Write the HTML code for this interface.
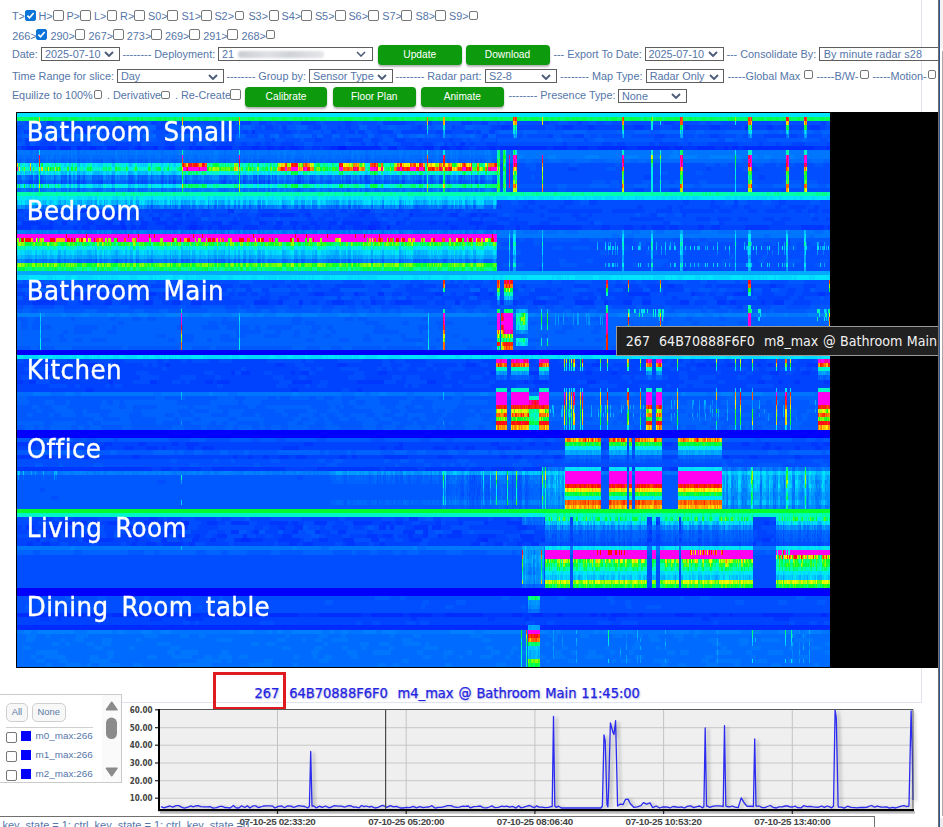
<!DOCTYPE html><html><head><meta charset="utf-8"><title>heatmap</title><style>
html,body{margin:0;padding:0;background:#fff;overflow:hidden;}
body{width:943px;height:827px;overflow:hidden;position:relative;font-family:"Liberation Sans",Arial,sans-serif;font-size:10.85px;color:#5576a9;}
.a{position:absolute;white-space:nowrap;}
.t{position:absolute;white-space:nowrap;line-height:12px;height:12px;}
.cb{position:absolute;box-sizing:border-box;border:1px solid #767676;border-radius:2px;background:#fff;}
.cb.on{background:#0b74d8;border-color:#0b74d8;}
.sel{position:absolute;box-sizing:border-box;border:1px solid #5e5e5e;background:#fff;height:13.8px;line-height:13px;font-size:10.85px;padding-left:3px;white-space:nowrap;overflow:hidden;}
.sel svg{position:absolute;right:4.5px;top:3.4px;}
.btn{position:absolute;box-sizing:border-box;background:#0d9a0d;color:#fff;border-radius:4px;text-align:center;font-size:10.2px;line-height:19px;height:19.5px;box-shadow:0 2px 2px rgba(0,0,0,.28),0 0 1px rgba(0,0,0,.2);}
.hm{position:absolute;left:0;top:0;}
.hmw{position:absolute;left:17px;top:113px;width:813px;height:554px;overflow:hidden;}
.lab{position:absolute;left:26.8px;color:#fff;font-family:"DejaVu Sans","Liberation Sans",sans-serif;font-size:24.6px;line-height:30px;white-space:nowrap;word-spacing:4.6px;letter-spacing:.4px;transform:scale(1,1.07);transform-origin:0 0;-webkit-text-stroke:.35px #fff;}
.tip{position:absolute;left:616px;top:326px;width:340px;height:30px;box-sizing:border-box;border:1px solid #9a9a9a;background:#212121;color:#f2f2f2;font-family:"DejaVu Sans Condensed","DejaVu Sans","Liberation Sans",sans-serif;font-size:14.1px;line-height:28px;padding-left:8.8px;white-space:pre;word-spacing:.5px;}
.info{position:absolute;left:254.5px;top:684px;color:#2222e2;font-family:"DejaVu Sans Condensed","DejaVu Sans","Liberation Sans",sans-serif;font-size:14.5px;line-height:18px;white-space:pre;word-spacing:.75px;-webkit-text-stroke:.25px #2222e2;text-shadow:1px 1px 2px rgba(60,60,160,.35);}
.lg{position:absolute;font-size:9.9px;line-height:12px;white-space:nowrap;}
.pill{position:absolute;box-sizing:border-box;border:1px solid #cfcfcf;border-radius:5px;background:#f7f7f7;font-size:9.4px;line-height:15.8px;height:18.6px;text-align:center;top:703px;color:#5b79a6;}
.ax{position:absolute;font-family:"DejaVu Sans Condensed","DejaVu Sans","Liberation Sans",sans-serif;font-weight:bold;font-size:8px;line-height:10px;color:#444;white-space:nowrap;}
</style></head><body><div class="a" style="left:921px;top:0;width:1px;height:702px;background:#dfe4ee"></div>
<span class="t" style="left:11.9px;top:10.4px;">T&gt;</span>
<span class="cb on" style="left:25.1px;top:10.1px;width:10.9px;height:10.9px"><svg style="position:absolute;left:-1px;top:-1px" width="10.9" height="10.9" viewBox="0 0 13 13"><path d="M2.8 6.7l2.6 2.7 4.9-5.9" fill="none" stroke="#fff" stroke-width="1.9"/></svg></span>
<span class="t" style="left:38.4px;top:10.4px;">H&gt;</span>
<span class="cb" style="left:53.1px;top:10.1px;width:10.9px;height:10.9px"></span>
<span class="t" style="left:66.4px;top:10.4px;">P&gt;</span>
<span class="cb" style="left:80.1px;top:10.1px;width:10.9px;height:10.9px"></span>
<span class="t" style="left:93.9px;top:10.4px;">L&gt;</span>
<span class="cb" style="left:106.5px;top:10.1px;width:10.9px;height:10.9px"></span>
<span class="t" style="left:120.1px;top:10.4px;">R&gt;</span>
<span class="cb" style="left:134.4px;top:10.1px;width:10.9px;height:10.9px"></span>
<span class="t" style="left:148.1px;top:10.4px;">S0&gt;</span>
<span class="cb" style="left:167.4px;top:10.1px;width:10.9px;height:10.9px"></span>
<span class="t" style="left:181.4px;top:10.4px;">S1&gt;</span>
<span class="cb" style="left:200.9px;top:10.1px;width:10.9px;height:10.9px"></span>
<span class="t" style="left:214.4px;top:10.4px;">S2&gt;</span>
<span class="cb" style="left:235.3px;top:11.3px;width:8.4px;height:8.4px"></span>
<span class="t" style="left:248.4px;top:10.4px;">S3&gt;</span>
<span class="cb" style="left:268.6px;top:10.1px;width:10.9px;height:10.9px"></span>
<span class="t" style="left:281.6px;top:10.4px;">S4&gt;</span>
<span class="cb" style="left:301.1px;top:10.1px;width:10.9px;height:10.9px"></span>
<span class="t" style="left:314.9px;top:10.4px;">S5&gt;</span>
<span class="cb" style="left:335.1px;top:10.1px;width:10.9px;height:10.9px"></span>
<span class="t" style="left:348.4px;top:10.4px;">S6&gt;</span>
<span class="cb" style="left:367.9px;top:10.1px;width:10.9px;height:10.9px"></span>
<span class="t" style="left:382.2px;top:10.4px;">S7&gt;</span>
<span class="cb" style="left:401.4px;top:10.1px;width:10.9px;height:10.9px"></span>
<span class="t" style="left:415.5px;top:10.4px;">S8&gt;</span>
<span class="cb" style="left:434.7px;top:10.1px;width:10.9px;height:10.9px"></span>
<span class="t" style="left:449.0px;top:10.4px;">S9&gt;</span>
<span class="cb" style="left:469.4px;top:11.3px;width:8.3px;height:8.3px"></span>
<span class="t" style="left:12.2px;top:30.4px;">266&gt;</span>
<span class="cb on" style="left:36.4px;top:28.9px;width:10.9px;height:10.9px"><svg style="position:absolute;left:-1px;top:-1px" width="10.9" height="10.9" viewBox="0 0 13 13"><path d="M2.8 6.7l2.6 2.7 4.9-5.9" fill="none" stroke="#fff" stroke-width="1.9"/></svg></span>
<span class="t" style="left:50.4px;top:30.4px;">290&gt;</span>
<span class="cb" style="left:74.6px;top:28.9px;width:10.9px;height:10.9px"></span>
<span class="t" style="left:88.6px;top:30.4px;">267&gt;</span>
<span class="cb" style="left:112.8px;top:28.9px;width:10.9px;height:10.9px"></span>
<span class="t" style="left:126.8px;top:30.4px;">273&gt;</span>
<span class="cb" style="left:151.0px;top:28.9px;width:10.9px;height:10.9px"></span>
<span class="t" style="left:165.0px;top:30.4px;">269&gt;</span>
<span class="cb" style="left:189.2px;top:28.9px;width:10.9px;height:10.9px"></span>
<span class="t" style="left:203.2px;top:30.4px;">291&gt;</span>
<span class="cb" style="left:227.4px;top:28.9px;width:10.9px;height:10.9px"></span>
<span class="t" style="left:241.4px;top:30.4px;">268&gt;</span>
<span class="cb" style="left:265.8px;top:30.0px;width:8.9px;height:8.9px"></span>
<span class="t" style="left:11.9px;top:48.4px;">Date:</span>
<span class="sel" style="left:41.0px;top:47.1px;width:78.5px;height:13.8px">2025-07-10<svg width="10" height="6" viewBox="0 0 10 6"><path d="M1 1l4 4 4-4" fill="none" stroke="#4d5d78" stroke-width="1.9"/></svg></span>
<span class="t" style="left:122.4px;top:48.4px;">-------- Deployment:</span>
<span class="sel" style="left:218px;top:47.1px;width:155px;height:13.8px">21<span style="position:absolute;left:19px;top:2.5px;width:86px;height:7px;border-radius:3px;background:linear-gradient(90deg,#c9ccd2,#dfe1e5 35%,#cfd2d8 60%,#e6e7ea);filter:blur(1.2px)"></span><svg width="10" height="6" viewBox="0 0 10 6" style="right:6px"><path d="M1 1l4 4 4-4" fill="none" stroke="#4d5d78" stroke-width="1.6"/></svg></span>
<span class="btn" style="left:378.0px;top:45.0px;width:83.5px">Update</span>
<span class="btn" style="left:465.5px;top:45.0px;width:84.0px">Download</span>
<span class="t" style="left:553.4px;top:48.4px;">--- Export To Date:</span>
<span class="sel" style="left:644.5px;top:47.1px;width:79.2px;height:13.8px">2025-07-10<svg width="10" height="6" viewBox="0 0 10 6"><path d="M1 1l4 4 4-4" fill="none" stroke="#4d5d78" stroke-width="1.9"/></svg></span>
<span class="t" style="left:726.4px;top:48.4px;">--- Consolidate By:</span>
<span class="sel" style="left:818.7px;top:47.1px;width:140.0px;height:13.8px"><span style="padding-left:1px;letter-spacing:.07px">By minute radar s28</span><svg width="10" height="6" viewBox="0 0 10 6"><path d="M1 1l4 4 4-4" fill="none" stroke="#4d5d78" stroke-width="1.9"/></svg></span>
<span class="t" style="left:11.9px;top:70.4px;">Time Range for slice:</span>
<span class="sel" style="left:117.0px;top:69.4px;width:106.6px;height:13.8px">Day<svg width="10" height="6" viewBox="0 0 10 6"><path d="M1 1l4 4 4-4" fill="none" stroke="#4d5d78" stroke-width="1.9"/></svg></span>
<span class="t" style="left:226.4px;top:70.4px;">-------- Group by:</span>
<span class="sel" style="left:309.0px;top:69.4px;width:83.7px;height:13.8px">Sensor Type<svg width="10" height="6" viewBox="0 0 10 6"><path d="M1 1l4 4 4-4" fill="none" stroke="#4d5d78" stroke-width="1.9"/></svg></span>
<span class="t" style="left:395.4px;top:70.4px;">-------- Radar part:</span>
<span class="sel" style="left:485.0px;top:69.4px;width:71.5px;height:13.8px">S2-8<svg width="10" height="6" viewBox="0 0 10 6"><path d="M1 1l4 4 4-4" fill="none" stroke="#4d5d78" stroke-width="1.9"/></svg></span>
<span class="t" style="left:560.1px;top:70.4px;">-------- Map Type:</span>
<span class="sel" style="left:645.7px;top:69.4px;width:78.8px;height:13.8px">Radar Only<svg width="10" height="6" viewBox="0 0 10 6"><path d="M1 1l4 4 4-4" fill="none" stroke="#4d5d78" stroke-width="1.9"/></svg></span>
<span class="t" style="left:727.4px;top:70.4px;">-----Global Max</span>
<span class="cb" style="left:804.0px;top:70.3px;width:8.7px;height:8.7px"></span>
<span class="t" style="left:816.4px;top:70.4px;">-----B/W-</span>
<span class="cb" style="left:860.0px;top:70.3px;width:8.7px;height:8.7px"></span>
<span class="t" style="left:872.4px;top:70.4px;">-----Motion-</span>
<span class="cb" style="left:927.5px;top:70.3px;width:8.7px;height:8.7px"></span>
<span class="t" style="left:11.9px;top:89.1px;">Equilize to 100%</span>
<span class="cb" style="left:93.7px;top:90.3px;width:8.3px;height:8.3px"></span>
<span class="t" style="left:106.9px;top:89.1px;">. Derivative</span>
<span class="cb" style="left:161.4px;top:90.5px;width:8.3px;height:8.3px"></span>
<span class="t" style="left:174.9px;top:89.1px;">. Re-Create</span>
<span class="cb" style="left:230.3px;top:89.2px;width:10.4px;height:10.4px"></span>
<span class="btn" style="left:245.0px;top:87.0px;width:82.0px">Calibrate</span>
<span class="btn" style="left:333.0px;top:87.0px;width:82.5px">Floor Plan</span>
<span class="btn" style="left:421.0px;top:87.0px;width:82.7px">Animate</span>
<span class="t" style="left:508.4px;top:89.1px;">-------- Presence Type:</span>
<span class="sel" style="left:618.0px;top:88.9px;width:68.5px;height:13.8px">None<svg width="10" height="6" viewBox="0 0 10 6"><path d="M1 1l4 4 4-4" fill="none" stroke="#4d5d78" stroke-width="1.9"/></svg></span>
<div class="a" style="left:16px;top:112px;width:922px;height:556px;background:#000"></div>
<div class="hmw"><svg class="hm" width="813" height="554" viewBox="0 0 813 554" shape-rendering="crispEdges" fill="none"><path fill="#00e4ff" d="M0 0h813v4h-813zM0 83h813v4h-813zM0 162h813v5h-813z"/><path fill="#00ff6b" d="M0 4h813v4h-813z"/><path fill="#004eff" d="M0 8h813v4h-813zM0 21h813v4h-813zM0 29h813v4h-813zM0 50h813v4h-813zM0 54h813v4h-813zM0 58h813v4h-813zM0 62h813v5h-813zM0 67h813v4h-813zM0 75h813v4h-813zM0 87h813v5h-813zM0 92h813v4h-813zM0 100h813v4h-813zM0 104h813v4h-813zM0 108h813v4h-813zM0 129h813v4h-813zM0 133h813v4h-813zM0 137h813v5h-813zM0 142h813v4h-813zM0 146h813v4h-813zM0 150h813v4h-813zM0 154h813v4h-813zM0 167h813v4h-813zM0 175h813v4h-813zM0 183h813v4h-813zM0 192h813v4h-813zM0 246h813v4h-813zM0 346h813v4h-813zM0 350h813v4h-813zM0 417h813v4h-813zM0 442h813v4h-813zM0 446h813v4h-813zM0 450h813v4h-813zM0 454h813v4h-813zM0 458h813v4h-813zM0 462h813v5h-813zM0 467h813v4h-813zM0 471h813v4h-813zM0 483h813v4h-813zM0 487h813v5h-813zM0 492h813v4h-813zM0 496h813v4h-813z"/><path fill="#0043ff" d="M0 12h813v5h-813zM0 96h813v4h-813zM0 112h813v5h-813zM0 171h813v4h-813zM0 179h813v4h-813zM0 187h813v5h-813zM0 250h813v4h-813zM0 254h813v4h-813zM0 258h813v4h-813zM0 262h813v5h-813zM0 267h813v4h-813zM0 271h813v4h-813zM0 275h813v4h-813zM0 329h813v4h-813zM0 333h813v4h-813zM0 342h813v4h-813zM0 404h813v4h-813zM0 412h813v5h-813zM0 421h813v4h-813zM0 425h813v4h-813zM0 429h813v4h-813zM0 504h813v4h-813zM0 508h813v4h-813z"/><path fill="#0058ff" d="M0 17h813v4h-813zM0 25h813v4h-813zM0 196h813v4h-813zM0 233h813v4h-813zM0 283h813v4h-813zM0 287h813v5h-813zM0 292h813v4h-813zM0 296h813v4h-813zM0 300h813v4h-813zM0 304h813v4h-813zM0 312h813v5h-813zM0 325h813v4h-813zM0 362h813v5h-813zM0 367h813v4h-813zM0 371h813v4h-813zM0 375h813v4h-813zM0 379h813v4h-813zM0 383h813v4h-813zM0 387h813v5h-813zM0 392h813v4h-813z"/><path fill="#002cff" d="M0 33h813v4h-813zM0 500h813v4h-813zM0 512h813v5h-813z"/><path fill="#0076ff" d="M0 37h813v5h-813zM0 117h813v4h-813zM0 279h813v4h-813zM0 433h813v4h-813z"/><path fill="#006cff" d="M0 42h813v4h-813zM0 46h813v4h-813zM0 521h813v4h-813zM0 525h813v4h-813zM0 529h813v4h-813zM0 533h813v4h-813zM0 537h813v5h-813zM0 542h813v4h-813zM0 546h813v4h-813zM0 550h813v4h-813z"/><path fill="#0062ff" d="M0 71h813v4h-813zM0 204h813v4h-813zM0 208h813v4h-813zM0 212h813v5h-813zM0 217h813v4h-813zM0 221h813v4h-813zM0 225h813v4h-813zM0 229h813v4h-813zM0 308h813v4h-813zM0 337h813v5h-813zM0 437h813v5h-813z"/><path fill="#00ffaa" d="M0 79h813v4h-813z"/><path fill="#ff00f0" d="M0 121h813v4h-813zM0 125h813v4h-813z"/><path fill="#00a8ff" d="M0 158h813v4h-813z"/><path fill="#0080ff" d="M0 200h813v4h-813zM0 358h813v4h-813zM0 517h813v4h-813z"/><path fill="#0000fc" d="M0 237h813v5h-813zM0 317h813v4h-813zM0 321h813v4h-813zM0 475h813v4h-813zM0 479h813v4h-813z"/><path fill="#00d8ff" d="M0 242h813v4h-813z"/><path fill="#0037ff" d="M0 354h813v4h-813zM0 408h813v4h-813z"/><path fill="#00ff2c" d="M0 396h813v4h-813z"/><path fill="#00f4cc" d="M0 400h813v4h-813z"/><path stroke="#001dfe" stroke-width="4" d="M321 35h8"/><path stroke="#002cff" stroke-width="4" d="M48 410h8m108 0h8m462 0h1m4 0h2m117 0h1M224 427h9m231 0h7"/><path stroke="#002cff" stroke-width="5" d="M105 114.5h4m64 0h7m171 0h8m11 0h3"/><path stroke="#0037ff" stroke-width="4" d="M66 19h4m165 0h3M443 31h5M5 35h5m13 0h8m33 0h8m7 0h7m14 0h12m5 0h3m5 0h12m10 0h5m23 0h4m7 0h13m23 0h13m7 0h8m7 0h5m6 0h5m8 0h6m8 0h8m3 0h7m75 0h19m25 0h7m6 0h7m7 0h13m7 0h4m46 0h7m14 0h10m11 0h10m29 0h10m33 0h4m8 0h15m18 0h9m4 0h4m6 0h5m71 0h13M60 69h1m190 0h1M63 98h8m140 0h6m129 0h7M21 102h8m51 0h20m4 0h4m49 0h8m4 0h3m72 0h13m6 0h14m12 0h5m48 0h6m44 0h4m37 0h8m12 0h7m5 0h7M135 106h8M5 110h19m8 0h4m9 0h5m20 0h7m11 0h8m7 0h5m16 0h7m8 0h11m6 0h9m8 0h7m15 0h10m9 0h8m20 0h7m10 0h7m7 0h8m12 0h7m12 0h8m5 0h21m7 0h10m16 0h4m30 0h7m8 0h3m21 0h14M93 173h10m59 0h2m1 0h2m484 0h6m96 0h6M17 181h9m18 0h5m9 0h7m18 0h5m7 0h4m31 0h9m7 0h10m32 0h8m101 0h10m30 0h4m20 0h6m51 0h8m31 0h6m9 0h5m135 0h21m41 0h4m39 0h14m70 0h7M68 185h7M69 252h13m14 0h7m46 0h4m105 0h10m52 0h10m119 0h10m101 0h3m1 0h1m10 0h8m97 0h9m4 0h6m11 0h8m22 0h4m7 0h5m34 0h11M30 260h8m32 0h8m136 0h4m6 0h9m41 0h4m5 0h9m69 0h9m103 0h6m33 0h10m46 0h7m19 0h7m152 0h9m23 0h8M0 269h6m6 0h7m73 0h4m37 0h7m48 0h8m4 0h13m62 0h20m45 0h27m43 0h9m88 0h4m5 0h15m39 0h9m162 0h7m13 0h5m11 0h6m24 0h6M69 277h8m197 0h7m59 0h5M0 331h19m17 0h17m34 0h8m26 0h8m26 0h6m8 0h13m105 0h9m86 0h4m88 0h8m30 0h6m9 0h7m50 0h3m60 0h9m69 0h8m15 0h5m41 0h7m5 0h7M32 335h5m14 0h8m22 0h7m19 0h10m12 0h12m4 0h4m21 0h7m8 0h12m68 0h17m81 0h6m8 0h9m30 0h13m9 0h4m6 0h10m22 0h14m5 0h6m105 0h2m133 0h8m5 0h7m13 0h5m15 0h7M0 344h14m14 0h9m28 0h6m7 0h4m33 0h8m93 0h4m11 0h5m10 0h6m10 0h10m7 0h10m33 0h7m6 0h5m27 0h24m30 0h14m48 0h8m6 0h8m13 0h5m14 0h7m47 0h1m115 0h5m21 0h8m37 0h6M26 406h5m101 0h8m252 0h9M26 419h10m15 0h7m92 0h8m56 0h8m15 0h5m33 0h6m17 0h5m18 0h8m57 0h12m8 0h5m24 0h10m187 0h3M32 423h8m25 0h10m36 0h9m26 0h6m9 0h7m9 0h6m17 0h10m16 0h4m35 0h10m75 0h10m6 0h10m15 0h5m10 0h5m10 0h4m5 0h15m16 0h18m24 0h14M19 427h4m43 0h30m22 0h4m22 0h6m25 0h7m11 0h6m18 0h7m9 0h13m15 0h22m19 0h9m15 0h11m17 0h8m30 0h13m54 0h5m41 0h12m7 0h4m26 0h2m74 0h5m27 0h2m81 0h9m4 0h1M10 431h6m9 0h8m81 0h6m9 0h10m7 0h20m6 0h6m94 0h8m6 0h10m33 0h9m25 0h5m86 0h9m15 0h8m14 0h6m8 0h8m214 0h3M14 502h6m15 0h15m17 0h7m8 0h13m14 0h7m30 0h4m8 0h17m8 0h10m16 0h15m19 0h10m28 0h21m42 0h10m32 0h6m23 0h13m38 0h29m10 0h10m11 0h14m6 0h27m7 0h4m5 0h5m16 0h11m5 0h32m19 0h17m8 0h10m4 0h29m31 0h28m6 0h3M23 506h9m8 0h4m89 0h12m24 0h17m208 0h6m71 0h7m30 0h4m79 0h8m86 0h8m64 0h15"/><path stroke="#0037ff" stroke-width="5" d="M484 14.5h9m53 0h10m15 0h6m40 0h10m41 0h4m21 0h10m25 0h3m19 0h6m37 0h10M0 114.5h14m7 0h15m21 0h3m5 0h8m6 0h26m9 0h5m3 0h8m18 0h12m9 0h4m7 0h6m5 0h4m6 0h14m12 0h14m16 0h7m12 0h3m6 0h7m6 0h5m8 0h3m8 0h6m8 0h15m8 0h5m69 0h8m18 0h3m8 0h17m12 0h4m10 0h52m19 0h9m14 0h9m8 0h5m6 0h13m4 0h9m20 0h6m7 0h9m25 0h24m32 0h23m4 0h2M15 189.5h23m28 0h8m14 0h7m32 0h9m19 0h9m10 0h10m53 0h14m10 0h5m16 0h4m29 0h12m27 0h5m19 0h17m43 0h5m40 0h4m9 0h4m16 0h13m29 0h19m10 0h4m15 0h9m10 0h9m29 0h9m28 0h9m4 0h6m25 0h4m9 0h10M9 414.5h8m17 0h14m15 0h4m40 0h8m41 0h15m91 0h6m9 0h9m76 0h7m4 0h4m20 0h14m4 0h9m76 0h10m153 0h1"/><path stroke="#0043ff" stroke-width="4" d="M19 10h3m8 0h7m9 0h8m45 0h6m29 0h6m4 0h7m50 0h6m4 0h7m6 0h10m8 0h7m35 0h15m29 0h6m32 0h23m22 0h4m29 0h11m9 0h7m53 0h1m1 0h6m28 0h5m82 0h10m147 0h5M7 19h5m3 0h6m14 0h3m6 0h13m6 0h3m19 0h3m4 0h7m11 0h5m34 0h3m5 0h3m6 0h8m20 0h3m12 0h11m6 0h5m35 0h8m40 0h5m13 0h6m3 0h7m13 0h15m8 0h26m9 0h7m2 0h7m13 0h8m4 0h4m8 0h6M88 23h5m372 0h6m60 0h5m21 0h10m71 0h10m45 0h9m45 0h22m3 0h8M8 27h4m14 0h18m53 0h5m45 0h8m55 0h8m37 0h3m40 0h7m27 0h14m8 0h8m15 0h11m13 0h4m27 0h4m43 0h1M8 31h5m10 0h13m29 0h5m29 0h16m5 0h4m24 0h10m17 0h4m16 0h4m3 0h15m7 0h6m8 0h6m4 0h6m10 0h13m67 0h5m8 0h4m23 0h14m8 0h10m11 0h3m5 0h4m14 0h4m12 0h11m66 0h4m35 0h10m5 0h8m24 0h5m5 0h19m10 0h4m16 0h30m21 0h4m13 0h4m12 0h13m22 0h3M0 35h5m34 0h4m11 0h6m26 0h4m22 0h5m24 0h6m11 0h14m43 0h7m65 0h8m8 0h3m58 0h7m9 0h8m29 0h6m29 0h7M551 56h9m129 0h5m41 0h6M12 69h4m4 0h1m2 0h2m19 0h1m7 0h1m8 0h2m3 0h1m15 0h1m1 0h2m9 0h1m18 0h1m10 0h1m19 0h1m10 0h3m47 0h3m17 0h1m12 0h1m2 0h2m3 0h1m4 0h1m27 0h4m11 0h1m36 0h1m16 0h2m1 0h1m5 0h1m26 0h2m15 0h2m3 0h1m15 0h2m7 0h1m10 0h1m14 0h3m3 0h1M617 77h10m26 0h8m103 0h5M480 94h5m21 0h5m11 0h7m13 0h6m72 0h6m24 0h5m7 0h4m27 0h10m12 0h6m6 0h6m25 0h6m7 0h18m8 0h5M8 102h3m3 0h7m16 0h9m11 0h6m37 0h4m9 0h6m13 0h4m6 0h4m7 0h4m15 0h6m6 0h10m5 0h14m8 0h9m9 0h5m13 0h6m14 0h5m4 0h3m17 0h13m13 0h10m6 0h10m6 0h7m5 0h5m15 0h29m5 0h3m16 0h4m7 0h5m7 0h8m43 0h4m28 0h8m8 0h4m58 0h7m25 0h4M0 106h7m7 0h7m40 0h13m7 0h4m9 0h4m5 0h6m12 0h6m22 0h8m3 0h6m3 0h15m32 0h4m3 0h11m4 0h5m47 0h7m4 0h7m8 0h7m3 0h34m26 0h7m47 0h15m8 0h3m14 0h13m4 0h4m30 0h12m16 0h12m42 0h34m32 0h14m7 0h14m7 0h10m15 0h11m7 0h10m21 0h6m8 0h4M24 110h8m4 0h4m20 0h10m7 0h11m25 0h4m14 0h8m11 0h6m9 0h8m7 0h15m16 0h3m8 0h12m15 0h7m25 0h12m7 0h12m34 0h7m10 0h8m12 0h6m4 0h20m7 0h8m3 0h21m14 0h14m13 0h18m12 0h10m40 0h4m69 0h7m49 0h5m48 0h13M522 156h3m137 0h1m3 0h4M102 177h7m18 0h6m32 0h6m23 0h16m19 0h6m10 0h7m61 0h10m66 0h18m56 0h8m25 0h5m17 0h16m6 0h5m35 0h8m18 0h5m1 0h14m7 0h9m4 0h21m59 0h5m3 0h2m9 0h9m17 0h8m8 0h6M6 185h10m5 0h6m13 0h14m9 0h5m20 0h6m15 0h6m17 0h4m6 0h9m9 0h54m29 0h10m9 0h10m48 0h4m29 0h5m31 0h5m16 0h7m8 0h27m8 0h20m3 0h1m18 0h17m21 0h7m9 0h10m5 0h9m4 0h5m9 0h19m8 0h9m21 0h6m36 0h13m30 0h33m8 0h6M720 194h6M7 248h30m13 0h23m20 0h14m33 0h6m6 0h12m6 0h5m17 0h10m13 0h35m35 0h4m8 0h24m24 0h20m8 0h5m10 0h21m40 0h4m12 0h14m11 0h4m18 0h7m13 0h10m9 0h1m1 0h1m1 0h1m2 0h5m1 0h1m1 0h1m12 0h4m1 0h5m23 0h11m1 0h5m6 0h4m6 0h5m6 0h4m1 0h5m7 0h5m10 0h9m10 0h6m6 0h4m1 0h3m4 0h4m1 0h13m31 0h17M135 356h9m10 0h8m22 0h11m73 0h32m63 0h5m32 0h8m41 0h4m14 0h7m23 0h9m139 0h8M457 377h1M15 410h6m14 0h9m37 0h9m44 0h8m42 0h6m10 0h8m32 0h13m18 0h4m6 0h6m31 0h9m28 0h10m9 0h5m7 0h9m8 0h16m9 0h14m29 0h18m38 0h1m25 0h3m74 0h4m7 0h2m19 0h2m72 0h11m5 0h6M0 419h10m6 0h5m25 0h5m37 0h9m19 0h7m4 0h6m8 0h9m24 0h17m9 0h8m25 0h4m11 0h13m5 0h9m28 0h10m37 0h6m131 0h17m13 0h10m26 0h3m106 0h2m76 0h10m8 0h1"/><path stroke="#0043ff" stroke-width="5" d="M348 64.5h1m278 0h7m108 0h6M511 89.5h7m29 0h9m16 0h8m86 0h6m22 0h4m19 0h4m41 0h7M457 364.5h1"/><path stroke="#004eff" stroke-width="4" d="M0 19h4m8 0h3m6 0h1m1 0h5m13 0h3m13 0h6m11 0h6m19 0h11m12 0h9m5 0h13m11 0h5m9 0h20m7 0h8m11 0h2m1 0h3m5 0h4m3 0h28m8 0h6m4 0h12m8 0h3m12 0h13m23 0h6m50 0h8m16 0h13m8 0h4M0 27h5m7 0h14m25 0h7m23 0h9m23 0h4m4 0h5m14 0h7m24 0h15m18 0h3m41 0h7m12 0h16m4 0h11m7 0h10m3 0h14m30 0h4m22 0h13m4 0h27m4 0h10m4 0h4m9 0h5m99 0h4m66 0h8m22 0h4m30 0h7m27 0h15m53 0h7M6 98h22m6 0h29m30 0h10m7 0h7m7 0h4m4 0h3m33 0h5m5 0h7m7 0h19m13 0h9m29 0h20m11 0h19m6 0h5m7 0h8m15 0h5m9 0h12m8 0h6m11 0h16m7 0h12m5 0h3m7 0h7m3 0h34m19 0h14m54 0h10m33 0h11m16 0h8m34 0h5m13 0h16m9 0h8m22 0h8m7 0h6m10 0h4M494 127h2m3 0h3m6 0h8m8 0h1m1 0h2m35 0h9m15 0h5m8 0h5m2 0h9m40 0h7m3 0h7m10 0h6m31 0h9m35 0h5m2 0h2m39 0h1M15 173h8m18 0h7m5 0h7m4 0h4m9 0h6m20 0h9m17 0h5m14 0h14m14 0h9m9 0h8m14 0h7m10 0h22m6 0h9m4 0h6m10 0h8m6 0h14m30 0h16m18 0h7m7 0h5m18 0h6m17 0h5m5 0h6m6 0h16m3 0h4m11 0h6m5 0h48m15 0h17m2 0h7m24 0h8m36 0h22m7 0h4m69 0h18m13 0h13M8 181h9m13 0h9m10 0h9m30 0h7m11 0h11m4 0h9m30 0h4m8 0h10m22 0h8m5 0h4m9 0h4m7 0h7m5 0h19m10 0h9m36 0h10m11 0h13m6 0h8m10 0h7m34 0h8m5 0h8m30 0h3m3 0h4m9 0h16m28 0h21m16 0h7m49 0h13m4 0h24m14 0h4m7 0h8m29 0h9m12 0h12m8 0h8M15 252h7m30 0h4m31 0h9m30 0h5m4 0h6m137 0h9m78 0h9m11 0h8m16 0h7m24 0h5m18 0h8m87 0h2m29 0h1m1 0h5m49 0h8m8 0h8M7 256h29m19 0h4m24 0h4m58 0h5m74 0h5m53 0h12m5 0h7m17 0h19m18 0h5m5 0h5m6 0h9m10 0h9m7 0h4m10 0h18m64 0h8m12 0h1m15 0h1m1 0h2m1 0h1m1 0h1m5 0h2m1 0h1m1 0h3m7 0h7m1 0h1m10 0h7m19 0h2m1 0h5m24 0h6m15 0h5m37 0h2m1 0h4m1 0h6m6 0h6m7 0h9m5 0h5m2 0h3m1 0h5m4 0h6m6 0h6M119 260h13m55 0h10m21 0h6m23 0h8m37 0h6m39 0h10m80 0h7m34 0h5m17 0h2m170 0h8m30 0h4m25 0h7m33 0h7M19 269h14m83 0h17m22 0h9m4 0h5m89 0h13m28 0h8m56 0h12m10 0h21m31 0h5m26 0h6m82 0h10m13 0h8m20 0h4m52 0h20m14 0h7M32 273h18m8 0h5m25 0h5m4 0h8m95 0h6m53 0h12m17 0h5m7 0h10m77 0h4m4 0h7m24 0h9m11 0h27m26 0h19m54 0h28m22 0h10m17 0h5m8 0h8m6 0h24m29 0h28M325 277h7M12 327h8m12 0h8m16 0h9m5 0h10m17 0h4m51 0h21m16 0h24m22 0h7m18 0h8m32 0h9m45 0h14m36 0h9m15 0h8m66 0h4m10 0h14m8 0h10m38 0h6m18 0h1m127 0h6m31 0h14m9 0h8M141 369h8m295 0h1m8 0h5m1 0h1m12 0h1m22 0h1m6 0h1M431 373h1m11 0h1m1 0h1m6 0h2m1 0h1m1 0h1m1 0h1m2 0h2m5 0h1m1 0h1m23 0h1m7 0h1M23 377h5m401 0h1m15 0h1m7 0h3m4 0h3m8 0h1m23 0h1m6 0h2m5 0h1m14 0h1M444 381h3m3 0h1m1 0h2m2 0h2m2 0h3m6 0h1m1 0h1m17 0h1m5 0h1m5 0h1m2 0h1m3 0h2M34 385h7m411 0h1m2 0h2m2 0h2m34 0h1m6 0h1M453 394h1m1 0h2m3 0h2m28 0h1m12 0h1M0 406h17m19 0h7m4 0h9m25 0h27m38 0h4m15 0h13m21 0h5m10 0h14m26 0h30m38 0h6m37 0h13m9 0h5m9 0h7m16 0h16m31 0h5m18 0h8m25 0h1m106 0h1m4 0h4m110 0h6M0 410h15m6 0h14m21 0h8m6 0h4m26 0h9m4 0h14m32 0h5m8 0h12m24 0h6m18 0h8m47 0h10m13 0h8m9 0h9m59 0h8m21 0h4m18 0h21M0 423h21m23 0h4m8 0h9m19 0h6m39 0h7m16 0h9m28 0h6m15 0h16m4 0h9m9 0h8m19 0h19m8 0h7m16 0h8m43 0h5m30 0h10m68 0h14m32 0h2m1 0h2m3 0h1m9 0h1m9 0h1m7 0h1m5 0h1m9 0h1m14 0h1m10 0h1m16 0h1m12 0h1m18 0h2m11 0h1m24 0h1m35 0h4m18 0h1m7 0h1m23 0h1m6 0h1m2 0h1M23 427h6m4 0h7m22 0h4m68 0h10m6 0h11m5 0h9m33 0h9m70 0h8m42 0h17m8 0h6m10 0h8m19 0h7m80 0h4m37 0h1m1 0h1m2 0h2m11 0h1m5 0h1m3 0h1m8 0h2m2 0h1m1 0h2m6 0h1m1 0h1m3 0h1m3 0h3m10 0h1m3 0h1m1 0h1m8 0h2m12 0h1m1 0h1m4 0h2m19 0h2m6 0h1m10 0h2m2 0h1m1 0h3m6 0h4m30 0h1m3 0h1m17 0h4m2 0h2m4 0h1m6 0h1m7 0h3m2 0h2m3 0h1m8 0h1m1 0h2m7 0h1M43 431h8m23 0h6m24 0h5m69 0h10m24 0h4m41 0h4m57 0h7m27 0h5m45 0h8m53 0h5m18 0h4m32 0h13m1 0h1m2 0h1m1 0h1m2 0h9m3 0h2m1 0h2m1 0h4m1 0h2m1 0h7m2 0h1m1 0h1m1 0h1m1 0h2m1 0h1m1 0h1m1 0h3m1 0h1m1 0h2m1 0h1m1 0h2m1 0h1m3 0h4m3 0h7m1 0h4m3 0h5m1 0h1m4 0h1m1 0h10m1 0h2m1 0h2m1 0h8m2 0h1m2 0h5m3 0h1m3 0h4m1 0h2m1 0h1m1 0h1m3 0h3m2 0h2m1 0h1m2 0h1m2 0h7m4 0h1m1 0h2m1 0h5m3 0h6m14 0h2m1 0h3m2 0h5m1 0h3m1 0h17m1 0h2m1 0h1m1 0h1m2 0h1m1 0h2m2 0h4M166 510h7m5 0h4m61 0h14m82 0h6m10 0h8m26 0h10m4 0h9m97 0h9m12 0h7m44 0h13m10 0h17m75 0h5m71 0h6m14 0h8m7 0h6"/><path stroke="#004eff" stroke-width="5" d="M0 14.5h7m16 0h10m14 0h13m26 0h19m42 0h5m15 0h5m28 0h9m5 0h8m16 0h7m11 0h6m28 0h6m14 0h11m3 0h4m6 0h8m8 0h10m34 0h6m5 0h5m28 0h10m24 0h3m53 0h10m105 0h12m11 0h2m56 0h4m80 0h5M51 189.5h10m34 0h9m32 0h9m19 0h10m54 0h9m29 0h16m4 0h8m7 0h8m28 0h7m4 0h6m14 0h5m37 0h8m10 0h10m5 0h5m16 0h10m35 0h7m26 0h16m19 0h10m28 0h10m9 0h14m24 0h6m12 0h10m67 0h9m18 0h19M4 264.5h15m11 0h10m43 0h9m31 0h19m21 0h16m19 0h6m52 0h11m15 0h7m42 0h17m27 0h10m4 0h14m26 0h5m19 0h12m27 0h2m18 0h5m88 0h8m4 0h12m6 0h4m6 0h6m11 0h9m10 0h18m21 0h9m16 0h10M280 364.5h6m167 0h1m1 0h1m45 0h2M5 414.5h4m44 0h5m9 0h5m11 0h4m12 0h8m16 0h8m5 0h15m20 0h10m20 0h36m9 0h6m39 0h12m5 0h7m16 0h6m10 0h4m6 0h5m7 0h4m4 0h11m23 0h4m19 0h18m67 0h9m25 0h3m74 0h5m4 0h1m104 0h15"/><path stroke="#0058ff" stroke-width="4" d="M0 10h8m3 0h8m4 0h7m7 0h9m8 0h4m37 0h4m6 0h8m16 0h5m17 0h3m53 0h4m7 0h3m13 0h8m13 0h3m18 0h8m19 0h4m33 0h5m15 0h6m32 0h12m5 0h11m4 0h14m27 0h9m3 0h5m53 0h10m21 0h7m8 0h8m12 0h7m22 0h6m40 0h7m5 0h10m50 0h12m43 0h4M0 23h5m46 0h8m22 0h7m59 0h3m56 0h6m57 0h8m51 0h16m21 0h7m14 0h6m16 0h2m1 0h1m6 0h5m11 0h6m18 0h7m41 0h4m26 0h8m23 0h6m7 0h5m22 0h7m63 0h4m38 0h7m79 0h5M0 31h8m5 0h5m56 0h13m37 0h6m49 0h13m95 0h9m32 0h6m15 0h3m9 0h5m6 0h8m40 0h7M2 48h2m6 0h1m1 0h2m3 0h1m1 0h2m2 0h1m13 0h1m6 0h1m1 0h1m5 0h2m6 0h3m3 0h1m10 0h1m1 0h1m1 0h1m1 0h3m9 0h3m13 0h1m1 0h2m1 0h1m4 0h1m1 0h3m2 0h3m13 0h2m10 0h1m1 0h1m48 0h2m12 0h1m4 0h3m8 0h1m1 0h1m2 0h2m1 0h3m3 0h1m7 0h1m18 0h1m1 0h4m13 0h1m32 0h4m10 0h1m3 0h3m1 0h1m5 0h1m8 0h3m11 0h1m3 0h1m16 0h3m9 0h1m9 0h1m5 0h3m9 0h3m9 0h1m3 0h3m2 0h2m12 0h1M508 52h11m33 0h9m37 0h5m85 0h10m5 0h8m10 0h10m7 0h9m12 0h4m9 0h5m20 0h9M513 56h6m70 0h10m127 0h5M645 60h6m28 0h7M0 69h1m2 0h1m4 0h3m7 0h1m6 0h1m1 0h2m9 0h1m7 0h1m1 0h1m8 0h1m7 0h1m2 0h1m7 0h1m1 0h1m11 0h1m25 0h1m5 0h2m2 0h1m3 0h1m4 0h1m10 0h1m1 0h2m3 0h2m6 0h1m15 0h3m1 0h1m5 0h1m2 0h1m11 0h2m8 0h3m4 0h1m1 0h1m7 0h1m2 0h3m14 0h2m4 0h1m1 0h2m6 0h1m4 0h2m1 0h1m3 0h1m1 0h1m5 0h1m6 0h1m3 0h1m1 0h1m4 0h3m3 0h2m1 0h1m1 0h1m3 0h1m7 0h1m1 0h1m7 0h1m1 0h2m7 0h1m9 0h1m3 0h1m7 0h4m2 0h4m1 0h1m15 0h2m2 0h1m8 0h1m4 0h1m1 0h1m8 0h1m15 0h2m4 0h1m1 0h2m16 0h1m7 0h1m1 0h1m97 0h14m5 0h8m23 0h9m8 0h1m1 0h8m6 0h5m19 0h8m45 0h2m29 0h3m3 0h13m5 0h10M483 73h3m14 0h25m1 0h14m10 0h23m19 0h13m2 0h10m14 0h3m2 0h7m1 0h2m31 0h8m41 0h5m9 0h16m28 0h3m14 0h8M61 77h2m420 0h3m3 0h3m49 0h8M42 94h1m17 0h5m7 0h2m4 0h1m20 0h1m9 0h1m5 0h1m19 0h1m22 0h1m5 0h1m3 0h1m3 0h1m24 0h1m19 0h1m3 0h1m4 0h1m5 0h2m7 0h1m1 0h1m24 0h1m11 0h1m4 0h2m12 0h1m31 0h1m1 0h1m7 0h1m13 0h1m9 0h2m16 0h1m14 0h2m2 0h1m23 0h2m21 0h2m7 0h1m15 0h2m3 0h1M217 98h7m9 0h8m117 0h9m80 0h7M486 102h7m125 0h5m17 0h9m8 0h8m128 0h4M32 106h7m145 0h7m69 0h3m102 0h5M577 110h8m68 0h11m29 0h9M480 127h12m1 0h1m8 0h6m8 0h8m4 0h35m9 0h15m5 0h8m16 0h18m2 0h20m17 0h10m6 0h29m1 0h1m9 0h2m3 0h30m9 0h14m2 0h23M480 131h4m33 0h6m97 0h2m2 0h5m9 0h1m1 0h8m1 0h4m1 0h3m24 0h10m26 0h1m1 0h2m15 0h10m8 0h5m15 0h5m15 0h6m8 0h5M481 135h11m1 0h1m42 0h10m8 0h19m34 0h4m8 0h2m46 0h1m1 0h3m62 0h2m1 0h2m8 0h3m1 0h1m1 0h1m6 0h1m1 0h3m1 0h1m1 0h1m2 0h5m1 0h3m10 0h4M712 144h5m28 0h5M79 148h1m19 0h2m18 0h1m14 0h2m22 0h1m5 0h2m25 0h1m6 0h1m8 0h1m18 0h1m14 0h1m23 0h1m13 0h1m5 0h1m45 0h2m22 0h1m10 0h1m15 0h2m14 0h1m3 0h1m23 0h3m28 0h2m83 0h7m20 0h7m60 0h15m53 0h10m27 0h7m19 0h2m2 0h13m19 0h8M486 152h6m1 0h3m3 0h8m36 0h17m33 0h2m2 0h1m18 0h5m1 0h1m5 0h3m6 0h9m28 0h3m1 0h3m1 0h6m1 0h1m11 0h7m5 0h5m1 0h10m6 0h2m31 0h1m2 0h5m1 0h1m20 0h5m1 0h2M0 169h6m4 0h9m8 0h5m8 0h21m21 0h18m4 0h16m10 0h9m24 0h1m1 0h5m52 0h14m32 0h6m9 0h10m10 0h23m19 0h13m14 0h21m14 0h19m2 0h5m4 0h4m5 0h6m14 0h6m13 0h2m9 0h33m6 0h9m14 0h17m16 0h8m6 0h6m1 0h2m5 0h6m16 0h2m1 0h2m5 0h19m13 0h7m10 0h18m5 0h8m3 0h19m18 0h16M374 173h8M5 177h17m44 0h6m12 0h9m40 0h19m8 0h4m11 0h10m25 0h5m4 0h10m6 0h10m7 0h21m6 0h4m8 0h4m28 0h28m14 0h12m36 0h9m49 0h5m10 0h1m14 0h6m7 0h4m37 0h15m27 0h9m20 0h7m9 0h1m1 0h2m21 0h6m8 0h13m8 0h7m27 0h9m9 0h8m31 0h5M0 185h6m29 0h5m111 0h9m147 0h13m4 0h10m9 0h10m15 0h7m6 0h8m63 0h8m63 0h8m49 0h4m92 0h5m29 0h6m19 0h5m63 0h4M6 194h10m21 0h10m45 0h20m50 0h7m15 0h24m12 0h4m9 0h5m20 0h14m13 0h20m12 0h14m7 0h8m8 0h10m19 0h14m38 0h10m14 0h14m10 0h9m8 0h11m10 0h7m9 0h9m10 0h9m14 0h10m2 0h4m24 0h6m22 0h7m32 0h4m13 0h7m16 0h5m23 0h15m24 0h20M0 206h10m8 0h5m31 0h4m35 0h5m17 0h9m6 0h9m67 0h4m65 0h10m43 0h8m5 0h9m55 0h6m1 0h1m129 0h4m1 0h4m19 0h1m2 0h10m1 0h1m1 0h3m58 0h7m15 0h6m27 0h7m25 0h7m2 0h1M4 210h7m5 0h7m78 0h6m84 0h9m4 0h16m54 0h10m4 0h10m50 0h14m23 0h7m27 0h7m2 0h8m35 0h9m3 0h1m29 0h8m5 0h4m1 0h2m24 0h3m2 0h1m19 0h1m1 0h1m1 0h2m22 0h1m1 0h4m31 0h4m24 0h7m39 0h10m7 0h6M46 219h5m6 0h18m15 0h9m120 0h3m1 0h21m14 0h6m13 0h6m10 0h7m14 0h5m37 0h26m20 0h4m132 0h11m25 0h8m16 0h10m16 0h8m17 0h13m62 0h7m3 0h5m59 0h5M42 223h5m93 0h9m14 0h1m1 0h12m26 0h10m7 0h2m1 0h5m19 0h15m14 0h6m25 0h7m33 0h6m31 0h4m48 0h6m54 0h12m17 0h6m78 0h2m1 0h7m5 0h8m27 0h7m5 0h15m53 0h10m22 0h14m20 0h6M25 227h8m10 0h7m7 0h8m9 0h15m62 0h7m8 0h10m14 0h5m8 0h18m68 0h8m25 0h10m14 0h9m12 0h6m13 0h20m13 0h4m22 0h7m14 0h14m3 0h1m27 0h13m1 0h1m35 0h6m11 0h8m15 0h4m37 0h1m1 0h5m30 0h5m8 0h6m13 0h4m14 0h2m3 0h4m18 0h5m10 0h13M27 310h8m24 0h11m6 0h8m30 0h25m6 0h19m1 0h9m19 0h6m6 0h6m9 0h22m4 0h24m10 0h6m12 0h10m7 0h30m16 0h14m8 0h13m4 0h19m5 0h2m1 0h5m5 0h8m30 0h4m53 0h13m19 0h1m1 0h2m28 0h4m6 0h4m2 0h5m7 0h5m6 0h4m6 0h9m31 0h5m17 0h10m17 0h1m1 0h4m10 0h9m1 0h2m23 0h16M560 344h1M153 348h7m37 0h4m13 0h4m36 0h9m38 0h7m9 0h9m41 0h6m10 0h9m7 0h8m33 0h12m50 0h8m17 0h10m9 0h4m2 0h3m1 0h3m2 0h6m1 0h1m2 0h3m1 0h7m10 0h1m1 0h5m1 0h6m3 0h1m3 0h1m1 0h4m4 0h4m1 0h1m1 0h1m1 0h1m1 0h1m2 0h3m1 0h4m11 0h5m2 0h1m3 0h4m2 0h2m1 0h4m1 0h8m1 0h1m1 0h2m1 0h4m2 0h1m1 0h1m1 0h4m7 0h10m44 0h8m18 0h10M18 352h8m16 0h4m30 0h10m87 0h9m55 0h6m67 0h10m58 0h4m25 0h7m10 0h5m4 0h5m6 0h4m4 0h8m35 0h20m190 0h6m30 0h24m38 0h8M777 356h1M228 406h5m175 0h8M511 410h1m2 0h1m2 0h1M21 419h5m140 0h8m48 0h7m13 0h6m13 0h5m23 0h9m100 0h8m12 0h8m26 0h5m51 0h9m13 0h1m6 0h1m1 0h1m3 0h1m1 0h1m18 0h1m3 0h1m2 0h2m1 0h1m1 0h2m7 0h3m2 0h2m2 0h2m1 0h1m3 0h1m4 0h2m2 0h1m2 0h2m8 0h1m2 0h1m2 0h1m6 0h1m1 0h1m4 0h3m1 0h1m10 0h1m13 0h2m1 0h2m18 0h6m6 0h1m8 0h1m3 0h1m1 0h2m2 0h1m5 0h1m27 0h1m5 0h1m6 0h1m8 0h2m6 0h2m6 0h1m1 0h1m2 0h2M97 423h5m192 0h8m226 0h1m1 0h1m6 0h1m6 0h2m5 0h2m3 0h7m1 0h2m2 0h1m1 0h1m3 0h1m1 0h1m6 0h4m3 0h1m3 0h4m3 0h1m4 0h2m1 0h2m3 0h1m8 0h1m4 0h1m6 0h1m1 0h2m5 0h4m2 0h4m3 0h4m3 0h2m6 0h2m2 0h1m4 0h4m2 0h1m1 0h4m2 0h5m1 0h1m5 0h1m11 0h2m1 0h2m2 0h1m1 0h1m3 0h1m26 0h3m1 0h2m6 0h1m1 0h3m5 0h3m4 0h2m1 0h1m3 0h1m5 0h4m6 0h2M528 427h4m2 0h1m1 0h2m3 0h1m1 0h4m1 0h2m2 0h1m3 0h1m1 0h2m2 0h4m1 0h2m3 0h2m7 0h1m1 0h1m1 0h1m1 0h3m1 0h1m1 0h1m3 0h1m3 0h2m2 0h2m3 0h1m1 0h1m1 0h1m1 0h1m4 0h1m3 0h5m5 0h1m1 0h1m7 0h3m1 0h5m2 0h2m1 0h2m6 0h3m1 0h1m1 0h1m1 0h2m3 0h1m7 0h1m3 0h1m2 0h3m4 0h1m3 0h2m3 0h2m3 0h8m2 0h1m1 0h2m3 0h2m24 0h1m2 0h4m1 0h2m3 0h1m1 0h2m2 0h2m8 0h3m1 0h2m1 0h1m1 0h2m2 0h1m2 0h1m1 0h1m5 0h1M540 431h1m1 0h1m23 0h1m2 0h1m8 0h1m1 0h1m1 0h1m6 0h1m10 0h1m4 0h1m2 0h2m5 0h2m7 0h1m30 0h1m5 0h1m8 0h2m2 0h1m5 0h1m4 0h2m7 0h1m9 0h2m2 0h1m1 0h2m1 0h2m9 0h2m1 0h1m2 0h1m34 0h1m6 0h1m3 0h1m17 0h1m4 0h1m7 0h2M516 473h2m6 0h1M25 485h4m19 0h7m25 0h9m38 0h5m34 0h8m28 0h4m152 0h15m10 0h6m96 0h7m49 0h8m41 0h7m66 0h4m16 0h10m86 0h9M8 494h7m60 0h9m32 0h4m61 0h4m219 0h4m20 0h9m67 0h5m100 0h6m14 0h15"/><path stroke="#0058ff" stroke-width="5" d="M7 14.5h11m15 0h8m71 0h16m32 0h5m1 0h1m11 0h3m4 0h15m9 0h5m9 0h3m8 0h4m7 0h3m14 0h3m5 0h9m25 0h6m53 0h8m8 0h15m19 0h5m11 0h6m21 0h16M2 64.5h1m11 0h1m4 0h1m4 0h1m12 0h1m10 0h1m4 0h1m6 0h1m5 0h2m7 0h1m5 0h1m13 0h1m16 0h4m5 0h1m3 0h1m19 0h1m10 0h1m50 0h2m12 0h1m4 0h3m7 0h2m9 0h1m3 0h2m2 0h1m2 0h1m36 0h1m34 0h1m12 0h1m6 0h1m7 0h1m48 0h1m6 0h1m9 0h1m5 0h1m27 0h1m5 0h1m49 0h4M494 89.5h7m62 0h9m136 0h9m4 0h9m15 0h9m39 0h10M494 139.5h2m3 0h5m79 0h7m39 0h5m2 0h5m20 0h2m3 0h3M4 214.5h6m5 0h8m1 0h10m23 0h24m14 0h5m60 0h4m1 0h1m19 0h17m8 0h12m1 0h9m6 0h5m7 0h25m20 0h9m6 0h6m42 0h10m33 0h10m10 0h5m85 0h1m33 0h11m21 0h7m16 0h8m7 0h11m4 0h8m53 0h4m5 0h10m37 0h10m17 0h4m27 0h7M483 264.5h2m1 0h1m9 0h1m8 0h1m2 0h1m1 0h1m17 0h1m100 0h2m171 0h1m3 0h3M0 339.5h16m18 0h8m10 0h6m7 0h14m4 0h10m7 0h36m21 0h4m6 0h10m9 0h17m8 0h16m5 0h29m42 0h5m4 0h18m4 0h5m25 0h13m13 0h10m9 0h22m10 0h10m20 0h4m7 0h6m37 0h6m53 0h5m21 0h2m3 0h3m87 0h46m10 0h11m33 0h4M286 414.5h5m60 0h6m283 0h3M16 439.5h7m34 0h8m46 0h16m10 0h5m37 0h10m15 0h7m19 0h24m9 0h23m30 0h19m4 0h14m7 0h16m8 0h6m12 0h27m16 0h25m25 0h4m131 0h5m101 0h13m4 0h6M21 489.5h6m83 0h8m37 0h8m44 0h7m94 0h8m90 0h6m27 0h10m144 0h5m10 0h6m104 0h9m34 0h9m30 0h8"/><path stroke="#0062ff" stroke-width="4" d="M482 19h14m10 0h14m27 0h22m31 0h4m13 0h16m10 0h20m16 0h8m22 0h20m6 0h16m11 0h4m19 0h2m3 0h6m9 0h8M5 23h9m9 0h3m10 0h7m23 0h15m32 0h7m12 0h4m14 0h15m1 0h20m33 0h3m1 0h6m12 0h6m6 0h5m23 0h14m5 0h6m9 0h8m28 0h6m35 0h8m12 0h6m10 0h6m6 0h13m18 0h8M539 27h7m32 0h9m121 0h8m69 0h5M19 44h1m40 0h1m288 0h2m1 0h1M0 48h2m2 0h2m2 0h2m1 0h1m2 0h2m2 0h1m5 0h5m2 0h1m6 0h1m6 0h1m1 0h3m6 0h2m5 0h3m1 0h3m1 0h1m3 0h2m1 0h1m1 0h1m1 0h1m6 0h1m1 0h1m1 0h2m8 0h3m1 0h1m2 0h1m1 0h1m2 0h1m1 0h1m2 0h1m1 0h1m3 0h2m6 0h2m1 0h2m1 0h1m2 0h1m2 0h1m1 0h2m2 0h4m1 0h1m1 0h3m1 0h2m3 0h4m4 0h1m1 0h4m5 0h1m1 0h3m10 0h5m3 0h3m5 0h2m3 0h1m5 0h3m1 0h1m2 0h1m1 0h1m5 0h1m3 0h3m1 0h1m2 0h1m2 0h1m3 0h1m2 0h1m3 0h3m1 0h1m3 0h1m1 0h1m4 0h3m1 0h2m2 0h5m1 0h1m4 0h3m3 0h1m1 0h5m2 0h2m1 0h3m1 0h5m6 0h1m1 0h1m4 0h1m3 0h1m3 0h1m2 0h1m2 0h1m1 0h4m1 0h1m5 0h3m1 0h1m1 0h5m5 0h2m5 0h1m2 0h1m2 0h3m5 0h2m3 0h2m1 0h1m6 0h2m1 0h1m10 0h2m3 0h1m3 0h5m1 0h2m2 0h1m1 0h1m7 0h3m7 0h2m1 0h2m22 0h6m7 0h10m1 0h6m12 0h14m16 0h15m24 0h8m8 0h5m2 0h1m29 0h3m56 0h6m22 0h7m5 0h4m21 0h4m13 0h6M5 69h1m1 0h1m13 0h1m8 0h4m2 0h1m4 0h1m14 0h1m6 0h1m5 0h1m17 0h1m1 0h1m10 0h1m1 0h2m1 0h4m1 0h1m25 0h2m2 0h2m1 0h1m3 0h1m3 0h1m3 0h1m3 0h2m9 0h2m3 0h2m3 0h1m1 0h1m1 0h1m4 0h1m1 0h2m1 0h2m13 0h3m5 0h1m12 0h1m9 0h1m7 0h1m4 0h1m2 0h1m5 0h3m4 0h1m5 0h1m8 0h1m3 0h2m11 0h1m5 0h2m6 0h2m2 0h4m4 0h1m9 0h1m2 0h1m4 0h2m6 0h1m1 0h1m7 0h2m9 0h1m8 0h2m3 0h2m3 0h2m3 0h1m12 0h2m4 0h2m9 0h1m8 0h2m6 0h1m5 0h2m2 0h1m12 0h2M2 77h2m8 0h1m1 0h2m3 0h2m2 0h1m20 0h1m7 0h1m7 0h1m5 0h1m13 0h2m1 0h1m11 0h3m13 0h3m2 0h1m4 0h1m3 0h1m8 0h1m9 0h2m10 0h3m48 0h2m17 0h2m11 0h1m7 0h1m3 0h2m2 0h1m24 0h4m29 0h1m11 0h1m4 0h3m10 0h1m4 0h3m7 0h1m8 0h1m19 0h1m16 0h1m2 0h2m4 0h1m10 0h1m7 0h1m10 0h1m10 0h1m3 0h1m4 0h1m14 0h1M26 94h1m20 0h2m18 0h1m2 0h2m2 0h1m19 0h2m1 0h1m15 0h2m5 0h1m9 0h2m21 0h1m5 0h1m6 0h1m2 0h1m5 0h2m22 0h1m4 0h4m3 0h2m5 0h1m3 0h1m4 0h2m16 0h2m18 0h1m1 0h1m9 0h1m1 0h1m4 0h1m2 0h1m7 0h2m17 0h1m2 0h1m2 0h2m4 0h1m10 0h2m3 0h1m11 0h1m31 0h1m10 0h1m3 0h1m3 0h3m2 0h1m8 0h1m5 0h1m3 0h2m25 0h1m10 0h7M61 119h1m8 0h1m1 0h1m1 0h1m24 0h1m8 0h1m6 0h1m5 0h1m12 0h1m29 0h2m6 0h1m18 0h1m5 0h2m5 0h1m1 0h1m4 0h1m9 0h2m3 0h1m5 0h1m8 0h2m36 0h1m5 0h1m13 0h1m20 0h1m10 0h1m1 0h1m21 0h1m9 0h2m15 0h2m17 0h1m25 0h1m21 0h1m8 0h1m10 0h2m1 0h1M41 148h2m5 0h1m11 0h3m1 0h1m5 0h1m1 0h3m3 0h1m19 0h1m10 0h1m5 0h1m5 0h1m9 0h1m34 0h1m2 0h2m1 0h1m2 0h1m23 0h1m1 0h1m2 0h3m4 0h2m4 0h2m3 0h1m4 0h2m3 0h2m8 0h2m1 0h1m21 0h2m8 0h1m2 0h1m3 0h1m1 0h2m7 0h1m2 0h2m11 0h1m2 0h1m1 0h1m1 0h4m6 0h1m4 0h1m7 0h1m12 0h1m10 0h1m30 0h1m2 0h2m5 0h3m6 0h1m13 0h1m18 0h3m16 0h7m5 0h1M22 177h9m422 0h10M5 198h9m7 0h26m20 0h13m37 0h10m15 0h9m40 0h18m12 0h8m15 0h9m7 0h9m31 0h4m11 0h9m15 0h13m6 0h6m8 0h7m5 0h23m32 0h10m8 0h7m8 0h8m3 0h2m40 0h5m1 0h3m13 0h7m18 0h8m11 0h20m17 0h2m1 0h5m11 0h4m7 0h26m5 0h8m14 0h4m21 0h5m11 0h5m32 0h11m3 0h4M14 235h7m17 0h17m50 0h6m51 0h2m1 0h10m18 0h6m76 0h14m14 0h11m11 0h10m30 0h4m37 0h5m1 0h2m5 0h7m4 0h20m25 0h5m3 0h1m35 0h10m57 0h3m2 0h3m16 0h13m16 0h10m19 0h6m42 0h15m3 0h5m31 0h4M0 285h10m128 0h10m17 0h3m32 0h18m10 0h23m8 0h4m10 0h19m7 0h8m10 0h8m13 0h24m28 0h8m9 0h15m13 0h10m45 0h4m38 0h15m17 0h1m1 0h2m10 0h4m23 0h5m17 0h2m16 0h4m6 0h5m1 0h1m47 0h9m1 0h4m20 0h16m1 0h8m2 0h3m1 0h27M15 294h7m13 0h16m32 0h19m7 0h7m24 0h31m6 0h24m30 0h8m10 0h45m19 0h6m4 0h4m10 0h31m10 0h10m9 0h9m9 0h25m50 0h4m38 0h3m2 0h8m19 0h1m1 0h7m4 0h6m2 0h3m1 0h1m1 0h2m1 0h7m16 0h6m1 0h2m1 0h2m19 0h6m1 0h2m5 0h13m10 0h2m2 0h4m1 0h5m1 0h1m8 0h1m1 0h2m21 0h1m1 0h6m25 0h1m2 0h1m27 0h3M20 298h5m13 0h19m9 0h4m24 0h22m8 0h37m12 0h4m15 0h14m6 0h15m31 0h9m23 0h10m10 0h12m33 0h19m9 0h7m26 0h4m8 0h8m16 0h6m6 0h15m69 0h1m1 0h1m2 0h1m1 0h1m19 0h6m15 0h8m8 0h11m1 0h3m18 0h7m17 0h8m23 0h1m1 0h8m1 0h7m1 0h4m13 0h3m4 0h4m1 0h2m25 0h5m9 0h9M10 302h6m16 0h5m7 0h15m7 0h17m8 0h21m13 0h23m9 0h6m13 0h18m17 0h13m14 0h5m22 0h6m11 0h14m7 0h7m8 0h8m7 0h16m9 0h8m11 0h10m4 0h17m17 0h5m28 0h5m13 0h3m11 0h1m41 0h4m1 0h7m17 0h2m1 0h1m1 0h8m1 0h5m9 0h1m1 0h2m1 0h2m1 0h5m60 0h9m21 0h3m1 0h3m1 0h1m1 0h5m17 0h11m9 0h7m1 0h4m11 0h1m2 0h3m1 0h6m4 0h8M77 306h9m17 0h9m27 0h18m5 0h15m7 0h28m8 0h27m30 0h7m8 0h9m5 0h6m10 0h10m7 0h18m5 0h13m15 0h5m8 0h7m11 0h5m23 0h16m8 0h6m11 0h1m42 0h14m1 0h1m1 0h2m1 0h1m1 0h1m20 0h7m1 0h6m1 0h9m15 0h8m22 0h9m1 0h5m1 0h15m1 0h5m1 0h5m1 0h4m26 0h4m25 0h3m1 0h2m31 0h5M548 344h6m1 0h1m1 0h3m1 0h2m3 0h1m2 0h2m2 0h2m2 0h1m2 0h2m16 0h2m8 0h2m10 0h1m2 0h2m4 0h5m1 0h2m3 0h1m20 0h2m1 0h1m4 0h2m1 0h2m1 0h3m1 0h1m2 0h1m1 0h1m3 0h5m1 0h3m1 0h2m1 0h1m2 0h1M550 348h2m15 0h1m14 0h2m9 0h1m12 0h2m4 0h1m1 0h1m4 0h4m4 0h1m38 0h1m4 0h1m8 0h1m19 0h1M529 356h1m15 0h2m162 0h1m4 0h1m1 0h1m10 0h3m13 0h2m11 0h1m18 0h1m24 0h1M314 369h1m1 0h6m1 0h4m2 0h23m2 0h3m2 0h1m2 0h1m2 0h1m3 0h5m1 0h1m1 0h1m4 0h1m3 0h2m1 0h2m3 0h3m1 0h1m5 0h9m2 0h5m1 0h1m7 0h3m8 0h1m1 0h2m1 0h1m4 0h2m8 0h1m7 0h4m17 0h1m6 0h2m3 0h1m1 0h1m4 0h1m14 0h1M427 373h1m4 0h2m1 0h3m1 0h2m1 0h1m6 0h1m15 0h1m1 0h1m6 0h3m1 0h1m1 0h2m4 0h3m3 0h3m2 0h2m1 0h1m10 0h2m4 0h1m1 0h1M425 377h1m7 0h1m1 0h4m2 0h2m5 0h2m1 0h1m13 0h1m8 0h2m1 0h2m2 0h1m1 0h1m2 0h1m1 0h1m2 0h4m1 0h2m9 0h2m3 0h5m1 0h1m2 0h2M425 381h1m6 0h1m1 0h5m1 0h3m4 0h2m15 0h1m2 0h1m6 0h3m1 0h1m2 0h3m4 0h1m3 0h3m3 0h1m13 0h4m1 0h1m1 0h2m1 0h1M427 385h1m1 0h3m1 0h2m1 0h2m1 0h1m2 0h1m5 0h1m16 0h1m1 0h1m2 0h1m4 0h3m2 0h1m5 0h2m3 0h1m1 0h1m2 0h1m1 0h1m12 0h2m2 0h2m7 0h1M426 394h1m1 0h1m3 0h1m1 0h1m1 0h1m1 0h2m1 0h2m4 0h3m1 0h1m13 0h1m1 0h1m7 0h7m2 0h1m1 0h3m2 0h4m2 0h1m1 0h2m10 0h11m194 0h1m41 0h1m16 0h1M512 406h1m3 0h1m7 0h1M512 410h2m2 0h1m2 0h3m1 0h2M528 419h2m1 0h1m1 0h1m1 0h2m1 0h1m2 0h1m2 0h1m2 0h1m1 0h1m1 0h2m4 0h2m2 0h1m3 0h1m1 0h1m15 0h2m4 0h1m3 0h1m2 0h1m1 0h1m4 0h1m1 0h1m2 0h1m2 0h2m2 0h2m2 0h1m1 0h2m2 0h1m2 0h1m6 0h1m1 0h1m8 0h1m3 0h5m1 0h2m8 0h2m1 0h1m7 0h1m1 0h1m7 0h6m8 0h1m4 0h1m5 0h1m1 0h2m2 0h2m9 0h1m3 0h2m24 0h1m1 0h5m1 0h2m1 0h2m2 0h2m1 0h2m2 0h1m4 0h3m3 0h2m2 0h2m3 0h2m4 0h1m3 0h1M529 423h1m1 0h1m1 0h2m6 0h1m4 0h1m1 0h3m15 0h2m1 0h1m2 0h2m1 0h1m2 0h1m3 0h1m5 0h2m1 0h3m4 0h2m3 0h1m7 0h2m2 0h2m1 0h5m2 0h3m1 0h1m6 0h1m11 0h1m5 0h1m1 0h1m9 0h4m7 0h4m4 0h2m1 0h1m13 0h3m1 0h1m3 0h3m1 0h5m5 0h1m2 0h1m1 0h3m1 0h3m26 0h1m4 0h4m1 0h1m3 0h5m3 0h4m4 0h3m1 0h1m1 0h1m6 0h2m1 0h3M532 427h1m7 0h1m1 0h1m4 0h1m2 0h1m9 0h1m5 0h1m2 0h1m5 0h1m2 0h3m1 0h1m9 0h1m5 0h3m2 0h2m3 0h2m5 0h1m1 0h4m3 0h1m23 0h1m5 0h2m5 0h1m4 0h1m3 0h1m3 0h1m2 0h3m5 0h2m6 0h2m8 0h3m2 0h3m2 0h3m8 0h2m1 0h1m2 0h2m3 0h1m33 0h3m4 0h2m2 0h1m3 0h2m8 0h1m1 0h1m2 0h1m5 0h1m1 0h4M507 473h1m1 0h1m1 0h2m1 0h1m5 0h1M513 498h1"/><path stroke="#0062ff" stroke-width="5" d="M18 14.5h4m19 0h6m28 0h11m42 0h11m13 0h8m12 0h6m3 0h4m41 0h8m45 0h11m52 0h8m21 0h8m32 0h2m5 0h8m2 0h1m19 0h8M1 64.5h1m1 0h1m6 0h1m1 0h1m5 0h1m4 0h1m1 0h1m18 0h1m1 0h2m1 0h1m11 0h1m14 0h1m1 0h1m3 0h1m1 0h2m10 0h2m13 0h1m4 0h1m6 0h1m2 0h4m4 0h1m9 0h1m1 0h1m5 0h1m4 0h2m9 0h1m33 0h1m35 0h1m4 0h4m31 0h1m1 0h1m1 0h1m2 0h1m7 0h1m10 0h1m8 0h1m11 0h1m3 0h1m2 0h2m10 0h1m6 0h2m9 0h1m5 0h1m12 0h1m3 0h3m8 0h1m5 0h3m3 0h1m4 0h1m1 0h1m6 0h2m8 0h1m9 0h2m3 0h1m11 0h2m2 0h1m1 0h3m8 0h1m1 0h2M480 189.5h1m7 0h1m2 0h1m2 0h2M479 264.5h3m3 0h1m3 0h1m4 0h2m1 0h3m1 0h4m1 0h2m14 0h3m1 0h1m2 0h3m101 0h2m4 0h6m156 0h1m2 0h1m4 0h2m1 0h1M0 289.5h12m16 0h9m12 0h4m32 0h5m6 0h7m4 0h53m33 0h28m5 0h18m66 0h15m7 0h7m9 0h15m19 0h12m22 0h27m5 0h23m87 0h5m40 0h7m25 0h4m17 0h1m1 0h2m1 0h2m7 0h4m30 0h6m1 0h7m1 0h4m1 0h11m1 0h6m1 0h6m6 0h4m2 0h2m29 0h6m1 0h2M8 314.5h9m5 0h5m6 0h21m7 0h6m6 0h11m21 0h9m41 0h12m17 0h6m18 0h8m5 0h14m8 0h5m6 0h10m7 0h21m16 0h14m24 0h13m7 0h13m9 0h16m5 0h10m4 0h6m19 0h13m7 0h11m105 0h6m1 0h19m2 0h4m19 0h4m6 0h11m8 0h5m10 0h14m5 0h1m1 0h4m6 0h8m1 0h1m8 0h4m13 0h14m16 0h7M18 364.5h1m7 0h1m286 0h6m4 0h1m1 0h2m1 0h1m3 0h6m1 0h1m1 0h1m1 0h1m1 0h3m1 0h3m2 0h3m4 0h2m2 0h1m1 0h1m2 0h1m2 0h2m6 0h2m6 0h2m2 0h2m1 0h4m2 0h1m2 0h1m1 0h5m1 0h1m7 0h4m6 0h2m9 0h1m3 0h1m7 0h1m5 0h1m1 0h1m6 0h3m8 0h1m15 0h1m1 0h1m10 0h2M313 389.5h6m6 0h2m6 0h4m1 0h2m4 0h1m1 0h1m2 0h3m1 0h2m1 0h1m6 0h3m1 0h2m3 0h3m3 0h2m2 0h3m6 0h2m3 0h6m1 0h3m3 0h1m3 0h2m3 0h1m3 0h3m25 0h1m1 0h1m1 0h1m2 0h1m1 0h1m1 0h3m5 0h1m19 0h1m5 0h1m6 0h3m3 0h3M577 414.5h1m87 0h1m15 0h1m17 0h1m66 0h1"/><path stroke="#006cff" stroke-width="4" d="M26 23h10m23 0h7m60 0h6m4 0h3m26 0h1m26 0h8m58 0h4m15 0h4m99 0h6m14 0h8m45 0h5m311 0h1M6 69h1m9 0h1m17 0h2m3 0h2m2 0h1m6 0h1m3 0h1m3 0h2m10 0h5m11 0h1m1 0h1m2 0h3m4 0h1m2 0h1m2 0h1m4 0h1m8 0h2m11 0h3m4 0h2m2 0h1m19 0h1m9 0h2m9 0h1m4 0h1m4 0h1m2 0h1m1 0h1m1 0h2m13 0h2m3 0h1m3 0h2m5 0h1m3 0h1m5 0h1m12 0h1m11 0h1m1 0h1m3 0h1m1 0h1m1 0h1m10 0h1m2 0h1m8 0h2m1 0h1m3 0h1m10 0h1m6 0h1m16 0h2m11 0h1m1 0h1m8 0h2m6 0h1m8 0h1m7 0h3m2 0h1m9 0h2m22 0h1m4 0h3m3 0h1m15 0h2m3 0h2m8 0h4M0 77h2m7 0h3m1 0h1m3 0h2m5 0h1m1 0h1m10 0h2m7 0h1m1 0h2m3 0h1m13 0h1m9 0h3m2 0h1m1 0h2m8 0h1m10 0h1m8 0h2m6 0h3m1 0h4m17 0h2m5 0h2m7 0h2m37 0h5m3 0h1m7 0h2m1 0h1m1 0h1m4 0h1m1 0h1m2 0h2m1 0h3m3 0h5m11 0h1m14 0h1m4 0h1m6 0h1m7 0h5m5 0h2m6 0h2m1 0h1m3 0h1m10 0h1m3 0h1m4 0h1m5 0h1m6 0h2m4 0h1m1 0h4m5 0h1m1 0h1m1 0h1m5 0h1m2 0h1m3 0h2m12 0h1m2 0h2m10 0h2m6 0h2m1 0h1m4 0h2m10 0h1m1 0h1m3 0h1m10 0h2m3 0h3m9 0h1m2 0h1M9 94h1m1 0h3m5 0h1m9 0h1m2 0h2m7 0h1m1 0h1m13 0h1m11 0h1m5 0h1m11 0h1m8 0h1m1 0h1m4 0h1m4 0h1m12 0h1m11 0h1m3 0h1m1 0h1m1 0h1m5 0h3m17 0h1m2 0h2m5 0h2m3 0h1m1 0h1m16 0h2m32 0h1m4 0h1m6 0h1m30 0h1m18 0h2m10 0h5m2 0h1m1 0h1m6 0h1m1 0h1m8 0h1m2 0h1m45 0h1m2 0h1m14 0h2m3 0h2m4 0h1m2 0h1m16 0h2m2 0h1m3 0h2m4 0h1m3 0h1M13 119h1m11 0h1m15 0h3m4 0h1m8 0h1m2 0h1m1 0h3m2 0h3m1 0h1m1 0h1m3 0h3m2 0h1m4 0h1m7 0h4m1 0h1m1 0h1m6 0h1m3 0h2m4 0h2m9 0h2m3 0h1m12 0h1m4 0h1m2 0h3m7 0h4m5 0h3m21 0h1m1 0h2m2 0h1m1 0h1m4 0h1m4 0h2m8 0h2m4 0h1m1 0h1m4 0h1m2 0h1m1 0h2m8 0h1m9 0h4m8 0h2m1 0h1m3 0h1m1 0h2m8 0h3m10 0h3m1 0h2m1 0h4m1 0h2m3 0h3m3 0h1m4 0h3m1 0h1m1 0h2m9 0h1m30 0h2m1 0h1m7 0h5m1 0h1m1 0h1m1 0h2m1 0h1m1 0h1m2 0h1m2 0h1m1 0h1m6 0h1m1 0h3m4 0h1m7 0h1m4 0h1m1 0h1m5 0h2m9 0h2m2 0h1m1 0h3m3 0h1m26 0h15m7 0h12m8 0h13m54 0h8m16 0h8m19 0h18m17 0h17m79 0h9M595 123h7m8 0h7m130 0h6m39 0h5M0 148h1m8 0h3m2 0h1m3 0h2m5 0h1m2 0h1m4 0h1m6 0h1m2 0h1m3 0h1m10 0h1m4 0h1m3 0h3m1 0h1m4 0h2m5 0h2m2 0h1m1 0h1m5 0h1m1 0h1m4 0h1m1 0h1m3 0h1m4 0h2m5 0h1m12 0h1m14 0h2m3 0h1m2 0h1m10 0h2m2 0h1m4 0h2m4 0h1m10 0h1m3 0h1m4 0h2m17 0h1m13 0h1m10 0h1m4 0h1m14 0h1m3 0h1m7 0h1m17 0h2m15 0h1m1 0h1m6 0h1m1 0h4m8 0h2m1 0h1m4 0h1m40 0h2m1 0h1m8 0h1m3 0h1m2 0h1m4 0h3m6 0h2m5 0h1m4 0h1m3 0h1m1 0h1m5 0h1m1 0h1m6 0h2m3 0h1m17 0h2M398 231h8M0 281h16m17 0h15m9 0h7m72 0h8m67 0h9m104 0h13m11 0h5m36 0h8m41 0h9m46 0h1m19 0h2m1 0h1m2 0h1m39 0h4m54 0h6m38 0h3m25 0h8m101 0h3M554 344h1m1 0h1m6 0h3m1 0h2m2 0h2m2 0h2m1 0h2m2 0h2m8 0h6m2 0h8m4 0h3m3 0h1m2 0h2m2 0h4m5 0h1m2 0h3m1 0h4m18 0h1m1 0h4m2 0h1m2 0h1m3 0h1m1 0h2m1 0h1m1 0h3m5 0h1m3 0h1m2 0h1m1 0h2M530 356h1m10 0h2m164 0h1m2 0h1m4 0h1m1 0h2m6 0h1m10 0h1m14 0h1m5 0h2m1 0h1m4 0h3m8 0h1m6 0h1m2 0h1m3 0h1m8 0h1m1 0h3M20 360h6m1 0h3m4 0h3m573 0h2m33 0h3M322 369h1m34 0h2m5 0h1m11 0h1m11 0h1m31 0h1m6 0h1m4 0h3m4 0h1m1 0h1m5 0h1m19 0h1m6 0h5m3 0h1m11 0h1m3 0h1m1 0h1m11 0h1m1 0h1m1 0h1m3 0h1m3 0h1m219 0h1m22 0h1m8 0h2M425 373h1m12 0h1m8 0h2m2 0h1m12 0h1m12 0h1m4 0h4m5 0h1m15 0h1m5 0h4m1 0h1m1 0h3m220 0h2m22 0h1m9 0h1M427 377h1m19 0h1m16 0h1m17 0h1m4 0h1m12 0h1m4 0h2m10 0h1m1 0h2m222 0h1m33 0h1M427 381h1m21 0h1m23 0h1m3 0h1m6 0h4m3 0h1m8 0h1m4 0h3m8 0h1m1 0h1m2 0h1m221 0h1m12 0h1m19 0h1m24 0h1M432 385h1m2 0h1m4 0h2m5 0h1m1 0h1m1 0h1m12 0h1m13 0h1m2 0h3m1 0h1m2 0h1m3 0h1m1 0h1m2 0h1m2 0h1m4 0h1m1 0h1m5 0h2m2 0h6m187 0h1m5 0h1m8 0h1m49 0h1m14 0h1m8 0h1M425 394h1m1 0h1m36 0h1m17 0h2m1 0h1m19 0h3m14 0h1m4 0h1m1 0h2m15 0h1m162 0h1m4 0h1m28 0h2m11 0h2m9 0h1m8 0h2m12 0h1m8 0h1m1 0h3M505 406h1m4 0h2m5 0h3m1 0h1m1 0h1M505 410h3m1 0h2m7 0h1m3 0h1m3 0h1M534 419h1m5 0h1m1 0h1m3 0h1m1 0h1m1 0h1m5 0h1m2 0h2m5 0h1m2 0h1m3 0h1m1 0h1m2 0h5m5 0h1m3 0h1m6 0h2m3 0h1m4 0h1m7 0h2m1 0h1m3 0h1m2 0h1m20 0h2m5 0h1m3 0h3m6 0h1m2 0h1m2 0h1m3 0h1m1 0h1m4 0h2m6 0h2m7 0h2m1 0h1m4 0h2m1 0h1m3 0h1m3 0h1m2 0h2m1 0h2m1 0h2m3 0h1m33 0h1m9 0h2m3 0h2m3 0h1m4 0h2m9 0h2m2 0h2m1 0h1M532 423h1m7 0h1m1 0h1m4 0h1m31 0h3m18 0h1m3 0h2m2 0h1m8 0h1m6 0h1m24 0h1m5 0h1m5 0h1m8 0h2m2 0h1m18 0h2m10 0h1m2 0h2m3 0h1m7 0h1m3 0h1m39 0h1m33 0h1m7 0h1M304 435h8m88 0h9M516 460h2M517 469h1M505 473h2m3 0h1m2 0h1m1 0h1m2 0h2m1 0h3m1 0h2M512 498h1m4 0h1m3 0h2"/><path stroke="#006cff" stroke-width="5" d="M13 39.5h3m3 0h2m32 0h1m6 0h3m4 0h1m11 0h1m3 0h1m13 0h1m13 0h1m15 0h1m16 0h2m11 0h1m49 0h2m14 0h1m2 0h2m10 0h1m3 0h1m8 0h2m27 0h2m1 0h1m11 0h1m15 0h1m1 0h1m11 0h1m6 0h2m14 0h3m1 0h1m5 0h1m22 0h1m5 0h1m14 0h1m10 0h1m1 0h1m8 0h1m7 0h1m10 0h2m9 0h1m4 0h1m16 0h2m1 0h1m14 0h2M0 64.5h1m8 0h1m1 0h1m14 0h1m1 0h1m9 0h1m6 0h1m31 0h1m1 0h2m2 0h1m7 0h1m2 0h1m27 0h1m1 0h1m5 0h1m22 0h1m9 0h1m5 0h1m9 0h1m23 0h4m2 0h2m12 0h1m6 0h1m28 0h1m9 0h1m1 0h1m14 0h1m7 0h1m2 0h1m5 0h1m1 0h1m5 0h2m1 0h1m3 0h1m2 0h2m8 0h1m6 0h1m8 0h1m9 0h1m9 0h1m2 0h1m1 0h1m2 0h2m1 0h2m19 0h1m1 0h1m23 0h1m5 0h1m9 0h1m3 0h2m5 0h1m22 0h1m1 0h1M482 189.5h1m4 0h1m2 0h1m2 0h1M482 264.5h1m4 0h2m11 0h1m8 0h1m1 0h1m13 0h1m1 0h1m103 0h2m170 0h1m1 0h1m5 0h1M6 364.5h1m32 0h1m279 0h4m1 0h1m5 0h2m6 0h1m1 0h1m1 0h1m1 0h1m3 0h1m8 0h3m4 0h1m4 0h1m1 0h2m3 0h2m8 0h3m6 0h1m10 0h1m5 0h1m2 0h6m12 0h1m1 0h3m2 0h2m1 0h2m4 0h1m15 0h1m1 0h1m6 0h1m1 0h1m16 0h1m3 0h1m13 0h2m10 0h1M319 389.5h6m5 0h3m4 0h1m2 0h4m1 0h1m1 0h2m6 0h1m1 0h3m2 0h1m6 0h3m4 0h2m3 0h1m5 0h1m1 0h2m3 0h2m10 0h3m1 0h3m2 0h3m1 0h3m7 0h3m2 0h1m7 0h4m12 0h1m6 0h1m2 0h1m1 0h3m3 0h1m20 0h1m3 0h1m21 0h2m265 0h1M533 414.5h1m1 0h1m1 0h1m1 0h1m5 0h1m18 0h1m21 0h1m7 0h1m6 0h1m12 0h1m8 0h1m49 0h1m8 0h2m5 0h1m7 0h1m85 0h1m6 0h1m9 0h1m1 0h2M517 439.5h1"/><path stroke="#0076ff" stroke-width="4" d="M410 23h1m85 0h1m234 0h2M7 44h1m8 0h1m12 0h2m2 0h4m2 0h1m2 0h2m6 0h2m2 0h2m2 0h2m13 0h2m13 0h1m9 0h4m4 0h1m2 0h1m8 0h2m11 0h2m5 0h2m1 0h3m7 0h1m10 0h1m3 0h2m4 0h2m1 0h1m5 0h2m2 0h2m5 0h2m1 0h7m15 0h1m2 0h1m4 0h1m5 0h1m3 0h1m4 0h2m18 0h3m3 0h3m5 0h3m10 0h2m1 0h2m8 0h1m1 0h1m7 0h1m4 0h1m1 0h1m6 0h1m9 0h3m3 0h3m3 0h1m7 0h3m8 0h1m7 0h1m8 0h3m3 0h1m1 0h2m13 0h2m4 0h1m7 0h3m6 0h2m3 0h3m1 0h1m1 0h2m12 0h1m3 0h1m10 0h1m1 0h5m8 0h3m3 0h3m1 0h3m10 0h19m1 0h5m8 0h29m14 0h23m2 0h1m13 0h12m11 0h9m27 0h13m31 0h7m10 0h6m7 0h14m9 0h10m5 0h21M59 48h1m106 0h1m30 0h2m68 0h1m23 0h1m114 0h1m13 0h2m17 0h1m31 0h3M29 69h1m12 0h1m8 0h1m3 0h1m43 0h1m50 0h1m15 0h2m6 0h1m10 0h2m10 0h1m1 0h1m60 0h2m5 0h1m23 0h1m42 0h2m83 0h3m11 0h1m5 0h1m13 0h1m16 0h1M4 77h3m1 0h1m16 0h1m1 0h3m4 0h1m10 0h1m1 0h1m8 0h2m5 0h3m2 0h3m4 0h2m12 0h4m10 0h1m4 0h1m1 0h1m6 0h1m2 0h1m9 0h1m4 0h4m1 0h2m4 0h1m2 0h1m2 0h2m6 0h2m6 0h2m1 0h1m3 0h1m1 0h5m1 0h1m3 0h2m1 0h2m1 0h1m15 0h1m1 0h2m1 0h2m4 0h1m8 0h1m2 0h1m23 0h2m1 0h1m3 0h4m2 0h2m5 0h2m1 0h1m4 0h1m1 0h1m1 0h1m3 0h1m5 0h1m6 0h1m1 0h4m5 0h2m1 0h5m2 0h2m9 0h1m1 0h1m7 0h1m5 0h1m1 0h1m8 0h1m1 0h1m2 0h1m1 0h1m3 0h3m1 0h2m8 0h1m4 0h5m1 0h2m7 0h1m1 0h2m4 0h2m9 0h1m7 0h1m1 0h1m2 0h1m3 0h3m1 0h4m2 0h1m11 0h1m7 0h1m1 0h1M8 94h1m5 0h1m3 0h1m1 0h1m2 0h1m1 0h1m14 0h1m8 0h1m6 0h1m1 0h1m6 0h1m2 0h1m7 0h2m4 0h2m17 0h1m2 0h2m1 0h1m28 0h1m3 0h1m1 0h1m12 0h3m2 0h1m22 0h1m1 0h2m6 0h1m2 0h1m6 0h1m6 0h1m23 0h1m1 0h1m1 0h1m9 0h1m1 0h3m1 0h3m12 0h2m19 0h1m1 0h1m11 0h4m7 0h1m6 0h1m5 0h2m13 0h3m17 0h1m10 0h1m2 0h1m6 0h1m5 0h1m5 0h1m14 0h2m2 0h1m2 0h1m4 0h1m8 0h1m3 0h1m7 0h1m6 0h1m1 0h1M480 123h12m1 0h3m3 0h26m1 0h69m7 0h3m2 0h3m7 0h17m2 0h27m3 0h52m1 0h12m3 0h13m6 0h16m2 0h16m2 0h3m5 0h16M8 148h1m3 0h2m9 0h1m2 0h2m1 0h1m2 0h1m2 0h2m13 0h2m1 0h1m3 0h1m8 0h1m8 0h1m6 0h1m5 0h1m5 0h1m1 0h1m4 0h1m1 0h1m1 0h1m21 0h1m1 0h2m1 0h1m5 0h1m1 0h1m3 0h1m1 0h2m7 0h1m1 0h1m1 0h2m17 0h1m5 0h1m2 0h1m8 0h1m11 0h1m25 0h1m1 0h1m3 0h1m6 0h1m4 0h7m10 0h1m11 0h1m6 0h1m1 0h2m1 0h1m15 0h2m1 0h1m4 0h1m11 0h2m7 0h1m3 0h2m6 0h1m7 0h2m3 0h1m12 0h1m7 0h1m5 0h1m12 0h1m1 0h1m6 0h1m1 0h1m1 0h2m3 0h1m1 0h1m15 0h1m3 0h1m22 0h1M28 202h17m4 0h15m8 0h18m7 0h6m9 0h9m10 0h18m22 0h14m8 0h22m21 0h4m7 0h12m18 0h7m17 0h20m12 0h9m7 0h35m26 0h1m1 0h14m43 0h10m19 0h1m19 0h6m5 0h1m1 0h7m1 0h2m1 0h4m1 0h3m4 0h2m1 0h3m2 0h6m10 0h4m4 0h3m2 0h10m9 0h1m2 0h5m30 0h14m8 0h8m8 0h10m6 0h4m28 0h5m10 0h18m4 0h20M619 344h1M526 356h2m5 0h3m1 0h1m1 0h1m3 0h1m162 0h1m12 0h2m3 0h1m1 0h1m4 0h1m6 0h1m10 0h2m4 0h1m3 0h1m3 0h2m3 0h1m12 0h2m1 0h2m3 0h1m1 0h1m2 0h5m5 0h1m3 0h5M3 360h3m1 0h7m1 0h3m1 0h1m10 0h4m6 0h6m8 0h2m13 0h2m5 0h3m1 0h2m5 0h3m9 0h1m2 0h1m1 0h3m9 0h2m1 0h2m4 0h1m5 0h1m1 0h1m5 0h2m4 0h1m9 0h5m1 0h1m2 0h1m2 0h2m11 0h2m5 0h3m1 0h2m4 0h4m1 0h1m13 0h1m2 0h7m11 0h2m2 0h1m7 0h3m3 0h5m1 0h2m2 0h4m8 0h2m7 0h2m2 0h1m1 0h2m2 0h3m1 0h2m2 0h1m4 0h1m276 0h6m23 0h3m30 0h13M435 369h4m9 0h2m31 0h1m1 0h4m1 0h1m2 0h3m11 0h1m5 0h1m1 0h1m1 0h1m1 0h2m3 0h1m276 0h2M505 373h2m203 0h1m4 0h1m40 0h3m17 0h1m22 0h1M484 377h2m228 0h1m11 0h2m16 0h1m11 0h1m10 0h1m7 0h1m24 0h1m1 0h1M527 381h1m2 0h1m14 0h2m163 0h1m33 0h1m12 0h1m17 0h1m1 0h1m7 0h1m5 0h1m6 0h1m1 0h1m1 0h1M425 385h1m12 0h1m45 0h1m21 0h1m22 0h1m11 0h2m3 0h1m168 0h1m11 0h1m28 0h1m1 0h1m17 0h2m6 0h1m13 0h1M535 394h1m1 0h1m3 0h2m167 0h1m4 0h1m3 0h2m3 0h7m18 0h3m12 0h3m14 0h1m18 0h1m7 0h3M506 406h2m1 0h1m3 0h3m4 0h1m1 0h1m2 0h1M515 410h1m9 0h1M532 419h1m137 0h1m33 0h1m3 0h2m62 0h1m3 0h1m22 0h1m8 0h1M516 448h1M516 452h1M513 456h1m2 0h2M511 460h4M511 498h1m2 0h3m1 0h3M0 519h7m7 0h6m37 0h13m25 0h5m8 0h16m10 0h10m10 0h68m15 0h14m4 0h5m6 0h9m30 0h8m4 0h7m7 0h15m13 0h6m15 0h53m25 0h8m39 0h4m1 0h1m21 0h4m1 0h2m5 0h15m1 0h17m5 0h5m30 0h3m1 0h27m1 0h4m19 0h5m7 0h15m25 0h10m10 0h17m20 0h1m1 0h3m1 0h1m17 0h8M9 523h10m10 0h4m26 0h12m56 0h14m22 0h9m10 0h7m80 0h4m29 0h9m13 0h5m44 0h4m19 0h8m49 0h13m65 0h5m1 0h4m22 0h9m24 0h10m10 0h4m1 0h5m5 0h10m16 0h10m9 0h4m96 0h3m5 0h2m1 0h3m2 0h1M9 527h9m26 0h4m10 0h9m18 0h10m24 0h5m76 0h15m45 0h9m16 0h4m9 0h7m10 0h16m54 0h10m70 0h9m36 0h1m24 0h1m1 0h3m69 0h1m23 0h10m18 0h5m25 0h9m22 0h10m12 0h19m15 0h14m1 0h3m16 0h1M35 531h8m5 0h5m17 0h7m8 0h9m46 0h13m81 0h8m7 0h9m49 0h4m32 0h9m10 0h10m14 0h18m4 0h4m116 0h4m86 0h5m73 0h4m1 0h3m18 0h9m77 0h5M6 535h8m63 0h9m26 0h5m36 0h10m102 0h9m23 0h9m19 0h6m14 0h5m22 0h6m28 0h15m48 0h7m19 0h6m44 0h6m37 0h5m22 0h8m1 0h1m14 0h5m56 0h1m3 0h6m24 0h10m28 0h2m1 0h2m17 0h10M14 544h5m8 0h22m24 0h9m9 0h5m34 0h10m15 0h20m12 0h8m6 0h14m7 0h9m46 0h5m14 0h4m7 0h8m19 0h7m65 0h8m12 0h4m12 0h4m17 0h12m13 0h5m8 0h3m1 0h1m17 0h6m8 0h12m19 0h19m31 0h2m1 0h2m1 0h3m61 0h8m38 0h4m43 0h10M19 548h9m14 0h9m22 0h20m87 0h25m5 0h5m32 0h9m46 0h10m73 0h7m137 0h4m18 0h7m37 0h4m5 0h5m1 0h4m23 0h11m1 0h3m33 0h7m6 0h2m1 0h23m16 0h10m21 0h3m2 0h3M29 552h6m13 0h16m6 0h4m8 0h21m13 0h9m36 0h34m37 0h23m21 0h5m80 0h8m7 0h6m46 0h7m44 0h10m21 0h1m133 0h7m10 0h8m20 0h12m16 0h6m31 0h10m33 0h5"/><path stroke="#0076ff" stroke-width="5" d="M4 64.5h1m3 0h1m8 0h1m38 0h2m5 0h1m1 0h1m23 0h1m2 0h1m7 0h1m2 0h3m1 0h1m9 0h1m2 0h1m14 0h2m3 0h1m2 0h1m3 0h3m4 0h2m3 0h2m3 0h1m6 0h1m4 0h3m1 0h1m2 0h1m3 0h5m2 0h1m16 0h2m2 0h4m10 0h1m3 0h1m15 0h1m7 0h1m7 0h1m4 0h1m2 0h1m5 0h1m4 0h1m4 0h1m2 0h1m3 0h1m1 0h1m7 0h1m2 0h2m8 0h2m2 0h1m2 0h1m1 0h1m24 0h1m5 0h3m2 0h1m4 0h1m1 0h1m2 0h1m5 0h1m8 0h1m4 0h1m2 0h1m14 0h1m3 0h1m19 0h1m1 0h1m9 0h2m1 0h1M591 139.5h1m158 0h1m4 0h1m50 0h1M481 189.5h1m7 0h1m2 0h1M425 364.5h1m1 0h1m6 0h1m3 0h1m9 0h1m2 0h1m23 0h1m12 0h1m17 0h1m9 0h1m1 0h3m237 0h1M386 389.5h1m1 0h1m44 0h1m1 0h1m1 0h1m1 0h1m1 0h1m4 0h1m2 0h1m25 0h1m17 0h1m2 0h1m1 0h1m12 0h2m8 0h1m188 0h1m5 0h1m8 0h1m2 0h1m14 0h1m14 0h1m41 0h2M538 414.5h1m18 0h2m4 0h1m6 0h1m3 0h1m1 0h1m10 0h1m2 0h2m3 0h1m1 0h1m4 0h1m3 0h1m15 0h1m14 0h1m5 0h2m5 0h1m6 0h1m6 0h1m10 0h1m11 0h2m1 0h1m4 0h2m4 0h1m5 0h1m12 0h1m5 0h1m6 0h1m27 0h1m2 0h1m22 0h2m2 0h1m5 0h1m6 0h1M19 539.5h22m49 0h7m53 0h8m6 0h17m23 0h8m82 0h8m28 0h10m16 0h18m26 0h6m21 0h9m14 0h5m19 0h9m10 0h4m8 0h4m1 0h1m27 0h7m9 0h5m12 0h8m14 0h5m14 0h5m33 0h8m5 0h9m26 0h2m1 0h14m14 0h6m16 0h15m42 0h5"/><path stroke="#0080ff" stroke-width="4" d="M605 23h1m164 0h1M500 44h6m25 0h8m29 0h14m26 0h13m12 0h1m2 0h7m10 0h10m3 0h14m13 0h25m1 0h5m11 0h6m6 0h7m14 0h1m3 0h5m13 0h2M7 77h1m13 0h1m9 0h1m1 0h1m1 0h2m3 0h1m1 0h1m11 0h2m2 0h2m11 0h4m11 0h2m5 0h1m4 0h1m1 0h3m1 0h1m1 0h2m1 0h1m8 0h1m13 0h1m6 0h1m2 0h2m6 0h2m7 0h1m2 0h1m7 0h1m1 0h1m1 0h1m1 0h1m5 0h1m1 0h1m4 0h1m2 0h1m1 0h2m4 0h2m11 0h1m2 0h2m6 0h2m9 0h1m4 0h2m6 0h3m2 0h2m7 0h1m8 0h2m1 0h2m11 0h1m1 0h3m7 0h2m1 0h1m3 0h1m8 0h1m12 0h1m5 0h3m3 0h3m2 0h2m7 0h1m1 0h1m6 0h1m1 0h1m7 0h2m7 0h3m3 0h1m1 0h4m12 0h1m9 0h1m2 0h1m9 0h1m3 0h3m1 0h1m15 0h1m2 0h2m3 0h1m6 0h1m4 0h2M0 94h1m3 0h1m5 0h1m5 0h1m4 0h2m1 0h1m2 0h2m5 0h1m1 0h1m7 0h3m3 0h2m1 0h3m3 0h1m6 0h1m17 0h1m4 0h4m9 0h1m3 0h1m3 0h3m11 0h1m2 0h2m3 0h1m5 0h1m11 0h3m20 0h1m5 0h1m12 0h1m1 0h1m24 0h1m10 0h2m21 0h1m3 0h3m12 0h2m7 0h1m7 0h1m1 0h1m1 0h1m14 0h1m14 0h2m5 0h1m4 0h1m4 0h1m8 0h2m6 0h2m5 0h1m4 0h2m1 0h2m2 0h1m15 0h1m20 0h1m2 0h1m5 0h1m1 0h1m6 0h1m1 0h1m5 0h2m13 0h1m5 0h1M2 119h6m7 0h3m5 0h2m2 0h1m3 0h1m3 0h1m1 0h2m5 0h1m4 0h1m1 0h2m1 0h1m1 0h1m8 0h2m18 0h2m3 0h2m14 0h1m3 0h2m4 0h3m3 0h5m1 0h1m11 0h1m2 0h3m4 0h2m2 0h1m6 0h3m10 0h1m4 0h3m5 0h4m9 0h1m7 0h3m3 0h2m7 0h2m6 0h1m6 0h1m9 0h3m5 0h4m2 0h3m6 0h1m1 0h4m6 0h1m6 0h1m3 0h1m5 0h1m1 0h2m1 0h2m1 0h1m14 0h1m5 0h2m4 0h1m11 0h1m5 0h1m3 0h1m1 0h4m4 0h1m1 0h1m1 0h2m2 0h1m3 0h1m1 0h1m5 0h1m1 0h1m1 0h2m1 0h2m16 0h2m2 0h1m3 0h2m9 0h1m1 0h1m4 0h1m1 0h2m3 0h3m5 0h3m3 0h1m2 0h4m10 0h1M4 148h1m2 0h1m12 0h3m1 0h1m5 0h1m3 0h1m9 0h3m5 0h1m2 0h2m2 0h1m5 0h1m19 0h2m3 0h3m13 0h2m2 0h1m1 0h1m5 0h1m3 0h4m2 0h1m7 0h2m1 0h1m1 0h3m6 0h1m1 0h1m1 0h1m18 0h1m9 0h1m1 0h2m2 0h1m2 0h1m1 0h2m4 0h1m8 0h1m3 0h2m1 0h1m2 0h2m2 0h1m7 0h1m6 0h1m11 0h1m8 0h1m1 0h1m9 0h3m8 0h2m8 0h1m7 0h1m4 0h4m25 0h1m5 0h1m4 0h2m2 0h1m3 0h1m3 0h1m2 0h1m3 0h1m2 0h1m1 0h1m1 0h4m2 0h1m11 0h1m1 0h2m20 0h1m6 0h1m1 0h1m1 0h1m6 0h2m2 0h1m2 0h1m1 0h1m5 0h1m6 0h3m3 0h3m2 0h1m11 0h1M569 210h1M500 219h2m6 0h1m1 0h1M528 260h1m1 0h1m99 0h1m179 0h1M192 281h4m79 0h6m81 0h7m94 0h8m41 0h1m38 0h1m1 0h1m1 0h1m2 0h1m105 0h4m36 0h12m9 0h10m1 0h10M657 294h1m52 0h1M682 298h1m77 0h1M682 302h1m77 0h1M676 306h1m5 0h1m10 0h1m85 0h1M531 356h2m3 0h1m3 0h1m3 0h1m160 0h1m2 0h1m2 0h3m7 0h1m1 0h1m6 0h1m1 0h1m4 0h1m3 0h2m4 0h1m4 0h3m17 0h2m4 0h1m8 0h1m5 0h1m11 0h1m1 0h1M425 369h1m38 0h1m22 0h1m18 0h2m11 0h1m1 0h1m5 0h1m1 0h1m179 0h1m4 0h2m11 0h1m29 0h2m31 0h1m7 0h1m2 0h1M790 373h1m11 0h1M529 377h1m179 0h2m14 0h1m2 0h2m21 0h1m33 0h1m4 0h1m12 0h1M534 381h2m170 0h1m2 0h1m4 0h1m3 0h2m4 0h3m1 0h2m6 0h1m21 0h2m6 0h2m15 0h2m1 0h1m3 0h1m8 0h1m3 0h1m6 0h1M527 385h1m178 0h1m7 0h1m2 0h3m4 0h1m1 0h1m2 0h1m13 0h2m5 0h2m5 0h1m5 0h2m1 0h2m15 0h1m2 0h1m13 0h4M532 394h3m1 0h1m2 0h2m3 0h2m160 0h1m10 0h2m12 0h2m3 0h1m5 0h1m16 0h2m2 0h1m18 0h5m4 0h1m3 0h1m2 0h1m12 0h2M526 406h1M508 410h1M54 435h4m217 0h5m116 0h4M511 444h1M517 448h1M512 452h1M507 456h1m3 0h1m2 0h1m5 0h2M509 460h1M512 469h1M508 473h1M512 494h2m7 0h2M545 523h1M648 527h1m143 0h1M536 531h1m245 0h1M603 535h1m170 0h1m7 0h1m9 0h1M603 544h1m171 0h1M738 548h1"/><path stroke="#0080ff" stroke-width="5" d="M36 39.5h1m6 0h1m7 0h1m2 0h1m3 0h1m39 0h2m19 0h1m13 0h1m28 0h1m3 0h2m6 0h1m22 0h4m40 0h1m19 0h1m5 0h2m7 0h1m58 0h1m4 0h1m41 0h1m1 0h1m20 0h2m12 0h3m11 0h2m4 0h1m13 0h1m14 0h2m1 0h2m183 0h5M21 64.5h1m5 0h1m2 0h4m6 0h1m23 0h1m3 0h3m19 0h1m2 0h1m12 0h1m1 0h1m1 0h1m7 0h1m14 0h1m3 0h1m1 0h1m1 0h1m9 0h1m9 0h2m7 0h1m4 0h1m16 0h1m20 0h1m5 0h2m4 0h1m8 0h1m13 0h1m1 0h1m2 0h1m2 0h1m5 0h3m1 0h1m5 0h1m1 0h2m1 0h1m9 0h1m11 0h2m1 0h1m4 0h2m8 0h1m9 0h1m8 0h2m1 0h1m2 0h1m3 0h1m7 0h2m7 0h1m13 0h1m10 0h1m4 0h1m1 0h1m2 0h1m1 0h1m8 0h1m1 0h1m5 0h2m10 0h1m3 0h1m3 0h1m12 0h1m5 0h2m10 0h1M598 139.5h1m101 0h1M682 289.5h1M439 364.5h1m7 0h1m29 0h2m3 0h6m3 0h2m1 0h1m5 0h1m4 0h1m8 0h2m1 0h1m3 0h2m6 0h1m11 0h1m168 0h1m4 0h1m9 0h2m2 0h1m45 0h3M425 389.5h1m1 0h1m4 0h1m3 0h1m3 0h1m6 0h2m2 0h1m15 0h1m6 0h1m2 0h1m2 0h1m3 0h1m1 0h1m1 0h1m3 0h1m1 0h1m5 0h1m12 0h1m1 0h2m1 0h3m8 0h2m10 0h1m3 0h1m163 0h1m5 0h1m10 0h1m29 0h1m18 0h3m8 0h1m12 0h1M536 414.5h1m6 0h1m7 0h1m9 0h2m2 0h1m2 0h1m2 0h1m24 0h1m15 0h2m13 0h1m1 0h1m6 0h1m1 0h1m8 0h1m4 0h2m2 0h1m1 0h1m1 0h1m15 0h1m7 0h1m6 0h1m8 0h1m15 0h1m1 0h2m2 0h1m5 0h1m31 0h1m7 0h1m12 0h2m3 0h1m8 0h1m2 0h1m2 0h1m9 0h1M511 439.5h1m2 0h1M516 464.5h1"/><path stroke="#008aff" stroke-width="4" d="M16 77h1m13 0h1m1 0h1m6 0h1m1 0h1m1 0h1m6 0h2m36 0h1m10 0h1m19 0h1m11 0h1m1 0h1m32 0h2m5 0h1m11 0h2m9 0h4m31 0h1m28 0h2m5 0h2m32 0h1m22 0h1m80 0h1m14 0h1m18 0h2m21 0h1m6 0h4M1 94h1m4 0h1m8 0h1m19 0h1m1 0h3m12 0h1m32 0h1m2 0h1m33 0h1m6 0h1m13 0h4m16 0h1m10 0h1m6 0h1m5 0h1m1 0h2m4 0h1m12 0h2m4 0h3m3 0h1m4 0h1m3 0h1m7 0h1m11 0h1m10 0h2m2 0h1m6 0h1m3 0h1m6 0h2m4 0h1m11 0h1m2 0h1m42 0h3m2 0h1m1 0h1m5 0h3m6 0h1m6 0h1m2 0h1m10 0h1m1 0h1m1 0h1m1 0h1m24 0h2m23 0h2m8 0h1m3 0h1m2 0h1m2 0h2M1 119h1m28 0h1m8 0h1m40 0h2m11 0h1m119 0h1m2 0h1m8 0h1m13 0h1m4 0h1m56 0h1m32 0h1m11 0h1m4 0h2m3 0h1m21 0h1m1 0h1m56 0h1m39 0h2M622 131h1m34 0h1m131 0h1M72 144h1m6 0h1m285 0h1M1 148h2m2 0h2m8 0h3m13 0h1m5 0h2m10 0h1m4 0h1m25 0h1m12 0h1m17 0h1m14 0h1m18 0h1m5 0h1m9 0h3m10 0h1m4 0h3m6 0h1m1 0h1m19 0h1m4 0h1m8 0h2m3 0h2m6 0h1m1 0h1m4 0h1m3 0h2m10 0h1m1 0h3m9 0h3m12 0h1m4 0h1m6 0h4m30 0h1m11 0h2m3 0h1m3 0h1m4 0h2m5 0h1m1 0h1m4 0h1m2 0h1m1 0h2m5 0h1m5 0h2m38 0h1m7 0h1m3 0h1m1 0h1m14 0h1m2 0h1m11 0h2M541 202h1m41 0h1M561 206h1m7 0h1m1 0h1m13 0h1M541 210h1m4 0h1M499 219h1m3 0h1m5 0h1M486 260h1m18 0h1m1 0h1m123 0h1m7 0h1M688 294h1M535 298h1m87 0h1m63 0h1M588 302h1m37 0h1m68 0h1m46 0h1m8 0h1M688 306h1m10 0h1m1 0h1M538 356h1m8 0h1m174 0h1m10 0h1m5 0h2m4 0h2m1 0h1m12 0h2m8 0h1m2 0h1m4 0h2m11 0h1m13 0h1M59 360h1m3 0h1m4 0h1m38 0h1m20 0h1m12 0h1m7 0h1m10 0h1m16 0h1m5 0h1m19 0h1m4 0h1m19 0h1m15 0h1m35 0h1m32 0h1m1 0h2m11 0h2m23 0h1m1 0h1m5 0h2m12 0h1m3 0h1m2 0h1m10 0h1m3 0h7m1 0h1m7 0h2m8 0h2m31 0h1M530 369h1m4 0h1m5 0h1m176 0h1m7 0h1m16 0h1m12 0h1m3 0h1m14 0h1m10 0h1m15 0h1m5 0h2M546 373h1m162 0h1m6 0h1m9 0h1m1 0h2m45 0h1M473 377h1m59 0h1m1 0h1m170 0h1m9 0h3m1 0h1m36 0h2m6 0h2m9 0h1m14 0h1m7 0h1m1 0h1m6 0h1M428 381h1m37 0h1m59 0h1m2 0h1m3 0h1m3 0h1m1 0h1m1 0h2m172 0h3m2 0h1m6 0h1m2 0h1m20 0h1m1 0h1m6 0h1m2 0h1m18 0h1m14 0h1m6 0h1m4 0h1m2 0h1M473 385h1m56 0h1m2 0h2m10 0h1m163 0h1m18 0h1m1 0h1m1 0h1m26 0h2m4 0h1m16 0h1m2 0h1m5 0h1m2 0h1m1 0h1m7 0h1m3 0h3m1 0h1M526 394h1m4 0h1m6 0h1m4 0h1m161 0h1m1 0h2m2 0h1m1 0h1m19 0h1m4 0h4m5 0h2m4 0h3m12 0h1m2 0h1m7 0h1m9 0h1m2 0h3m1 0h2m6 0h1M520 444h1M507 452h1m3 0h1m1 0h1m3 0h1m2 0h2M506 456h1m5 0h1m6 0h1M506 460h2m10 0h5M510 469h2m2 0h1m1 0h1m2 0h3M514 494h4m1 0h1M609 523h1M545 531h1m63 0h1m176 0h1M648 535h1M559 544h1m140 0h1"/><path stroke="#008aff" stroke-width="5" d="M5 64.5h3m27 0h1m3 0h1m3 0h1m27 0h3m12 0h1m1 0h1m10 0h1m1 0h2m28 0h2m5 0h1m3 0h1m7 0h1m15 0h1m5 0h1m8 0h2m1 0h1m8 0h1m3 0h1m1 0h1m14 0h1m9 0h1m7 0h1m8 0h1m25 0h1m8 0h1m11 0h1m1 0h2m23 0h2m18 0h1m4 0h2m3 0h1m10 0h1m26 0h2m5 0h1m37 0h1m26 0h1m5 0h1m7 0h1m1 0h3M241 89.5h1m124 0h1m16 0h1M600 139.5h1m111 0h1m17 0h1M645 289.5h1m49 0h1m3 0h1m10 0h1M1 364.5h1m462 0h1m16 0h1m25 0h1m5 0h1m20 0h2m180 0h1m27 0h1m12 0h1m8 0h1m17 0h1m13 0h2M438 389.5h1m25 0h1m13 0h1m2 0h3m1 0h1m1 0h1m3 0h1m15 0h1m6 0h1m2 0h1m4 0h1m10 0h1m8 0h1m3 0h1m167 0h1m5 0h1m6 0h1m1 0h1m14 0h1m18 0h2m2 0h1m23 0h1m6 0h1m4 0h1m6 0h3M528 414.5h4m2 0h1m9 0h1m3 0h1m3 0h1m3 0h1m3 0h1m12 0h1m10 0h2m2 0h1m18 0h1m2 0h1m10 0h1m3 0h1m9 0h1m9 0h2m12 0h1m12 0h1m4 0h1m20 0h1m3 0h2m2 0h1m5 0h1m4 0h1m5 0h1m5 0h1m2 0h1m26 0h1m2 0h2m10 0h2m1 0h1m14 0h1m16 0h2m1 0h1M516 439.5h1m3 0h1M507 464.5h1m4 0h3m2 0h1m1 0h1m1 0h2M512 489.5h2M775 539.5h1"/><path stroke="#0094ff" stroke-width="4" d="M427 23h1m70 0h1m164 0h1m70 0h1m52 0h1M421 77h1M2 94h1m2 0h1m1 0h1m9 0h1m12 0h2m48 0h2m11 0h1m22 0h1m1 0h1m4 0h1m1 0h1m28 0h1m6 0h2m17 0h1m7 0h1m11 0h1m12 0h1m9 0h2m14 0h1m4 0h1m17 0h2m10 0h1m1 0h1m17 0h1m6 0h1m32 0h1m17 0h1m9 0h1m4 0h1m3 0h1m7 0h1m1 0h1m5 0h1m6 0h1m46 0h1m5 0h1m13 0h1m1 0h2m11 0h3M770 119h1M591 131h1m6 0h1m24 0h1m183 0h1M41 144h3m16 0h1m12 0h2m3 0h1m20 0h2m7 0h1m4 0h1m5 0h1m1 0h1m12 0h1m18 0h1m10 0h2m4 0h1m1 0h1m18 0h1m5 0h3m4 0h1m1 0h1m5 0h1m8 0h2m3 0h3m3 0h2m7 0h3m1 0h2m19 0h1m10 0h3m4 0h2m1 0h1m10 0h2m17 0h2m1 0h1m10 0h3m2 0h1m1 0h1m2 0h1m24 0h1m15 0h2m4 0h1m8 0h1m1 0h4m3 0h1m2 0h1m18 0h1m1 0h1m17 0h3m6 0h2m15 0h1m21 0h2m234 0h2M3 148h1m35 0h1m41 0h1m34 0h1m206 0h1m27 0h1m27 0h1m15 0h1m41 0h1m25 0h1m170 0h2m133 0h1M498 156h1m136 0h1m133 0h1M501 198h1m7 0h2M538 202h1m7 0h1m9 0h1M538 206h1m17 0h1m15 0h1M556 210h1m14 0h1M502 219h1m3 0h2M479 260h1m2 0h4m2 0h1m8 0h1m3 0h1m7 0h1m17 0h1m101 0h1m3 0h1m6 0h2m1 0h1m157 0h1m1 0h1m5 0h1m1 0h2M606 294h1m80 0h1m11 0h1m35 0h1M593 298h1m153 0h1M584 302h1m125 0h1M751 306h1M164 310h1M0 360h1m17 0h1m295 0h1m2 0h2m6 0h3m4 0h2m1 0h1m1 0h2m3 0h5m2 0h1m1 0h1m2 0h1m1 0h1m9 0h1m3 0h1m10 0h1m7 0h4m11 0h1m4 0h2m7 0h1m33 0h2m3 0h1m1 0h1m1 0h1m27 0h1m14 0h1M533 369h2m4 0h1m2 0h1m2 0h1m160 0h2m2 0h1m6 0h1m2 0h1m8 0h1m6 0h1m14 0h1m7 0h1m3 0h1m2 0h1m18 0h1m8 0h1m8 0h2m5 0h1M527 373h1m1 0h1m4 0h1m7 0h1m2 0h1m168 0h1m3 0h1m1 0h1m3 0h2m1 0h1m23 0h1m8 0h1m3 0h2m17 0h2m15 0h2m6 0h1m1 0h1m1 0h1M526 377h2m2 0h1m3 0h1m1 0h1m2 0h1m1 0h2m2 0h2m168 0h1m14 0h1m28 0h2m3 0h1m19 0h1m1 0h1m7 0h1m3 0h1m12 0h2M536 381h1m3 0h1m166 0h1m24 0h1m5 0h1m1 0h1m7 0h3m11 0h1m1 0h2m2 0h1m12 0h1m14 0h1m11 0h1m2 0h1M531 385h1m3 0h3m1 0h1m3 0h1m176 0h1m10 0h1m1 0h1m2 0h1m12 0h1m3 0h1m27 0h1m13 0h1m1 0h1m13 0h1M722 394h1m14 0h1m7 0h2m5 0h1m8 0h2m9 0h3m3 0h1m8 0h1m17 0h3M508 406h1M516 435h1M507 444h1m2 0h1m2 0h2m1 0h2M512 448h1m7 0h2M509 452h1M509 456h2m4 0h1m6 0h2m1 0h2M510 460h1m12 0h1m2 0h1M506 469h2m1 0h1m3 0h1m1 0h1m6 0h2m1 0h1M511 494h1m6 0h1m1 0h1M700 519h1m81 0h1M536 523h1m249 0h1M536 527h1m8 0h1m74 0h1M536 544h1m83 0h1m2 0h1M620 548h1m154 0h1"/><path stroke="#0094ff" stroke-width="5" d="M16 64.5h1m12 0h1m4 0h1m1 0h1m4 0h2m7 0h2m2 0h1m3 0h1m15 0h1m12 0h1m10 0h1m10 0h1m9 0h1m53 0h2m10 0h2m8 0h2m1 0h1m1 0h2m29 0h1m3 0h1m4 0h1m13 0h1m5 0h2m6 0h1m32 0h1m32 0h1m30 0h2m6 0h1m8 0h1m8 0h2m12 0h2m12 0h3m12 0h2m3 0h1m22 0h1m11 0h1M74 89.5h1m25 0h1m33 0h2m62 0h2m43 0h1m75 0h3m11 0h1m65 0h1m7 0h1m21 0h1m18 0h2m6 0h2M644 139.5h1m3 0h1m90 0h1m27 0h1m32 0h1M735 289.5h1m6 0h1M640 339.5h1m31 0h1M37 364.5h1m489 0h1m2 0h1m8 0h1m5 0h2m162 0h1m18 0h1m14 0h1m7 0h1m4 0h1m3 0h1m6 0h1m22 0h1m9 0h1m9 0h1M505 389.5h2m20 0h1m7 0h2m2 0h1m167 0h1m10 0h1m17 0h1m14 0h1m5 0h1m8 0h1m1 0h1m14 0h1m1 0h1m9 0h2M541 414.5h1m4 0h1m3 0h1m15 0h1m2 0h1m2 0h1m5 0h3m1 0h2m8 0h1m18 0h1m8 0h1m3 0h1m3 0h1m22 0h1m14 0h1m1 0h2m4 0h1m3 0h1m6 0h1m6 0h1m12 0h1m5 0h1m2 0h2m15 0h1m35 0h1m2 0h1m2 0h1m2 0h1m1 0h1m1 0h1m8 0h1m3 0h1m12 0h1m1 0h1M509 439.5h1m2 0h2m4 0h2m1 0h1m3 0h1M511 464.5h1m8 0h1m5 0h1M514 489.5h5m1 0h3M536 539.5h1m22 0h1"/><path stroke="#009eff" stroke-width="4" d="M426 19h1M22 23h1m199 0h1m203 0h1m344 0h1m17 0h1M3 94h1m82 0h1m30 0h1m8 0h1m175 0h1m53 0h1m23 0h1m56 0h1M492 119h1m141 0h1m28 0h1m67 0h1M639 131h1m13 0h1m73 0h1m39 0h1m33 0h1M11 144h2m5 0h2m6 0h1m2 0h1m17 0h2m9 0h1m2 0h4m2 0h1m1 0h3m3 0h2m6 0h2m2 0h1m7 0h4m10 0h1m4 0h2m4 0h1m9 0h2m1 0h1m1 0h1m11 0h3m5 0h2m1 0h3m5 0h4m5 0h3m5 0h1m17 0h3m1 0h1m1 0h1m3 0h1m5 0h2m15 0h2m11 0h1m5 0h1m11 0h1m1 0h2m11 0h1m5 0h1m8 0h3m11 0h5m1 0h2m2 0h1m1 0h1m4 0h3m8 0h1m5 0h3m8 0h2m28 0h2m12 0h1m4 0h3m1 0h2m2 0h1m5 0h2m7 0h2m1 0h1m4 0h1m3 0h1m3 0h3m11 0h1m10 0h7m1 0h1m3 0h1m12 0h1m32 0h1m80 0h1m56 0h1m105 0h1m18 0h1M117 148h1m407 0h1m80 0h1m56 0h1M598 152h1m168 0h1m8 0h1m30 0h1M497 156h1m167 0h1M499 198h2M561 202h1m7 0h1m1 0h1M560 206h1M538 210h1m21 0h2m10 0h1m12 0h1M504 219h2M481 260h1m5 0h1m1 0h1m5 0h1m4 0h1m1 0h1m3 0h1m1 0h1m15 0h1m4 0h1m1 0h1m100 0h1m1 0h1m9 0h1m157 0h1m1 0h1m1 0h1m1 0h1M164 285h1M536 294h1m37 0h1m29 0h1m8 0h1m31 0h1m29 0h1m6 0h1m10 0h1M557 298h1m16 0h1m6 0h1m216 0h1M596 302h1m57 0h1m2 0h1m22 0h1m18 0h1M654 306h1M426 310h1M334 360h1m1 0h1m2 0h2m6 0h1m2 0h1m6 0h3m4 0h1m4 0h1m1 0h3m3 0h1m16 0h3m10 0h2m2 0h1m5 0h1m1 0h1m1 0h1m8 0h1m13 0h3m7 0h2m6 0h1m32 0h1m6 0h1M164 369h1m381 0h1m169 0h1m7 0h2m2 0h1m1 0h1m18 0h2m13 0h1m31 0h1m15 0h1M530 373h1m8 0h1m166 0h2m9 0h1m41 0h1m6 0h1m22 0h1m1 0h1m5 0h1m5 0h1m7 0h1M531 377h2m11 0h1m174 0h1m16 0h1m12 0h2m4 0h1m12 0h1m13 0h2m5 0h1m7 0h1m6 0h1m4 0h2M543 381h2m160 0h1m17 0h1m7 0h1m7 0h1m1 0h1m4 0h1m7 0h2m5 0h1m12 0h1m14 0h1m4 0h2m10 0h1M466 385h1m59 0h1m5 0h1m5 0h1m1 0h1m3 0h1m162 0h2m2 0h1m11 0h1m14 0h2m5 0h1m9 0h1m12 0h1m2 0h1m7 0h1m9 0h1m2 0h1m13 0h2M547 394h1m164 0h1m8 0h1m1 0h1m56 0h1M539 410h1m21 0h1m15 0h1m86 0h2m17 0h1m16 0h1M505 435h1m4 0h4m3 0h1m2 0h1m1 0h1m1 0h1M509 444h1m2 0h1m6 0h1m2 0h1M506 448h2m3 0h1m1 0h2m3 0h2m3 0h1M506 452h1m3 0h1m3 0h1m4 0h1m2 0h2m2 0h1M518 456h1M515 460h1m9 0h1M508 469h1m9 0h1M623 527h1m76 0h1M559 531h1m140 0h1M609 535h1M512 544h2m95 0h1m182 0h1M623 548h1m76 0h1m81 0h1"/><path stroke="#009eff" stroke-width="5" d="M55 64.5h1m3 0h1m107 0h1m156 0h1m115 0h1m12 0h1m16 0h1M43 89.5h1m18 0h1m1 0h1m5 0h2m6 0h2m7 0h1m11 0h1m9 0h1m3 0h2m4 0h1m1 0h1m31 0h1m4 0h1m5 0h2m1 0h2m3 0h1m4 0h1m13 0h1m13 0h2m11 0h1m3 0h1m5 0h1m3 0h2m8 0h1m2 0h1m19 0h1m14 0h1m3 0h2m1 0h1m7 0h3m19 0h1m13 0h2m4 0h1m17 0h1m9 0h1m16 0h1m23 0h1m18 0h1m1 0h2m29 0h1m8 0h2m6 0h1M99 139.5h1m495 0h1m191 0h1M657 289.5h1m17 0h2m83 0h1M554 339.5h1m4 0h2m8 0h2m1 0h3m2 0h1m1 0h1m14 0h1m4 0h1m1 0h3m4 0h1m11 0h1m2 0h1m6 0h1m3 0h3m4 0h1m19 0h2m1 0h2m3 0h2m4 0h2m5 0h1m6 0h1m4 0h3m4 0h1m1 0h2M533 364.5h1m2 0h1m169 0h2m6 0h1m4 0h2m6 0h1m3 0h1m23 0h1m3 0h1m3 0h2m17 0h1m2 0h1m15 0h3m7 0h1M526 389.5h1m4 0h2m1 0h1m2 0h1m5 0h1m173 0h1m1 0h1m4 0h1m24 0h2m2 0h1m5 0h2m4 0h1m18 0h1m4 0h1m4 0h1m2 0h1m4 0h1m5 0h1M532 414.5h1m14 0h1m1 0h1m9 0h1m29 0h1m3 0h1m10 0h2m3 0h1m5 0h2m1 0h2m6 0h1m21 0h2m4 0h2m11 0h1m11 0h2m5 0h1m7 0h1m26 0h1m5 0h1m2 0h1m3 0h2m33 0h1m1 0h2m6 0h1m14 0h1m1 0h1m2 0h1m5 0h1M506 439.5h2m2 0h1m4 0h1m6 0h2m2 0h1M506 464.5h1m2 0h2m4 0h1m7 0h1m38 0h1m23 0h1m71 0h1m40 0h1m66 0h1M519 489.5h1M512 514.5h2m6 0h3M513 539.5h1m7 0h1m260 0h1"/><path stroke="#00a8ff" stroke-width="4" d="M22 19h1m142 0h1m332 0h1m165 0h1M499 23h1m165 0h1m122 0h1M14 60h1m5 0h1m31 0h1m7 0h1m1 0h1m4 0h1m13 0h1m13 0h1m1 0h1m13 0h4m19 0h1m9 0h1M61 73h2M496 119h1m108 0h1m29 0h1m29 0h1m67 0h1M580 131h1m12 0h1m140 0h1M631 135h1m56 0h1m7 0h1m11 0h1m20 0h1m31 0h1m41 0h1m5 0h1M0 144h1m7 0h3m2 0h2m7 0h2m1 0h1m1 0h2m5 0h2m4 0h1m4 0h1m6 0h3m2 0h1m7 0h2m1 0h1m8 0h1m4 0h1m6 0h1m4 0h1m6 0h7m19 0h1m4 0h1m3 0h3m2 0h1m15 0h1m13 0h1m6 0h1m3 0h1m4 0h1m4 0h5m12 0h2m8 0h1m9 0h1m6 0h3m1 0h1m10 0h1m2 0h1m2 0h1m2 0h1m8 0h2m1 0h1m9 0h1m5 0h1m1 0h1m2 0h1m12 0h1m7 0h1m7 0h1m1 0h2m4 0h1m8 0h2m1 0h1m6 0h2m7 0h1m5 0h1m9 0h1m1 0h2m8 0h1m9 0h1m13 0h1m3 0h2m3 0h2m2 0h3m5 0h1m3 0h2m2 0h1m11 0h2m152 0h1m58 0h2M498 148h1m165 0h1m53 0h1m14 0h1m36 0h1m16 0h2M600 152h1m111 0h1m17 0h1M492 156h1m3 0h1m108 0h1m28 0h1m135 0h1M482 185h1m8 0h1M505 198h1m2 0h1M560 202h1M541 206h1m4 0h1m36 0h1M583 210h1M494 260h1m1 0h1m1 0h2m3 0h2m5 0h2m10 0h2m1 0h1m279 0h1m1 0h1M426 285h1M616 294h1m37 0h1m111 0h1M551 298h1m32 0h1m108 0h1m16 0h1M616 302h1m6 0h1m51 0h1m12 0h1m12 0h1m64 0h1M710 306h1M14 360h1m23 0h1m280 0h6m5 0h2m9 0h1m6 0h1m16 0h1m10 0h1m9 0h3m17 0h1m5 0h1m2 0h2m3 0h1m10 0h2m1 0h1m15 0h1m7 0h1m1 0h1m2 0h1m1 0h1m1 0h6m7 0h1m15 0h1m4 0h1m1 0h1m4 0h1m1 0h1m12 0h2m201 0h1m16 0h1m14 0h1m16 0h2m22 0h1M526 369h1m10 0h1m6 0h1m238 0h2m6 0h1m3 0h1m15 0h1M533 373h1m1 0h1m5 0h1m1 0h1m186 0h1m9 0h1m8 0h2m12 0h1m21 0h1m9 0h1m2 0h1m10 0h1M428 377h1m111 0h1m2 0h1m163 0h1m16 0h1m7 0h1m9 0h1m10 0h2m8 0h1m10 0h1m6 0h1m13 0h2M531 381h2m175 0h1m3 0h1m9 0h1m10 0h1m3 0h1m4 0h1m4 0h1m23 0h1m1 0h1m13 0h1m4 0h2m11 0h1m1 0h1M428 385h1m276 0h1m6 0h2m23 0h1m2 0h3m3 0h1m1 0h1m5 0h1m19 0h1m3 0h1m8 0h1m5 0h1m11 0h1M535 410h1m26 0h1m7 0h2m15 0h1m7 0h1m18 0h1m8 0h1m19 0h1m40 0h1m16 0h1m20 0h1m80 0h1M506 435h2m1 0h1m4 0h2m2 0h2m1 0h1m1 0h1m2 0h1M521 444h1M509 448h2m14 0h1M515 452h1m9 0h1M508 456h1M508 460h1M526 469h1M536 519h1m111 0h1M775 523h1M775 531h1m16 0h1M536 535h1m86 0h1m162 0h1M516 544h1m3 0h3M559 548h1m49 0h1m38 0h1m137 0h1m5 0h1"/><path stroke="#00a8ff" stroke-width="5" d="M13 89.5h1m4 0h1m28 0h2m11 0h2m1 0h1m8 0h2m21 0h1m12 0h1m6 0h1m4 0h1m10 0h1m16 0h1m6 0h1m13 0h2m4 0h2m20 0h1m3 0h4m6 0h2m4 0h1m8 0h2m18 0h2m18 0h1m10 0h3m6 0h1m11 0h2m9 0h1m2 0h1m1 0h1m1 0h1m1 0h1m7 0h1m11 0h1m2 0h1m42 0h1m13 0h1m1 0h3m1 0h1m3 0h2m4 0h1m3 0h1m11 0h1m11 0h1m1 0h1m25 0h5m4 0h1M72 139.5h1m5 0h1m21 0h1m34 0h1m36 0h1m34 0h1m19 0h2m13 0h1m23 0h1m12 0h1m19 0h1m19 0h2m10 0h1m1 0h1m20 0h2m26 0h2m14 0h1m2 0h2m53 0h1m1 0h1m302 0h1M654 289.5h1m33 0h1M548 339.5h2m2 0h2m1 0h4m2 0h7m12 0h3m9 0h1m2 0h1m2 0h1m8 0h1m1 0h1m2 0h2m7 0h1m2 0h4m1 0h1m1 0h3m4 0h1m3 0h3m18 0h1m3 0h1m5 0h2m2 0h1m3 0h1m1 0h3m2 0h1m1 0h4m3 0h3m2 0h1M531 364.5h1m10 0h2m161 0h1m11 0h2m13 0h1m3 0h1m13 0h1m14 0h1m2 0h1m12 0h1m1 0h1m2 0h1m2 0h1m1 0h1m2 0h1M466 389.5h1m6 0h1m64 0h1m1 0h1m3 0h1m161 0h1m25 0h1m9 0h1m36 0h1m2 0h1m26 0h1M567 414.5h1m7 0h1m5 0h1m16 0h3m2 0h1m13 0h1m75 0h1m10 0h1m8 0h1m10 0h2m39 0h1m18 0h2m21 0h1M518 464.5h1m42 0h1m14 0h1m19 0h1m10 0h1m21 0h1m6 0h1m10 0h1m16 0h2m15 0h1m2 0h1m6 0h1m6 0h1m1 0h1m31 0h1m28 0h1m21 0h1m6 0h1m11 0h1M511 489.5h1M514 514.5h6M512 539.5h1m4 0h1m85 0h1m96 0h1m91 0h1"/><path stroke="#00b4ff" stroke-width="4" d="M731 19h1m39 0h1m17 0h1M497 23h1m108 0h1m57 0h1m68 0h1M19 52h1m42 0h1m71 0h1M8 60h1m3 0h1m2 0h1m3 0h1m3 0h1m20 0h2m2 0h2m3 0h1m7 0h1m4 0h1m10 0h3m4 0h1m11 0h1m18 0h1m5 0h2m5 0h3m14 0h2m9 0h2M12 73h1m1 0h1m4 0h1m33 0h1m6 0h1m22 0h1m11 0h1m15 0h1m1 0h1m31 0h1M497 119h2m26 0h1m80 0h1m57 0h1m53 0h1m13 0h1m36 0h1m18 0h1M700 131h1m60 0h1M623 135h1m20 0h1m19 0h1m15 0h3m93 0h1m10 0h1m17 0h2M4 144h2m1 0h1m7 0h2m3 0h2m2 0h1m7 0h2m2 0h1m7 0h1m1 0h1m2 0h3m4 0h1m2 0h1m28 0h1m1 0h4m16 0h3m5 0h1m3 0h5m1 0h2m9 0h2m1 0h5m3 0h3m8 0h1m11 0h2m4 0h2m3 0h3m1 0h1m1 0h1m17 0h1m4 0h3m4 0h1m2 0h1m6 0h2m12 0h1m3 0h1m1 0h1m1 0h1m2 0h2m1 0h2m1 0h4m6 0h1m1 0h1m7 0h1m1 0h1m5 0h1m1 0h2m7 0h1m2 0h3m1 0h2m14 0h1m5 0h1m16 0h3m3 0h2m3 0h1m1 0h5m3 0h2m1 0h4m1 0h1m11 0h1m2 0h2m1 0h1m1 0h1m16 0h1m3 0h1m5 0h1m9 0h2m6 0h2m4 0h2m5 0h2m4 0h4m2 0h2m9 0h3m19 0h1m219 0h1m12 0h1m55 0h1M497 148h1m107 0h1m59 0h1M588 152h1m2 0h2m38 0h1m21 0h1m4 0h1m9 0h1m8 0h1m51 0h1m31 0h1M525 156h1m80 0h1m57 0h1m53 0h1m12 0h2m54 0h2M487 185h2m4 0h3M502 198h3m1 0h1m115 0h1m186 0h1M23 210h1M222 223h1M501 231h1M480 260h1m45 0h1m115 0h1M553 294h1m30 0h1m8 0h1m32 0h1m115 0h1M544 298h1m150 0h1m5 0h1m64 0h1M536 302h1m16 0h1m20 0h1m11 0h1M37 360h1m391 0h1m3 0h1m1 0h1m4 0h4m3 0h1m26 0h2m17 0h2m2 0h2m10 0h1m17 0h1m13 0h2m2 0h1m163 0h2m3 0h1m1 0h1m12 0h1m19 0h2m5 0h1m9 0h1m10 0h1m12 0h1m9 0h1m1 0h2M473 369h1m62 0h1m182 0h1m12 0h1m21 0h1m10 0h1m2 0h1m12 0h1m15 0h1M428 373h1m44 0h1m66 0h1m3 0h1m174 0h1m11 0h1m4 0h1m5 0h1m10 0h1m1 0h1m12 0h1m13 0h1m3 0h1m17 0h1M426 377h1m39 0h1m70 0h1m167 0h1m6 0h2m17 0h1m5 0h1m2 0h2m3 0h1m1 0h1m14 0h1m10 0h1m5 0h1m12 0h1M538 381h1m172 0h1m1 0h1m7 0h1m23 0h1m6 0h1m19 0h1m5 0h3M721 385h2m24 0h1m4 0h1m8 0h2m9 0h2m6 0h1M533 410h1m3 0h1m5 0h1m1 0h1m12 0h1m4 0h1m19 0h2m9 0h1m1 0h1m4 0h1m11 0h1m23 0h1m6 0h1m2 0h1m4 0h1m5 0h1m13 0h2m1 0h2m5 0h1m4 0h1m8 0h2m1 0h1m60 0h1m5 0h1m7 0h1m7 0h2m8 0h1m8 0h2M525 435h1M506 444h1m8 0h1m7 0h1m1 0h2M522 448h1m3 0h1M508 452h1m9 0h1M559 519h1m60 0h1m171 0h1M620 523h1M559 527h1m178 0h1M648 531h1M514 544h2m1 0h2"/><path stroke="#00b4ff" stroke-width="5" d="M0 89.5h1m11 0h1m13 0h1m1 0h1m4 0h1m7 0h2m14 0h1m10 0h1m6 0h1m1 0h1m11 0h1m4 0h1m1 0h3m31 0h1m7 0h1m1 0h1m6 0h1m12 0h1m5 0h1m4 0h1m11 0h1m11 0h1m11 0h1m13 0h1m12 0h1m1 0h1m3 0h1m10 0h1m1 0h1m13 0h2m22 0h1m18 0h1m2 0h1m1 0h1m9 0h1m1 0h1m8 0h1m2 0h1m3 0h2m9 0h1m31 0h1m1 0h1m7 0h2m19 0h1m8 0h1m8 0h1m2 0h1m11 0h1m1 0h1m16 0h1M19 139.5h1m5 0h1m15 0h3m3 0h2m11 0h1m2 0h1m6 0h2m1 0h1m5 0h1m7 0h1m10 0h1m10 0h1m3 0h2m4 0h3m8 0h1m3 0h1m18 0h1m4 0h1m5 0h2m2 0h1m6 0h1m1 0h1m19 0h2m5 0h1m7 0h1m9 0h1m9 0h1m8 0h1m1 0h1m1 0h1m19 0h1m2 0h1m8 0h2m5 0h3m11 0h1m15 0h1m2 0h2m2 0h1m5 0h2m3 0h1m3 0h1m28 0h2m30 0h1m2 0h1m3 0h1m1 0h1m2 0h1m16 0h1m1 0h3m17 0h1m1 0h1m6 0h1m10 0h1m1 0h2m1 0h1m5 0h1m12 0h1m4 0h1m107 0h1m29 0h1m134 0h1M411 214.5h1m89 0h1M687 289.5h1m110 0h1M550 339.5h2m16 0h1m2 0h1m3 0h2m1 0h1m4 0h1m9 0h1m2 0h2m2 0h1m3 0h3m7 0h1m3 0h2m2 0h1m5 0h1m8 0h1m1 0h1m26 0h1m1 0h1m2 0h1m6 0h3m5 0h2m12 0h1M526 364.5h1m5 0h1m178 0h1m12 0h1m5 0h1m18 0h1m4 0h1m18 0h1m19 0h1m1 0h1m8 0h1m3 0h2m2 0h1M547 389.5h1m165 0h1m9 0h1m6 0h2m1 0h1m20 0h2m5 0h1m10 0h1m1 0h1m6 0h1m5 0h1m4 0h2m10 0h2M540 414.5h1m1 0h1m65 0h1m52 0h1m8 0h2m36 0h3M508 439.5h1M525 464.5h1m5 0h1m1 0h1m1 0h1m2 0h2m17 0h1m5 0h1m6 0h1m3 0h1m2 0h1m5 0h3m4 0h1m3 0h1m6 0h2m3 0h1m6 0h2m7 0h2m3 0h1m10 0h1m6 0h2m10 0h1m17 0h1m6 0h1m6 0h1m2 0h1m13 0h1m5 0h1m6 0h2m5 0h1m33 0h1m14 0h1m6 0h1m4 0h1m10 0h1m1 0h2m1 0h2m6 0h1M511 514.5h1M514 539.5h3m1 0h1m3 0h1"/><path stroke="#00c0ff" stroke-width="4" d="M222 19h1m204 0h1m359 0h1M12 52h1m2 0h1m4 0h1m39 0h2m34 0h2m14 0h3m11 0h1m1 0h1m23 0h1M3 60h2m4 0h3m5 0h2m18 0h1m8 0h2m9 0h1m6 0h1m11 0h1m3 0h1m1 0h2m1 0h1m3 0h1m1 0h1m24 0h1m3 0h1m2 0h5m24 0h1m1 0h2m2 0h1m190 0h1M1 73h1m7 0h1m1 0h1m8 0h1m2 0h1m20 0h1m2 0h1m28 0h1m4 0h2m2 0h1m11 0h1m14 0h1m8 0h1m3 0h1m2 0h3m3 0h1m21 0h1m191 0h1M787 119h1M605 123h1m59 0h1M588 131h1m59 0h1m151 0h1M580 135h1m12 0h1m2 0h1m42 0h1m12 0h2m36 0h1m39 0h1m19 0h1m16 0h1M1 144h3m2 0h1m10 0h1m12 0h2m5 0h3m15 0h1m24 0h2m3 0h2m30 0h1m36 0h1m7 0h2m17 0h1m7 0h1m10 0h1m15 0h1m7 0h2m13 0h1m9 0h1m24 0h2m18 0h1m6 0h2m31 0h2m15 0h1m4 0h1m12 0h1m8 0h4m7 0h1m2 0h1m1 0h1m18 0h1m7 0h1m15 0h1m7 0h1m9 0h1m7 0h2m169 0h2m134 0h1M492 148h1m3 0h1m234 0h2M673 152h1m7 0h1m8 0h1m43 0h1m17 0h1M663 156h1m69 0h1M480 185h1m9 0h1M507 198h1m22 0h1M23 202h1m198 0h1M809 206h1M222 210h1M222 219h1M23 223h1m387 0h1M509 227h1M509 231h2M583 277h1m151 0h1M164 281h1m261 0h1M545 294h1m11 0h1m30 0h1m21 0h1M545 298h1m42 0h1m15 0h1M544 302h2m5 0h1m41 0h1M2 360h1m23 0h1m12 0h1m397 0h1m1 0h1m9 0h1m1 0h1m24 0h1m5 0h1m3 0h1m4 0h2m7 0h1m10 0h2m1 0h1m1 0h2m2 0h2m4 0h1m2 0h2m2 0h3m10 0h1m160 0h1m7 0h1m2 0h2m5 0h1m1 0h2m15 0h1m12 0h1m1 0h1m4 0h1m2 0h1m16 0h3m4 0h1m9 0h1m2 0h1m4 0h1m1 0h1M428 369h1m102 0h2m5 0h1m192 0h1m13 0h1m2 0h1m13 0h1m10 0h2m7 0h1m10 0h1m13 0h1M526 373h1m4 0h1m4 0h2m173 0h2m20 0h1m3 0h1m7 0h2m7 0h1m26 0h1m12 0h1m1 0h1m9 0h2M708 377h1m2 0h1m11 0h1m14 0h1m7 0h1m1 0h1m23 0h1m34 0h1M547 381h1M547 385h1M528 410h1m1 0h1m5 0h1m1 0h1m12 0h1m16 0h1m4 0h2m1 0h1m8 0h2m4 0h1m5 0h1m9 0h1m21 0h1m15 0h1m11 0h1m1 0h2m20 0h1m6 0h3m7 0h1m7 0h1m9 0h1m6 0h1m2 0h1m2 0h1m3 0h1m27 0h1m19 0h1m4 0h2m2 0h1m4 0h1m4 0h1m3 0h1M164 435h1m343 0h1M508 444h1m9 0h1M515 448h1M735 531h1m38 0h1M512 535h2m1 0h2m3 0h3M511 544h1m7 0h1"/><path stroke="#00c0ff" stroke-width="5" d="M643 64.5h1M8 89.5h1m1 0h2m2 0h1m4 0h1m5 0h1m1 0h1m6 0h1m10 0h2m6 0h1m4 0h1m8 0h1m1 0h1m6 0h1m5 0h3m16 0h3m1 0h1m1 0h1m20 0h2m2 0h2m2 0h2m3 0h1m7 0h1m6 0h2m1 0h1m18 0h1m5 0h4m5 0h1m16 0h1m19 0h1m4 0h1m19 0h1m5 0h1m7 0h2m1 0h2m8 0h1m6 0h1m2 0h1m11 0h1m6 0h1m10 0h1m1 0h1m3 0h1m13 0h1m14 0h1m1 0h1m3 0h1m9 0h2m2 0h1m7 0h1m6 0h1m10 0h1m1 0h1m4 0h2m3 0h1m3 0h1m2 0h3m6 0h2m1 0h1m1 0h1m2 0h2m2 0h1m7 0h1M8 139.5h1m2 0h1m14 0h1m1 0h1m4 0h1m27 0h2m1 0h1m9 0h1m1 0h1m7 0h1m4 0h1m4 0h1m1 0h2m4 0h1m5 0h1m6 0h1m15 0h1m15 0h1m7 0h1m1 0h1m2 0h1m5 0h2m1 0h2m5 0h1m6 0h1m7 0h1m4 0h1m2 0h1m1 0h2m2 0h2m4 0h1m5 0h2m2 0h1m4 0h1m6 0h1m1 0h1m4 0h1m5 0h2m5 0h1m13 0h1m12 0h1m6 0h1m7 0h2m12 0h1m2 0h2m1 0h2m7 0h3m10 0h3m1 0h2m41 0h2m2 0h1m7 0h1m2 0h1m3 0h1m1 0h1m1 0h2m5 0h1m2 0h1m1 0h1m5 0h1m1 0h1m10 0h2m3 0h2m4 0h1m1 0h1m15 0h1m1 0h1m2 0h1m1 0h2m189 0h1m52 0h1M222 214.5h1m286 0h1M769 314.5h1M537 364.5h1m6 0h1m194 0h2m4 0h1m6 0h2m7 0h2m9 0h1m5 0h2m16 0h2M705 389.5h1m2 0h1m28 0h1m1 0h3m20 0h1m10 0h1m32 0h1M508 464.5h1m19 0h1m7 0h2m3 0h1m1 0h3m10 0h1m1 0h1m5 0h2m5 0h2m14 0h1m1 0h1m1 0h1m3 0h1m1 0h1m7 0h1m4 0h1m1 0h1m13 0h1m8 0h1m1 0h1m5 0h2m7 0h1m3 0h1m2 0h1m12 0h2m2 0h1m6 0h1m3 0h2m1 0h1m4 0h3m3 0h2m13 0h1m5 0h2m4 0h1m1 0h1m2 0h1m25 0h1m3 0h2m2 0h1m21 0h1m5 0h1m1 0h1m14 0h1M519 539.5h2"/><path stroke="#00ccff" stroke-width="4" d="M410 19h1m194 0h1m59 0h1m103 0h1M11 52h1m2 0h1m32 0h2m3 0h2m12 0h1m9 0h1m5 0h1m1 0h2m9 0h1m25 0h1m1 0h2m5 0h1m13 0h2m11 0h2M1 60h1m4 0h1m14 0h1m4 0h2m5 0h1m22 0h1m6 0h1m1 0h1m2 0h2m1 0h1m3 0h1m14 0h1m3 0h1m8 0h1m1 0h1m1 0h2m8 0h1m17 0h2m2 0h2m18 0h1m61 0h1m1 0h1m2 0h1m1 0h1m7 0h1m10 0h1m3 0h1m96 0h1m1 0h1m57 0h1M718 69h1M3 73h1m11 0h1m2 0h1m18 0h1m8 0h1m5 0h1m4 0h1m9 0h1m9 0h3m16 0h1m18 0h3m5 0h1m3 0h1m16 0h1m12 0h2m92 0h1m97 0h2m1 0h1M60 85h1m10 0h1m1 0h2m3 0h2m19 0h2m13 0h2m3 0h2m13 0h2m22 0h1m6 0h1m6 0h1m18 0h1m5 0h1m13 0h1m16 0h1m13 0h1m22 0h1m14 0h1m51 0h2m20 0h2m9 0h2m15 0h2m14 0h1m8 0h1m20 0h2m20 0h1m6 0h1m13 0h1M525 123h1m109 0h1m151 0h1M492 127h1m5 0h1m26 0h1m138 0h1m66 0h1M78 135h1m85 0h2m75 0h1m77 0h1m13 0h1m48 0h2m211 0h1m2 0h1m59 0h1m9 0h1m58 0h1m16 0h1m62 0h1M116 144h1m159 0h1M596 152h1m67 0h1m31 0h1m11 0h1m56 0h1m37 0h1M489 185h1M612 198h1m5 0h1m6 0h1m182 0h1M411 202h1m234 0h1M23 206h1m618 0h1m98 0h1M411 210h1m98 0h1M411 219h1M502 231h1m5 0h1M623 256h1M563 277h1m26 0h1M535 294h1M533 298h1m2 0h1m73 0h1M581 302h1M1 360h1m4 0h1m429 0h1m11 0h1m24 0h1m3 0h2m4 0h2m2 0h2m24 0h1m1 0h1m2 0h2m2 0h1m14 0h1m5 0h2m163 0h1m8 0h1m2 0h1m3 0h1m5 0h1m9 0h1m10 0h1m1 0h1m6 0h1m2 0h1m1 0h1m17 0h1m11 0h1m1 0h2m9 0h1m1 0h1M466 369h1m238 0h1m5 0h2m24 0h4m1 0h1m4 0h1m5 0h1m1 0h1m16 0h1m16 0h1m2 0h1M466 373h1m65 0h1m175 0h1m14 0h1m8 0h1m8 0h1m6 0h1m25 0h1m4 0h1m7 0h1M538 377h1m8 0h1m173 0h1m11 0h1m5 0h1m21 0h1m9 0h1m6 0h1m1 0h1m6 0h1m5 0h1m11 0h2M426 381h1M576 406h1m25 0h1m78 0h1M534 410h1m6 0h1m8 0h1m1 0h1m3 0h2m6 0h2m36 0h1m3 0h1m3 0h3m9 0h1m2 0h1m1 0h1m7 0h1m2 0h1m7 0h1m9 0h1m34 0h1m3 0h1m16 0h1m50 0h1m3 0h1m20 0h1m20 0h1M535 435h1m7 0h1m17 0h1m14 0h1m37 0h1m8 0h1m21 0h2m11 0h1m23 0h1m39 0h2M508 448h1M535 460h1m21 0h1m4 0h1m7 0h1m5 0h2m8 0h1m15 0h1m41 0h1m13 0h1m16 0h1m6 0h1m17 0h1m60 0h1m4 0h1m36 0h1M768 531h1M514 535h1m2 0h2"/><path stroke="#00ccff" stroke-width="5" d="M4 89.5h1m4 0h1m7 0h1m2 0h4m5 0h1m2 0h1m3 0h1m3 0h1m3 0h1m4 0h4m3 0h1m2 0h1m5 0h2m23 0h1m13 0h1m1 0h1m3 0h2m6 0h1m5 0h1m14 0h1m3 0h3m15 0h1m1 0h1m9 0h2m6 0h2m9 0h1m3 0h1m11 0h1m4 0h1m6 0h1m8 0h1m1 0h1m5 0h1m10 0h1m3 0h1m1 0h1m2 0h3m11 0h1m9 0h1m1 0h1m6 0h1m2 0h1m6 0h1m2 0h1m1 0h1m2 0h1m20 0h2m3 0h2m4 0h1m4 0h2m11 0h1m5 0h1m5 0h1m41 0h1m7 0h1m32 0h2m4 0h1m4 0h1M0 139.5h1m3 0h1m4 0h2m1 0h3m3 0h1m10 0h1m4 0h1m11 0h1m6 0h1m3 0h3m5 0h1m1 0h3m5 0h1m1 0h1m4 0h2m11 0h1m5 0h1m1 0h2m22 0h2m8 0h4m7 0h2m6 0h1m2 0h1m11 0h1m6 0h1m3 0h1m1 0h1m1 0h1m5 0h3m8 0h1m26 0h1m3 0h1m1 0h1m14 0h1m2 0h1m3 0h1m10 0h3m9 0h1m6 0h1m2 0h2m4 0h1m6 0h3m3 0h2m10 0h1m7 0h1m12 0h3m17 0h1m7 0h1m1 0h1m3 0h1m8 0h1m23 0h3m2 0h1m2 0h1m2 0h2m9 0h1m1 0h3m3 0h1m1 0h1m9 0h2m180 0h1m98 0h1M23 214.5h1M547 314.5h1m1 0h1m185 0h1m37 0h1M540 364.5h1m167 0h1m3 0h1m8 0h1m1 0h1m9 0h1m7 0h2m3 0h1m1 0h1m22 0h1m33 0h1M164 389.5h1m263 0h1m282 0h2m8 0h2m15 0h1m6 0h4m29 0h1m28 0h1M529 464.5h2m3 0h1m13 0h2m1 0h2m7 0h1m7 0h1m4 0h1m1 0h1m2 0h2m1 0h2m21 0h1m6 0h1m8 0h2m6 0h1m19 0h1m1 0h2m1 0h1m15 0h1m7 0h2m15 0h1m12 0h1m6 0h2m1 0h2m10 0h1m1 0h1m2 0h1m30 0h1m2 0h2m1 0h4m4 0h3m3 0h2m1 0h1m2 0h2m12 0h2m2 0h1M511 539.5h1"/><path stroke="#00d8ff" stroke-width="4" d="M497 19h1m235 0h1M1 52h1m1 0h2m3 0h1m1 0h1m6 0h1m5 0h1m13 0h1m6 0h1m4 0h1m17 0h1m12 0h2m1 0h1m27 0h1m3 0h1m4 0h1m4 0h1m1 0h1m1 0h1m26 0h1M14 56h1m5 0h1m31 0h1m7 0h3M5 60h1m24 0h1m1 0h1m3 0h1m2 0h1m3 0h1m29 0h1m12 0h3m3 0h1m5 0h1m1 0h1m1 0h1m1 0h1m1 0h1m25 0h1m4 0h2m3 0h1m4 0h5m1 0h1m6 0h2m2 0h1m72 0h3m2 0h3m7 0h1m2 0h1m3 0h1m38 0h1m12 0h1m2 0h1m37 0h1m13 0h5m7 0h1m59 0h1m279 0h1M4 73h1m3 0h1m1 0h1m15 0h1m18 0h1m2 0h1m7 0h1m9 0h1m1 0h1m6 0h1m4 0h1m3 0h1m6 0h1m22 0h1m7 0h1m1 0h1m1 0h1m9 0h1m9 0h1m2 0h1m2 0h1m2 0h1m67 0h1m4 0h1m10 0h1m3 0h1m3 0h1m4 0h1m5 0h1m52 0h1M11 85h1m1 0h2m3 0h2m21 0h3m4 0h1m4 0h1m3 0h1m3 0h4m2 0h2m1 0h1m1 0h1m14 0h1m1 0h1m5 0h4m3 0h1m5 0h2m3 0h1m7 0h1m9 0h1m16 0h2m3 0h1m2 0h2m6 0h1m1 0h5m4 0h3m14 0h1m5 0h2m1 0h7m4 0h1m4 0h2m2 0h2m3 0h2m4 0h2m1 0h1m5 0h1m1 0h1m1 0h2m4 0h1m3 0h1m10 0h3m8 0h3m4 0h4m7 0h5m9 0h2m2 0h9m3 0h4m2 0h1m5 0h2m2 0h2m41 0h1m12 0h1m1 0h8m1 0h2m4 0h2m2 0h1m6 0h3m2 0h1m11 0h2m4 0h2m2 0h1m3 0h1m1 0h1m8 0h4m1 0h2m1 0h1m3 0h11m8 0h4m5 0h3m1 0h1m1 0h1m1 0h1m6 0h5m1 0h1m1 0h2m1 0h4m6 0h7m1 0h4m5 0h1m6 0h3m2 0h1m3 0h9m3 0h9m3 0h6m5 0h1m6 0h3m1 0h1m1 0h3m9 0h1m2 0h2m1 0h1m2 0h3m4 0h1m1 0h3m1 0h2m3 0h3m3 0h3m3 0h7m1 0h1m11 0h1m12 0h6m3 0h4m2 0h11m1 0h2m1 0h12m3 0h3m1 0h1m4 0h3m5 0h1m6 0h2m4 0h3m9 0h3m12 0h3M498 123h1m135 0h1M634 127h1m83 0h1m14 0h1m54 0h1M60 135h1m39 0h1m7 0h1m5 0h2m3 0h1m1 0h1m12 0h1m34 0h1m2 0h1m25 0h2m7 0h1m3 0h2m13 0h2m37 0h1m20 0h2m33 0h1m9 0h2m33 0h1m30 0h1m29 0h1m22 0h1m5 0h2m12 0h1m8 0h1m16 0h1m1 0h1m26 0h1m66 0h1m7 0h1m4 0h1m15 0h2m54 0h1m22 0h1m17 0h1m14 0h1m36 0h1m18 0h1m21 0h1M595 152h1m25 0h1m1 0h1m33 0h1m30 0h1m55 0h1m5 0h1M481 185h1m10 0h1M626 198h1m14 0h1m165 0h1M743 202h1M742 206h1M23 219h1M503 231h1M549 256h1m2 0h1m4 0h1m141 0h1m18 0h1m4 0h1M549 277h1m6 0h2m141 0h1m18 0h1m40 0h1M555 335h1m5 0h1m36 0h1m73 0h1m16 0h1m4 0h1M548 356h1m4 0h1m6 0h2m7 0h1m2 0h1m1 0h1m2 0h1m1 0h2m17 0h1m1 0h1m7 0h2m19 0h2m2 0h1m2 0h1m28 0h1m3 0h1m3 0h1m1 0h2m12 0h1m1 0h1m2 0h3m5 0h1m1 0h1M425 360h1m1 0h1m10 0h1m25 0h1m16 0h1m3 0h1m19 0h3m23 0h2m3 0h1m1 0h2m166 0h1m6 0h1m7 0h1m1 0h1m12 0h2m14 0h1m1 0h2m5 0h1m6 0h1m10 0h1m1 0h2m6 0h1m4 0h1m1 0h1m8 0h1m6 0h1M540 369h1m2 0h1m164 0h1m37 0h1m5 0h1m8 0h1m43 0h2M538 373h1m166 0h1m7 0h1m8 0h1m16 0h1m7 0h1m4 0h1m18 0h3m4 0h1m1 0h1m12 0h1M722 377h1m29 0h1M560 385h2m73 0h1m36 0h1M525 394h1M561 406h1m15 0h1m23 0h1m21 0h1m20 0h1m37 0h1m1 0h1m6 0h1m7 0h1m1 0h1m100 0h1M529 410h1m1 0h1m16 0h1m30 0h1m10 0h1m2 0h1m4 0h1m5 0h1m15 0h2m14 0h1m13 0h2m1 0h2m11 0h1m13 0h1m11 0h1m14 0h1m6 0h1m4 0h2m11 0h1m1 0h2m23 0h1m4 0h1m3 0h2m1 0h1m3 0h1m13 0h1m1 0h1m2 0h1m2 0h2m6 0h1m2 0h1m3 0h1M531 435h1m4 0h4m10 0h2m5 0h2m3 0h4m4 0h2m2 0h1m2 0h1m7 0h3m2 0h1m3 0h1m2 0h1m4 0h1m3 0h2m2 0h1m1 0h2m8 0h1m6 0h1m5 0h1m2 0h1m4 0h2m2 0h1m17 0h1m9 0h1m5 0h1m2 0h1m2 0h2m1 0h1m1 0h1m4 0h2m1 0h2m4 0h2m24 0h1m27 0h2m1 0h2m1 0h2m6 0h1m6 0h3m6 0h2m6 0h1m2 0h4m6 0h1M536 460h3m5 0h2m12 0h1m4 0h3m17 0h1m3 0h1m2 0h2m2 0h4m3 0h1m8 0h1m3 0h1m6 0h3m13 0h2m4 0h1m1 0h3m3 0h1m4 0h1m3 0h1m3 0h1m7 0h1m3 0h1m4 0h1m1 0h2m3 0h1m2 0h1m5 0h3m1 0h1m4 0h1m15 0h2m2 0h1m40 0h1m7 0h1m7 0h1m2 0h1m1 0h1m2 0h2m8 0h2m1 0h1m6 0h1M591 531h1M511 535h1m7 0h1M591 548h1m176 0h1"/><path stroke="#00d8ff" stroke-width="5" d="M635 14.5h1M410 39.5h1M1 89.5h2m13 0h1m7 0h1m6 0h1m3 0h1m3 0h1m15 0h1m29 0h1m2 0h1m2 0h3m28 0h1m4 0h1m14 0h1m7 0h1m11 0h1m17 0h1m7 0h1m5 0h1m5 0h1m8 0h1m6 0h1m2 0h1m3 0h3m12 0h2m10 0h1m5 0h1m3 0h1m3 0h1m23 0h1m17 0h2m15 0h1m24 0h3m9 0h3m4 0h1m1 0h1m1 0h2m2 0h2m3 0h2m5 0h1m1 0h3m1 0h2m21 0h1m4 0h1m11 0h1m7 0h1m3 0h1m1 0h1m7 0h1m4 0h1m1 0h2m2 0h1m9 0h2M3 139.5h1m2 0h2m8 0h1m4 0h4m2 0h1m2 0h1m1 0h1m2 0h2m1 0h1m1 0h1m3 0h2m3 0h4m1 0h2m10 0h1m21 0h1m1 0h1m1 0h2m11 0h2m3 0h3m5 0h1m3 0h4m3 0h1m2 0h2m2 0h1m4 0h6m3 0h3m1 0h1m6 0h2m10 0h1m6 0h2m3 0h1m1 0h1m2 0h1m4 0h1m4 0h1m7 0h3m3 0h2m4 0h1m3 0h2m3 0h1m1 0h1m5 0h1m6 0h1m7 0h1m2 0h3m1 0h1m1 0h1m10 0h2m8 0h2m5 0h2m2 0h2m5 0h1m6 0h2m26 0h1m4 0h1m5 0h3m1 0h1m2 0h1m3 0h3m1 0h1m2 0h1m2 0h4m1 0h1m1 0h1m1 0h1m10 0h1m3 0h1m1 0h1m29 0h2m6 0h1m1 0h1m7 0h1m3 0h1m13 0h2m1 0h2m2 0h1m9 0h1m1 0h1m46 0h1m80 0h1m57 0h1m67 0h1m36 0h1M0 164.5h12m18 0h6m2 0h1m9 0h6m6 0h16m1 0h1m1 0h1m4 0h2m1 0h1m1 0h2m1 0h1m1 0h4m1 0h2m12 0h7m12 0h4m2 0h1m4 0h1m2 0h1m1 0h1m7 0h4m1 0h1m6 0h4m2 0h1m1 0h1m2 0h25m6 0h6m9 0h1m1 0h1m6 0h6m7 0h2m1 0h10m2 0h14m1 0h3m1 0h2m1 0h2m1 0h1m4 0h1m2 0h2m9 0h7m2 0h1m1 0h1m12 0h6m1 0h2m1 0h6m1 0h13m24 0h2m10 0h6m2 0h1m2 0h1m2 0h4m12 0h6m12 0h6m4 0h1m21 0h2m5 0h3m18 0h6m25 0h2m2 0h7m2 0h1m1 0h2m6 0h18m6 0h12m6 0h1m3 0h1m21 0h1m5 0h1m3 0h12m6 0h1m5 0h6m12 0h6m2 0h2m1 0h1m6 0h18m12 0h2m1 0h2m1 0h6m1 0h1m1 0h3m1 0h2m1 0h2m7 0h2m3 0h13m1 0h4m12 0h6m12 0h1m1 0h1M499 214.5h1m8 0h1m1 0h1M518 314.5h1m33 0h1m4 0h1m65 0h1m75 0h1m23 0h1M428 364.5h1m44 0h1m64 0h1m8 0h1m165 0h1m8 0h1m14 0h2m8 0h1m26 0h1m5 0h1m6 0h1m4 0h1m13 0h2M752 389.5h1M540 464.5h1m6 0h1m2 0h1m8 0h1m7 0h1m20 0h1m3 0h2m4 0h1m4 0h1m4 0h2m7 0h2m30 0h1m4 0h2m4 0h2m4 0h1m1 0h1m2 0h1m13 0h2m17 0h1m8 0h1m10 0h2m1 0h1m7 0h1m26 0h1m7 0h1m6 0h1m6 0h1m11 0h1m13 0h1"/><path stroke="#00e4ff" stroke-width="4" d="M643 10h1M9 52h1m8 0h1m7 0h1m18 0h2m9 0h1m11 0h2m5 0h1m1 0h3m10 0h1m14 0h1m2 0h1m7 0h1m5 0h1m23 0h1m1 0h2m10 0h1m78 0h1M44 56h1m22 0h1m27 0h1m16 0h1m1 0h1m10 0h1m8 0h1m9 0h2M29 60h1m4 0h2m4 0h1m1 0h1m11 0h2m2 0h2m10 0h1m1 0h1m1 0h1m18 0h1m7 0h1m8 0h1m7 0h2m11 0h1m9 0h1m1 0h1m18 0h2m26 0h1m11 0h1m10 0h1m1 0h2m10 0h1m1 0h1m15 0h2m10 0h2m22 0h2m14 0h1m6 0h1m3 0h1m3 0h2m5 0h1m22 0h2m17 0h3m7 0h1m5 0h1m9 0h1m47 0h3m29 0h1m2 0h1M635 69h1M5 73h1m11 0h1m31 0h1m14 0h2m3 0h1m19 0h1m4 0h1m9 0h3m1 0h1m28 0h1m2 0h1m1 0h1m4 0h1m5 0h2m66 0h1m5 0h1m8 0h3m3 0h1m3 0h1m12 0h1m38 0h1m6 0h1m8 0h1m36 0h1m15 0h2m1 0h1m37 0h1m234 0h1m74 0h1M718 77h1M497 123h1m108 0h1m56 0h2m53 0h1m14 0h1m36 0h1M496 127h2m108 0h1m125 0h1m36 0h1m17 0h1M18 135h1m22 0h1m6 0h1m12 0h2m1 0h1m5 0h2m2 0h1m4 0h1m17 0h1m1 0h1m9 0h1m3 0h1m16 0h1m4 0h1m34 0h1m6 0h1m13 0h1m5 0h1m7 0h2m14 0h2m5 0h1m3 0h2m8 0h2m2 0h1m19 0h2m9 0h4m3 0h2m11 0h2m12 0h1m2 0h1m2 0h1m2 0h1m15 0h1m4 0h1m12 0h1m10 0h1m32 0h1m2 0h2m3 0h2m1 0h1m18 0h1m19 0h1m20 0h1m3 0h2m113 0h1m59 0h1m8 0h1m15 0h1m58 0h1m55 0h1m11 0h2M525 152h1m174 0h1m32 0h1m54 0h1M524 198h1m113 0h1m7 0h1m96 0h1M612 202h1m25 0h1m163 0h1M222 206h1M23 227h1M499 231h1M0 244h6m15 0h2m1 0h12m2 0h1m2 0h1m6 0h1m2 0h1m1 0h2m1 0h1m2 0h8m5 0h2m1 0h2m1 0h2m3 0h7m1 0h5m6 0h6m12 0h6m3 0h1m2 0h6m5 0h1m1 0h2m2 0h3m2 0h1m1 0h2m1 0h4m11 0h12m2 0h1m23 0h1m1 0h1m7 0h6m1 0h1m22 0h6m12 0h6m12 0h3m1 0h1m13 0h2m1 0h1m1 0h7m2 0h2m13 0h1m6 0h6m12 0h10m1 0h1m12 0h18m1 0h5m1 0h1m10 0h18m6 0h6m1 0h2m2 0h9m2 0h3m1 0h1m1 0h2m12 0h18m2 0h2m2 0h1m1 0h2m2 0h6m4 0h15m2 0h5m2 0h1m1 0h12m1 0h1m10 0h16m23 0h2m1 0h9m1 0h2m5 0h6m2 0h1m1 0h1m1 0h1m18 0h7m6 0h1m2 0h1m10 0h2m1 0h12m6 0h9m1 0h2m18 0h1m2 0h2m1 0h12m6 0h1m2 0h2m1 0h1m1 0h10m14 0h2m2 0h9M565 256h1m17 0h1m6 0h1m182 0h1M547 277h1m4 0h1m1 0h1m105 0h1m62 0h1m44 0h1M553 335h2m1 0h5m8 0h2m1 0h2m3 0h1m2 0h1m14 0h1m3 0h1m2 0h2m4 0h1m14 0h2m1 0h1m2 0h1m2 0h1m10 0h1m17 0h1m2 0h1m5 0h1m2 0h1m8 0h1m5 0h1m3 0h1m9 0h2M549 356h1m1 0h2m1 0h6m4 0h2m4 0h2m1 0h1m7 0h2m11 0h2m1 0h1m1 0h1m1 0h3m1 0h1m7 0h1m4 0h3m2 0h2m1 0h3m2 0h2m1 0h2m1 0h8m16 0h4m1 0h1m3 0h3m1 0h1m2 0h3m1 0h3m1 0h1m2 0h1m1 0h1m1 0h2m3 0h1m1 0h1m1 0h1m1 0h1M540 360h1m6 0h1m164 0h1m9 0h1m8 0h3m5 0h1m2 0h1m2 0h1m1 0h2m13 0h1m8 0h1m1 0h2m3 0h1m1 0h1m6 0h1m19 0h1M713 369h1m7 0h1m1 0h1m9 0h1m7 0h1m37 0h1m7 0h1M721 373h1m16 0h1m22 0h2m29 0h1M479 377h1M479 381h1M548 385h1m3 0h2m1 0h1m2 0h2m6 0h1m2 0h1m2 0h1m4 0h1m2 0h2m17 0h2m7 0h2m10 0h1m2 0h2m3 0h2m4 0h1m1 0h1m6 0h1m17 0h3m1 0h1m3 0h1m3 0h1m2 0h1m7 0h2m3 0h3m2 0h3m2 0h1m2 0h3M735 394h1M533 406h1m9 0h1m30 0h1m38 0h1m23 0h2m59 0h1m1 0h1m25 0h1m33 0h1m29 0h1m10 0h1M544 410h1m2 0h1m1 0h1m16 0h2m1 0h1m2 0h1m8 0h2m16 0h1m3 0h1m1 0h1m2 0h2m5 0h2m9 0h1m1 0h1m19 0h1m6 0h1m13 0h1m7 0h1m16 0h1m7 0h2m5 0h2m4 0h1m1 0h2m2 0h1m5 0h2m2 0h1m41 0h1m6 0h1m3 0h1m11 0h1m2 0h1m10 0h2M528 435h3m2 0h2m6 0h1m2 0h2m3 0h1m6 0h1m2 0h2m7 0h1m3 0h2m1 0h1m3 0h1m2 0h3m3 0h2m1 0h2m2 0h2m4 0h1m2 0h1m6 0h1m4 0h1m1 0h1m2 0h1m2 0h1m1 0h3m7 0h2m12 0h1m1 0h2m2 0h2m1 0h1m4 0h1m2 0h1m4 0h2m2 0h2m1 0h2m2 0h1m5 0h1m1 0h1m1 0h1m1 0h2m2 0h1m12 0h1m1 0h1m1 0h2m1 0h2m5 0h1m1 0h3m2 0h3m23 0h1m8 0h3m2 0h1m1 0h1m3 0h1m6 0h4m2 0h2m3 0h1m2 0h1m8 0h2m1 0h1M681 456h1M528 460h4m1 0h1m5 0h2m2 0h1m3 0h1m1 0h3m8 0h2m4 0h1m1 0h1m2 0h4m9 0h2m7 0h1m12 0h2m1 0h1m1 0h3m2 0h1m7 0h6m5 0h2m13 0h1m1 0h3m2 0h1m1 0h1m5 0h1m1 0h2m4 0h1m3 0h4m6 0h1m1 0h2m1 0h1m2 0h2m6 0h1m3 0h1m8 0h2m1 0h2m7 0h3m1 0h2m1 0h1m23 0h2m1 0h4m4 0h2m1 0h2m6 0h2m4 0h1m2 0h1m3 0h7m11 0h1M735 527h1m32 0h1"/><path stroke="#00e4ff" stroke-width="5" d="M22 39.5h1m695 0h1M635 64.5h1M5 89.5h3m7 0h1m14 0h1m6 0h2m15 0h1m25 0h2m4 0h1m25 0h1m3 0h2m5 0h1m1 0h2m19 0h1m4 0h2m1 0h1m24 0h1m9 0h2m23 0h2m28 0h1m4 0h1m12 0h2m11 0h1m18 0h1m6 0h1m45 0h1m3 0h3m2 0h1m11 0h1m10 0h1m15 0h1m17 0h1m23 0h1m8 0h1m14 0h1m3 0h1m12 0h1M2 139.5h1m2 0h1m9 0h1m1 0h1m2 0h1m10 0h1m5 0h1m18 0h1m23 0h2m4 0h1m4 0h1m15 0h1m8 0h1m9 0h1m36 0h1m10 0h1m4 0h1m8 0h2m23 0h1m2 0h1m2 0h1m3 0h1m14 0h1m9 0h3m9 0h1m1 0h3m11 0h1m26 0h1m19 0h1m5 0h1m4 0h1m14 0h1m1 0h2m7 0h1m1 0h1m12 0h1m5 0h1m7 0h2m1 0h1m20 0h1m2 0h1m3 0h1m25 0h2m6 0h2m5 0h1m2 0h2m30 0h1m1 0h1m164 0h1m67 0h1m56 0h1M500 214.5h1M513 314.5h1m1 0h1m3 0h1m1 0h1m68 0h1m168 0h1M771 389.5h1m8 0h1M532 464.5h1m9 0h1m3 0h1m19 0h1m2 0h1m10 0h1m18 0h2m14 0h2m2 0h1m4 0h2m41 0h1m2 0h1m3 0h1m4 0h2m12 0h1m9 0h1m1 0h1m2 0h1m12 0h1m71 0h2m4 0h1m7 0h2"/><path stroke="#00e9ee" stroke-width="4" d="M718 10h1M734 19h1m53 0h1M27 52h1m35 0h3m28 0h1m12 0h1m9 0h1m25 0h1m3 0h1m5 0h1m1 0h1m3 0h1m1 0h1m80 0h1m4 0h1m4 0h1m58 0h1m38 0h1m1 0h1m290 0h1M15 56h1m3 0h1m3 0h1m21 0h1m3 0h1m3 0h1m29 0h1m13 0h1m15 0h1m14 0h1m27 0h2M13 60h1m10 0h1m25 0h2m47 0h1m9 0h1m23 0h1m69 0h3m1 0h2m1 0h1m3 0h1m17 0h3m13 0h3m32 0h3m7 0h4m2 0h1m3 0h1m1 0h1m3 0h1m6 0h1m1 0h1m1 0h1m11 0h1m1 0h2m8 0h4m3 0h1m20 0h1m2 0h2m2 0h1m8 0h1m2 0h1m8 0h1m8 0h1m8 0h1m1 0h1m18 0h2m18 0h1m6 0h1m167 0h2m7 0h1M6 73h1m14 0h1m5 0h1m4 0h1m1 0h1m28 0h1m9 0h1m12 0h1m3 0h1m1 0h2m7 0h2m4 0h1m2 0h1m9 0h1m14 0h1m3 0h1m1 0h1m6 0h1m2 0h1m8 0h2m2 0h1m25 0h1m35 0h1m2 0h1m14 0h2m2 0h1m6 0h1m1 0h1m45 0h2m5 0h1m2 0h1m7 0h1m47 0h1m1 0h2m262 0h1M634 77h1m8 0h1M3 85h1m1 0h3m7 0h3m3 0h4m5 0h1m4 0h4m10 0h4m1 0h3m2 0h1m21 0h1m3 0h1m2 0h1m1 0h4m7 0h1m1 0h1m1 0h3m2 0h3m5 0h1m3 0h5m16 0h1m1 0h1m4 0h3m1 0h1m7 0h2m9 0h2m4 0h2m9 0h1m9 0h1m8 0h1m3 0h3m3 0h1m3 0h3m12 0h2m4 0h1m3 0h3m7 0h4m1 0h1m8 0h2m1 0h1m7 0h1m4 0h3m2 0h2m5 0h2m1 0h1m1 0h1m17 0h1m10 0h2m10 0h2m1 0h5m2 0h1m1 0h4m5 0h3m1 0h1m3 0h1m3 0h2m6 0h1m3 0h5m16 0h2m6 0h4m9 0h1m7 0h1m3 0h3m6 0h1m4 0h1m2 0h4m10 0h3M492 123h1m3 0h1m234 0h2m36 0h1m18 0h1M605 127h1m29 0h1m27 0h1M11 135h1m2 0h1m4 0h1m6 0h1m15 0h2m3 0h1m15 0h1m8 0h2m2 0h2m6 0h1m2 0h1m7 0h1m2 0h1m3 0h1m17 0h1m10 0h1m15 0h1m10 0h2m8 0h1m7 0h1m25 0h3m12 0h1m17 0h1m4 0h1m4 0h1m1 0h1m20 0h1m27 0h1m2 0h1m9 0h1m2 0h2m2 0h1m5 0h1m5 0h1m13 0h3m10 0h1m29 0h1m2 0h1m7 0h1m2 0h2m7 0h1m10 0h1m5 0h2m2 0h2m13 0h1m4 0h1m2 0h1m5 0h1m8 0h2m2 0h2m2 0h1m115 0h1m23 0h1m49 0h1m46 0h1m18 0h1m4 0h1m2 0h1m12 0h1m12 0h1M605 152h2m111 0h1m51 0h1m16 0h1M624 198h1M625 202h1M411 206h1m395 0h1M500 210h2M501 227h1m6 0h1m1 0h1M222 231h1m277 0h1m3 0h2M23 235h1m198 0h1m188 0h1m70 0h1M660 256h1m107 0h1m41 0h1M565 277h1m203 0h1m3 0h1M548 335h2m1 0h2m9 0h3m1 0h1m7 0h3m1 0h2m1 0h1m11 0h2m1 0h2m2 0h2m3 0h2m2 0h1m2 0h3m10 0h1m1 0h2m2 0h1m1 0h5m1 0h2m3 0h1m17 0h1m2 0h1m1 0h3m4 0h4m2 0h1m3 0h2m5 0h1m3 0h3m1 0h3m2 0h1M550 356h1m11 0h2m2 0h3m6 0h2m1 0h1m4 0h1m8 0h2m2 0h1m7 0h1m1 0h2m4 0h1m1 0h1m6 0h2m2 0h1m41 0h2m11 0h1m3 0h1m1 0h2m10 0h1m1 0h1M428 360h1m276 0h1m5 0h1m26 0h1m2 0h1m4 0h1m25 0h1m19 0h2m12 0h1M722 369h1m48 0h1m6 0h1m1 0h1M547 373h1m257 0h1M770 377h1m17 0h1M549 385h1m1 0h1m5 0h1m4 0h3m5 0h1m2 0h2m4 0h1m14 0h2m1 0h2m3 0h3m20 0h3m2 0h4m5 0h4m1 0h1m19 0h1m2 0h2m1 0h1m3 0h2m1 0h1m1 0h1m2 0h2m3 0h2m3 0h2m3 0h2m2 0h1M734 394h1M511 402h4m1 0h2m1 0h1m1 0h1m2 0h1M538 406h1m18 0h1m5 0h1m19 0h2m6 0h1m30 0h1m20 0h1m14 0h1m29 0h1m77 0h1m33 0h1m2 0h1M540 410h1m1 0h1m3 0h1m12 0h2m14 0h1m2 0h1m1 0h1m7 0h2m2 0h1m25 0h2m41 0h1m5 0h2m1 0h2m2 0h1m3 0h1m6 0h1m25 0h1m1 0h1m10 0h2m4 0h1m31 0h1m7 0h1m6 0h1m1 0h1m13 0h1m12 0h1M546 435h1m1 0h1m3 0h1m13 0h2m10 0h1m1 0h2m11 0h1m4 0h3m2 0h1m1 0h1m2 0h2m7 0h1m1 0h2m4 0h1m22 0h2m1 0h1m2 0h2m4 0h2m4 0h1m1 0h4m2 0h1m3 0h1m6 0h1m8 0h1m7 0h2m1 0h1m2 0h1m1 0h2m3 0h1m2 0h1m5 0h2m5 0h1m30 0h1m2 0h1m5 0h2m4 0h2m1 0h1m4 0h1m8 0h3m8 0h2M563 456h1m13 0h1m80 0h1m107 0h1M532 460h1m1 0h1m6 0h1m4 0h1m1 0h1m3 0h1m3 0h1m2 0h1m7 0h1m7 0h1m2 0h5m5 0h2m2 0h1m5 0h3m2 0h3m2 0h1m6 0h1m1 0h4m27 0h1m6 0h1m5 0h1m4 0h1m2 0h1m1 0h1m14 0h1m6 0h1m8 0h1m6 0h1m1 0h2m2 0h1m2 0h1m2 0h1m3 0h1m1 0h1m3 0h1m2 0h1m33 0h2m2 0h1m4 0h2m1 0h1m3 0h2m3 0h1m3 0h1m11 0h6M774 527h1M509 535h1M735 548h1m38 0h1"/><path stroke="#00e9ee" stroke-width="5" d="M634 14.5h1M426 39.5h1m72 0h1m105 0h1m28 0h1M634 64.5h1M3 89.5h1m270 0h1m1 0h1m25 0h1m75 0h1M1 139.5h1m37 0h1m45 0h1m31 0h1m121 0h1m34 0h2m25 0h2m53 0h1m21 0h3m13 0h2m41 0h1m39 0h1M488 164.5h1M516 314.5h1m3 0h1m35 0h1m8 0h1m17 0h1m26 0h1m49 0h1m107 0h1M770 389.5h1M709 464.5h3m64 0h1m1 0h1"/><path stroke="#00efdd" stroke-width="4" d="M496 19h1m2 0h1m106 0h1m56 0h1m68 0h1m37 0h1M34 52h1m22 0h1m29 0h3m2 0h1m7 0h1m1 0h3m1 0h1m3 0h1m22 0h1m1 0h3m2 0h1m1 0h1m11 0h1m7 0h1m58 0h1m1 0h1m2 0h2m8 0h1m1 0h1m16 0h1m3 0h1m88 0h2m58 0h1M3 56h2m7 0h1m24 0h1m8 0h1m19 0h1m10 0h2m2 0h1m3 0h1m10 0h1m14 0h1m3 0h1m5 0h1m1 0h1m2 0h1m2 0h1m22 0h1m481 0h2m7 0h1M16 60h1m152 0h2m20 0h1m3 0h1m1 0h1m8 0h1m2 0h1m1 0h1m12 0h1m5 0h1m4 0h1m17 0h1m2 0h1m4 0h3m6 0h2m1 0h1m27 0h1m5 0h1m2 0h1m4 0h1m5 0h1m5 0h2m4 0h1m40 0h1m14 0h1m2 0h1m6 0h1m1 0h1m17 0h1m1 0h1m20 0h1m1 0h1m10 0h4m3 0h1m1 0h1M634 69h1M29 73h1m6 0h1m6 0h1m10 0h2m2 0h1m11 0h3m1 0h1m24 0h2m2 0h1m5 0h1m8 0h2m11 0h1m6 0h1m4 0h1m6 0h1m8 0h1m2 0h2m27 0h1m2 0h1m35 0h1m18 0h2m5 0h1m40 0h1m10 0h1m3 0h1m5 0h1m56 0h1m33 0h1M635 77h1M1 85h2m28 0h1m7 0h1m40 0h1m5 0h1m29 0h2m70 0h2m26 0h1m45 0h1m1 0h1m9 0h1m1 0h1m25 0h1m59 0h1m15 0h1m2 0h1m55 0h1M665 127h1m104 0h1M0 135h1m12 0h1m9 0h1m1 0h1m2 0h1m4 0h1m6 0h1m3 0h1m8 0h1m3 0h2m6 0h1m1 0h2m14 0h1m12 0h1m4 0h1m1 0h2m27 0h2m2 0h2m1 0h1m8 0h2m3 0h1m1 0h3m8 0h2m7 0h1m2 0h1m4 0h2m2 0h1m4 0h2m2 0h1m4 0h1m16 0h1m10 0h2m3 0h1m16 0h1m5 0h1m24 0h2m7 0h1m3 0h1m14 0h1m4 0h1m2 0h1m5 0h1m1 0h2m9 0h4m43 0h1m1 0h1m16 0h3m4 0h2m2 0h2m1 0h2m23 0h2m7 0h1m40 0h1m113 0h1m56 0h1m105 0h1M731 152h2M732 181h1M627 198h1m173 0h1M501 202h1m7 0h2m134 0h1M509 206h2M502 210h1m6 0h1M222 227h1m188 0h1m88 0h1m29 0h1M23 231h1m387 0h1m112 0h1M483 256h1m2 0h1m22 0h1m18 0h1m1 0h2m24 0h1m6 0h1m46 0h1m20 0h1m103 0h1m33 0h1m38 0h1M610 277h1M517 285h1m1 0h2M517 302h1m3 0h1M550 335h1m14 0h1m1 0h2m2 0h1m11 0h1m20 0h1m13 0h5m7 0h1m10 0h2m20 0h1m2 0h1m4 0h1m6 0h2m3 0h1m6 0h1m2 0h1m4 0h1M466 360h1M547 369h1M528 377h1m240 0h1M788 381h1M550 385h1m3 0h1m1 0h1m8 0h1m1 0h2m2 0h1m3 0h2m1 0h1m3 0h2m8 0h1m3 0h1m4 0h1m3 0h3m4 0h2m4 0h2m1 0h2m14 0h1m28 0h1m4 0h1m6 0h1m1 0h2m4 0h1m13 0h1M505 402h3m1 0h2m4 0h1m2 0h1m1 0h1m1 0h2m1 0h2m49 0h1m105 0h1M537 406h1m57 0h1m1 0h1m16 0h1m60 0h2m35 0h1m20 0h1m39 0h1M532 410h1m67 0h1m23 0h1m54 0h1m6 0h1m6 0h1m11 0h1m59 0h1m6 0h1m5 0h1m6 0h1M532 435h1m7 0h1m1 0h1m4 0h1m21 0h1m45 0h1m70 0h1m17 0h1m4 0h1m3 0h1m7 0h1m5 0h1m48 0h1m7 0h1m14 0h1m7 0h2M803 444h1M761 448h1M536 456h3m26 0h1m20 0h1m36 0h1m20 0h1m37 0h1m17 0h1M542 460h1m26 0h1m79 0h1m20 0h1m3 0h1m10 0h1m8 0h1m9 0h2m2 0h1m1 0h1m2 0h2m9 0h1m51 0h1m2 0h1M591 527h1"/><path stroke="#00efdd" stroke-width="5" d="M427 39.5h1m52 0h1m17 0h1m144 0h1m87 0h2m1 0h1m53 0h1M426 64.5h1m55 0h1M489 164.5h1m2 0h1M502 214.5h1m21 0h1M512 314.5h1m1 0h1m2 0h1m45 0h1m47 0h1m106 0h1M466 364.5h1M735 389.5h1M760 439.5h1m8 0h1m1 0h2"/><path stroke="#00f4cc" stroke-width="4" d="M634 10h1M5 52h3m8 0h1m4 0h1m6 0h1m3 0h2m7 0h1m9 0h1m2 0h1m15 0h3m13 0h1m4 0h1m46 0h1m11 0h1m12 0h1m52 0h1m11 0h1m8 0h1m5 0h2m6 0h1m6 0h1m55 0h1m36 0h1m15 0h2m3 0h1M1 56h1m6 0h1m1 0h1m7 0h1m29 0h1m27 0h1m2 0h2m1 0h1m1 0h1m31 0h1m13 0h1m15 0h1m8 0h1m2 0h1m190 0h1M0 60h1m6 0h1m17 0h1m2 0h1m12 0h1m141 0h1m8 0h3m1 0h1m3 0h1m11 0h1m12 0h1m5 0h1m8 0h2m12 0h1m9 0h3m5 0h1m17 0h1m11 0h1m3 0h1m10 0h1m8 0h1m2 0h2m9 0h2m38 0h1m4 0h1m4 0h1m15 0h2m5 0h1m1 0h1m9 0h1m4 0h1m12 0h1m7 0h3m9 0h1m1 0h1M30 73h1m2 0h1m1 0h1m3 0h2m9 0h2m7 0h1m27 0h2m9 0h1m33 0h1m59 0h1m31 0h1m6 0h4m64 0h1m2 0h1m3 0h1m2 0h1m5 0h1m1 0h1m1 0h2m21 0h1m19 0h2m2 0h1m7 0h1m1 0h1m58 0h2m1 0h1m195 0h1M605 131h1m29 0h1m29 0h1M8 135h3m1 0h1m7 0h1m1 0h1m4 0h1m4 0h1m1 0h2m9 0h1m3 0h1m1 0h1m3 0h1m3 0h1m6 0h1m2 0h1m5 0h1m6 0h1m6 0h2m1 0h1m1 0h1m10 0h1m4 0h1m16 0h1m1 0h1m10 0h2m18 0h1m18 0h1m2 0h1m3 0h1m7 0h1m13 0h2m3 0h2m4 0h1m11 0h1m4 0h1m13 0h1m1 0h5m1 0h4m7 0h4m8 0h1m7 0h1m2 0h1m12 0h1m1 0h1m17 0h1m4 0h1m14 0h1m3 0h2m6 0h1m1 0h1m3 0h2m4 0h2m3 0h1m1 0h2m12 0h1m2 0h1m28 0h1m1 0h1m9 0h3m1 0h1m1 0h1m12 0h1m6 0h1m1 0h1m34 0h1m136 0h2M492 152h1m4 0h1m271 0h1M480 181h1m9 0h1m3 0h1m95 0h1m140 0h1m1 0h1M426 198h1m203 0h1m11 0h1m159 0h1M500 202h1m135 0h1m4 0h1M501 206h1M499 227h1m2 0h2m20 0h1M507 231h1M480 235h1M549 252h1m2 0h1M480 256h1m4 0h1m13 0h1m1 0h1m1 0h1m4 0h1m14 0h1m1 0h2m2 0h1m17 0h1m6 0h1m74 0h2m12 0h1m157 0h1m4 0h2m3 0h2M481 277h1m3 0h1m1 0h1m8 0h4m1 0h1m1 0h1m1 0h3m1 0h2m19 0h2m79 0h1m11 0h1m5 0h1m1 0h1m1 0h2m6 0h1m160 0h1m2 0h2m1 0h3M512 285h1m2 0h2m4 0h1M552 302h1M521 306h1M582 335h1m9 0h1m14 0h1m30 0h1m42 0h1m4 0h2M734 356h1M426 373h1M499 377h1m25 0h1M525 381h1M426 385h1m166 0h1m20 0h1m23 0h1M788 394h1M530 406h1m4 0h2m2 0h1m5 0h1m3 0h2m20 0h1m14 0h1m7 0h1m1 0h1m14 0h1m17 0h1m6 0h1m8 0h3m3 0h1m4 0h1m7 0h2m17 0h1m12 0h2m20 0h1m4 0h1m4 0h1m3 0h1m26 0h1m3 0h1m17 0h3m20 0h1m6 0h1M617 410h1m31 0h1m54 0h1m3 0h1m67 0h1m30 0h1M766 444h1M577 448h1m204 0h1M658 452h1m40 0h1M531 456h1m1 0h1m11 0h1m15 0h1m14 0h1m7 0h1m2 0h1m3 0h1m9 0h1m4 0h2m21 0h1m6 0h1m1 0h1m7 0h1m6 0h1m10 0h2m6 0h1m2 0h1m7 0h1m6 0h2m4 0h1m2 0h1m1 0h1m14 0h1m3 0h1m1 0h1m9 0h1m27 0h1m3 0h1m24 0h1m1 0h1m3 0h1m6 0h2m8 0h1M768 523h1M504 527h1M504 544h1M504 548h1M504 552h1"/><path stroke="#00f4cc" stroke-width="5" d="M165 14.5h1M222 39.5h1m546 0h1M480 64.5h1M503 214.5h5M554 314.5h1M426 389.5h1m342 0h1M505 464.5h1"/><path stroke="#00fabb" stroke-width="4" d="M635 10h1M29 52h1m5 0h2m2 0h2m2 0h1m6 0h1m8 0h1m33 0h1m7 0h1m7 0h1m29 0h1m1 0h1m48 0h2m41 0h2m10 0h1m52 0h1m4 0h2m8 0h1m4 0h2m50 0h2m2 0h1m92 0h1m166 0h1M9 56h1m1 0h1m5 0h1m8 0h1m20 0h1m8 0h1m7 0h1m4 0h1m5 0h1m28 0h2m2 0h1m13 0h1m1 0h1m2 0h1m7 0h2m11 0h1m4 0h1m5 0h1m68 0h1m10 0h1m11 0h1m98 0h1M2 60h1m28 0h1m6 0h1m142 0h1m16 0h2m1 0h1m58 0h1m6 0h1m23 0h1m8 0h1m30 0h1m41 0h1m8 0h1m3 0h1m8 0h1m1 0h1m16 0h1m1 0h2m5 0h1m4 0h2m4 0h1m6 0h1m7 0h2m23 0h1m1 0h1m4 0h1M488 69h1m154 0h1M42 73h1m90 0h1m59 0h1m1 0h1m6 0h5m1 0h2m3 0h4m8 0h1m9 0h1m17 0h2m5 0h1m2 0h1m7 0h1m9 0h5m9 0h1m5 0h1m5 0h1m8 0h1m16 0h1m1 0h1m7 0h5m13 0h1m15 0h3m12 0h1m6 0h1m37 0h1m1 0h1m16 0h1m1 0h1m3 0h1m3 0h2m2 0h1M15 81h3m18 0h2m11 0h2m10 0h1m4 0h1m29 0h3m9 0h1m2 0h1m1 0h1m6 0h1m1 0h1m48 0h1m4 0h1m1 0h2m3 0h1m13 0h1m1 0h2m6 0h3m6 0h3m2 0h1m5 0h4m15 0h1m1 0h1m6 0h3m3 0h3m11 0h3m4 0h3m8 0h1m21 0h3m6 0h3m8 0h1m7 0h1m1 0h2m32 0h4m4 0h3m18 0h2m10 0h1m24 0h1m2 0h2m3 0h2m4 0h3m18 0h3m2 0h2m1 0h1m18 0h1m1 0h1m13 0h1m10 0h1m1 0h1m15 0h1m1 0h1m12 0h2m7 0h1m1 0h1m12 0h3m7 0h1m16 0h3m25 0h1m8 0h2m1 0h1m12 0h1m4 0h1m34 0h2m5 0h1m4 0h1m2 0h1m2 0h1m1 0h1m6 0h1m1 0h4m2 0h3m4 0h3m6 0h2M383 131h1m108 0h1m4 0h1m27 0h1m80 0h1m56 0h1m106 0h1m17 0h1M4 135h3m8 0h2m4 0h1m2 0h1m4 0h1m9 0h1m6 0h1m3 0h1m1 0h1m1 0h1m31 0h1m4 0h1m14 0h2m3 0h1m11 0h1m1 0h1m2 0h1m9 0h1m4 0h1m1 0h1m5 0h2m8 0h1m9 0h1m1 0h2m5 0h1m4 0h1m4 0h1m4 0h1m14 0h1m4 0h1m4 0h1m2 0h3m11 0h1m1 0h1m8 0h2m23 0h1m14 0h1m1 0h1m2 0h1m10 0h1m1 0h1m1 0h1m20 0h1m5 0h1m12 0h1m9 0h1m1 0h1m7 0h1m2 0h3m1 0h1m36 0h1m7 0h1m2 0h1m7 0h3m5 0h1m7 0h1m11 0h1m1 0h1m1 0h1m2 0h1m9 0h1M496 152h1m1 0h1m135 0h2m27 0h1m1 0h1M426 177h1m216 0h1M482 181h1m4 0h2m2 0h1m1 0h1m1 0h1m93 0h1M589 194h1m141 0h2M617 198h1m18 0h1M499 202h1m2 0h1m305 0h1M645 206h1m165 0h1M505 227h1M506 231h1M479 256h1m4 0h1m2 0h2m5 0h3m1 0h1m1 0h1m4 0h3m2 0h2m12 0h1m86 0h1m20 0h3m4 0h4m1 0h1m114 0h1m42 0h2m1 0h1m3 0h1M479 277h2m1 0h3m1 0h1m1 0h2m4 0h2m4 0h1m1 0h1m1 0h1m3 0h1m2 0h1m10 0h8m100 0h1m1 0h1m6 0h2m1 0h3m156 0h1m1 0h2m2 0h1m3 0h2M513 285h2m3 0h1M514 302h3m3 0h1M519 306h2M563 310h1M734 373h1m35 0h1M734 377h1M490 381h1m8 0h1M499 385h1M769 394h1M528 402h1m1 0h1m4 0h4m4 0h1m5 0h1m8 0h1m5 0h1m6 0h1m2 0h1m8 0h3m1 0h1m2 0h2m1 0h2m1 0h2m4 0h1m3 0h1m3 0h2m1 0h2m6 0h1m4 0h2m7 0h1m1 0h2m6 0h3m3 0h2m6 0h1m5 0h1m3 0h1m3 0h1m2 0h1m10 0h2m2 0h1m3 0h4m2 0h1m5 0h1m10 0h2m2 0h1m3 0h1m1 0h2m3 0h2m24 0h1m1 0h1m1 0h2m3 0h2m3 0h2m6 0h3m2 0h6m3 0h1m2 0h1m1 0h4m8 0h1M562 406h1m1 0h2m4 0h1m14 0h1m1 0h1m19 0h1m2 0h1m14 0h1m2 0h1m23 0h1m7 0h1m11 0h2m13 0h1m1 0h1m29 0h1m2 0h1m38 0h1m7 0h1m16 0h3m3 0h1M759 448h1m6 0h1M545 452h1m15 0h1m1 0h1m7 0h1m14 0h1m58 0h1m18 0h2m6 0h1m9 0h1m17 0h1m21 0h1m37 0h1m42 0h2M529 456h1m5 0h1m3 0h1m3 0h1m5 0h1m7 0h1m4 0h1m7 0h2m2 0h1m8 0h1m1 0h1m8 0h2m6 0h1m7 0h1m1 0h3m7 0h1m4 0h1m9 0h1m5 0h1m1 0h1m1 0h1m4 0h1m4 0h1m2 0h1m12 0h1m2 0h1m7 0h1m2 0h2m9 0h1m7 0h2m15 0h1m2 0h1m1 0h1m4 0h1m27 0h1m1 0h1m3 0h1m5 0h1m7 0h1m1 0h1m8 0h1m4 0h2m2 0h1m2 0h1M524 460h1M513 485h1M504 535h1M509 544h1M509 552h1"/><path stroke="#00fabb" stroke-width="5" d="M410 14.5h1m15 0h2m69 0h1m1 0h1m233 0h1M488 39.5h1m146 0h1m135 0h1m17 0h1M410 64.5h1m195 0h1m111 0h1m12 0h1M164 364.5h1"/><path stroke="#00ffaa" stroke-width="4" d="M480 44h1M30 52h2m10 0h1m15 0h1m14 0h2m23 0h2m18 0h2m11 0h2m18 0h1m12 0h1m28 0h2m8 0h1m3 0h1m1 0h2m1 0h1m2 0h1m8 0h2m3 0h2m15 0h1m1 0h1m48 0h1m7 0h1m2 0h2m2 0h1m4 0h1m2 0h2m47 0h1m5 0h1m82 0h1m7 0h1m20 0h1M6 56h1m14 0h1m5 0h1m29 0h1m5 0h1m1 0h1m2 0h1m21 0h1m3 0h1m11 0h2m9 0h1m2 0h1m16 0h1m11 0h1m4 0h1m68 0h1m2 0h2m14 0h1m9 0h1m2 0h1m92 0h1m18 0h1m40 0h1m309 0h1M166 60h1m8 0h1m2 0h1m3 0h1m1 0h1m4 0h1m27 0h4m71 0h1m43 0h1m1 0h2m41 0h1m28 0h3m9 0h1m3 0h1m4 0h1m39 0h3m1 0h1m10 0h2M165 69h1m244 0h1m252 0h1M169 73h2m25 0h1m1 0h1m2 0h1m5 0h1m2 0h3m27 0h2m19 0h2m1 0h1m1 0h2m2 0h1m1 0h2m19 0h2m1 0h1m3 0h1m25 0h1m1 0h2m2 0h1m1 0h1m38 0h1m7 0h1m3 0h7m8 0h2m4 0h2m5 0h1m2 0h6m3 0h1m3 0h1m10 0h3m1 0h1m5 0h1m1 0h1m2 0h1m1 0h1m1 0h1m3 0h3M486 77h1m1 0h1M74 131h1m3 0h1m20 0h1m34 0h2m29 0h1m6 0h1m229 0h1m53 0h3m11 0h2m24 0h1m167 0h1m53 0h1m12 0h1m37 0h1M2 135h1m14 0h1m12 0h1m5 0h3m17 0h1m23 0h1m7 0h1m23 0h1m5 0h1m3 0h1m1 0h1m1 0h1m15 0h1m1 0h1m1 0h1m3 0h1m3 0h1m7 0h2m17 0h1m6 0h1m49 0h1m5 0h1m17 0h3m29 0h1m5 0h1m2 0h1m19 0h1m10 0h1m11 0h1m4 0h3m7 0h2m4 0h1m10 0h1m1 0h2m5 0h1m1 0h1m1 0h2m1 0h1m18 0h1m2 0h1m4 0h1m19 0h1m12 0h2m8 0h1m12 0h1M60 156h1m3 0h1m5 0h2m1 0h1m4 0h2m19 0h2m13 0h1m20 0h1m28 0h1m32 0h1m1 0h1m4 0h1m22 0h2m4 0h1m7 0h1m3 0h1m20 0h1m1 0h1m8 0h1m2 0h1m18 0h1m19 0h3m9 0h3m31 0h1m17 0h1m16 0h1m1 0h1m25 0h1m20 0h1m8 0h1M590 194h1m142 0h1M645 198h1m88 0h1m6 0h2m57 0h1m10 0h1M503 202h1M499 206h1m2 0h1m297 0h1M482 227h1m2 0h1m2 0h1m1 0h2m2 0h1m9 0h1M583 252h1M481 256h2m6 0h1m7 0h1m4 0h1m1 0h1m17 0h1m4 0h1m276 0h1M515 298h1m1 0h2m33 0h1M513 302h1m4 0h2M512 306h1m1 0h1m2 0h2M525 356h1m209 0h1m33 0h1M479 373h1M490 377h1m244 0h1M528 381h1m240 0h1M479 385h1m10 0h1m37 0h1M528 394h1M529 402h1m1 0h4m7 0h1m1 0h1m5 0h2m4 0h1m2 0h1m6 0h3m3 0h2m4 0h5m5 0h2m8 0h1m1 0h1m3 0h2m2 0h1m3 0h1m3 0h5m1 0h1m2 0h1m2 0h1m7 0h1m11 0h3m2 0h5m2 0h1m5 0h1m1 0h1m1 0h2m5 0h4m9 0h1m1 0h1m9 0h1m3 0h1m4 0h4m1 0h1m3 0h1m3 0h1m2 0h1m2 0h3m2 0h1m26 0h1m4 0h1m2 0h2m3 0h1m1 0h1m1 0h2m3 0h2m6 0h3m1 0h2m8 0h2m1 0h3M531 406h1m9 0h1m2 0h1m7 0h1m5 0h1m8 0h1m22 0h1m1 0h1m13 0h1m14 0h1m4 0h1m8 0h1m21 0h1m11 0h1m25 0h1m11 0h1m12 0h1m10 0h1m2 0h1m29 0h1m6 0h1m3 0h1m21 0h2m6 0h1M760 444h1M586 448h1m77 0h1m17 0h1m1 0h1m82 0h1m5 0h3m7 0h1m18 0h1m1 0h1M533 452h1m1 0h1m2 0h2m24 0h1m22 0h1m35 0h1m13 0h1m5 0h2m1 0h1m34 0h1m1 0h1m3 0h2m7 0h1m4 0h1m18 0h1m38 0h1m1 0h1m35 0h1m2 0h1M530 456h1m10 0h1m9 0h2m5 0h1m5 0h1m7 0h2m16 0h1m2 0h1m2 0h2m13 0h1m9 0h1m4 0h1m1 0h1m6 0h1m14 0h2m4 0h1m11 0h1m8 0h1m2 0h1m8 0h1m2 0h1m2 0h1m1 0h1m5 0h1m8 0h1m4 0h2m11 0h1m3 0h1m24 0h1m11 0h1m2 0h2m6 0h1m3 0h2m2 0h1m5 0h1m3 0h1m5 0h1m3 0h2M505 460h1M521 485h1M774 519h1M774 523h1"/><path stroke="#00ffaa" stroke-width="5" d="M222 14.5h1m273 0h1m168 0h1M165 39.5h1m330 0h1m109 0h1m126 0h1m53 0h1M22 64.5h1m476 0h1M528 389.5h1M765 439.5h1M504 539.5h1m4 0h1"/><path stroke="#00ff8a" stroke-width="4" d="M481 44h2M481 48h1m6 0h1m154 0h1M55 52h1m139 0h1m6 0h1m1 0h3m6 0h2m34 0h2m3 0h1m1 0h2m41 0h1m6 0h1m3 0h1m5 0h1m59 0h1m78 0h2m6 0h1m24 0h1m146 0h1M29 56h1m2 0h1m54 0h2m2 0h1m1 0h1m6 0h1m2 0h1m34 0h1m8 0h1m12 0h2m59 0h1m16 0h1m4 0h2m2 0h1m11 0h1m51 0h1m2 0h1m53 0h1M167 60h1m5 0h1m3 0h1m8 0h1m1 0h1m79 0h1m18 0h3m47 0h1m18 0h1m7 0h2m17 0h1m9 0h2m1 0h1m1 0h1m25 0h1m7 0h2m43 0h3M480 69h1m1 0h1m3 0h1m11 0h1m165 0h1m105 0h1m16 0h1M0 73h1m24 0h1m2 0h1m9 0h1m142 0h4m12 0h1m1 0h2m17 0h2m45 0h1m24 0h3m34 0h1m2 0h2m4 0h3m1 0h2m38 0h1m1 0h1m10 0h1m17 0h2m1 0h2m6 0h2m4 0h1m1 0h1m3 0h1m8 0h1m5 0h1m1 0h1m1 0h1m17 0h2m14 0h1M12 81h1m7 0h1m1 0h2m15 0h1m7 0h1m21 0h1m1 0h1m8 0h1m18 0h2m4 0h3m6 0h1m1 0h1m6 0h1m1 0h1m6 0h1m1 0h1m3 0h1m1 0h1m4 0h1m10 0h2m11 0h2m52 0h1m25 0h3m29 0h1m19 0h2m1 0h2m5 0h1m6 0h1m8 0h2m2 0h2m15 0h2m13 0h1m10 0h1m16 0h2m2 0h1m6 0h1m1 0h1m2 0h1m57 0h1m1 0h1m4 0h2m1 0h3m1 0h1m13 0h3m1 0h1m6 0h1m1 0h1m9 0h1m2 0h3m15 0h3m15 0h2m7 0h1m1 0h1m8 0h1m31 0h1m27 0h1m12 0h2m16 0h2m4 0h1m1 0h1m11 0h1m1 0h2m2 0h2m5 0h3m12 0h1m1 0h1m33 0h2m6 0h1m1 0h2m18 0h1m1 0h1m16 0h2m1 0h2m1 0h5M42 131h1m17 0h1m2 0h2m7 0h2m5 0h1m20 0h1m12 0h1m6 0h2m31 0h1m4 0h1m5 0h1m3 0h1m8 0h1m20 0h1m6 0h3m3 0h1m5 0h1m3 0h2m3 0h2m5 0h1m7 0h2m3 0h1m18 0h2m1 0h1m9 0h3m3 0h2m1 0h1m11 0h1m18 0h4m9 0h2m21 0h1m10 0h2m15 0h1m14 0h1m3 0h1m7 0h1m18 0h1m1 0h1m17 0h2m17 0h1m6 0h1m4 0h1m18 0h1m135 0h1m97 0h2m53 0h1M1 135h1m1 0h1m3 0h1m23 0h1m49 0h1m3 0h1m7 0h1m95 0h1m10 0h1m15 0h1m57 0h3m24 0h2m44 0h1m8 0h1m38 0h1m49 0h2m18 0h1m12 0h1M0 156h1m10 0h1m1 0h2m3 0h1m6 0h2m14 0h3m3 0h2m8 0h1m3 0h3m3 0h2m3 0h1m1 0h1m7 0h1m4 0h1m8 0h3m9 0h2m3 0h1m1 0h1m3 0h3m8 0h2m2 0h1m12 0h1m10 0h1m6 0h6m1 0h1m2 0h3m13 0h1m6 0h1m3 0h2m1 0h3m3 0h2m4 0h2m2 0h2m3 0h1m5 0h1m7 0h1m1 0h2m2 0h2m17 0h1m1 0h1m10 0h2m4 0h4m7 0h4m12 0h1m1 0h2m1 0h2m4 0h1m3 0h1m1 0h1m7 0h2m3 0h1m12 0h2m10 0h1m15 0h1m2 0h2m9 0h4m1 0h1m1 0h1m2 0h4m1 0h1m2 0h2m1 0h3m5 0h3m1 0h2m7 0h1m3 0h2m4 0h1m1 0h3m3 0h2m9 0h1m1 0h6m4 0h1M611 177h1M481 181h1m7 0h1M164 198h1m262 0h1m54 0h1m4 0h1m5 0h1m1 0h1m115 0h1m200 0h1M504 202h1m3 0h1m113 0h1m19 0h1m166 0h1M500 206h1m7 0h1M499 210h1m4 0h2m2 0h1M480 227h1m3 0h1m2 0h1m5 0h1m1 0h1m11 0h1M699 252h1M512 298h3m4 0h2m139 0h1M512 302h1m70 0h1M515 306h2M552 310h1m1 0h1M426 360h1M426 369h1M490 373h1m8 0h1m25 0h1M770 381h1M770 394h1M540 402h2m4 0h3m3 0h1m7 0h1m8 0h1m5 0h1m16 0h1m6 0h1m3 0h1m5 0h1m5 0h1m8 0h1m36 0h1m5 0h1m6 0h1m10 0h2m6 0h2m8 0h3m2 0h3m4 0h1m1 0h1m3 0h1m3 0h1m39 0h1m6 0h1m5 0h1m20 0h1m5 0h1m2 0h1M528 406h2m18 0h1m19 0h1m3 0h1m2 0h1m2 0h1m25 0h1m4 0h1m2 0h1m37 0h1m2 0h1m5 0h1m7 0h1m6 0h1m2 0h1m12 0h1m15 0h1m6 0h1m2 0h2m50 0h1m3 0h1m1 0h1m14 0h1m1 0h1m14 0h1M543 448h1m1 0h1m15 0h1m2 0h1m22 0h1m6 0h2m33 0h1m70 0h2m58 0h1m2 0h1m5 0h1m11 0h1m5 0h1m2 0h2m3 0h1m1 0h2m4 0h1M531 452h1m4 0h1m6 0h1m21 0h1m4 0h1m2 0h1m2 0h2m13 0h1m3 0h1m5 0h1m11 0h1m8 0h1m13 0h1m1 0h1m8 0h1m4 0h1m20 0h1m1 0h3m19 0h2m17 0h1m6 0h1m39 0h1m2 0h1m6 0h2m8 0h1m8 0h1m2 0h1m2 0h1m2 0h2M534 456h1m9 0h1m3 0h1m1 0h1m5 0h1m9 0h1m1 0h1m12 0h1m6 0h2m10 0h1m3 0h2m9 0h1m1 0h3m29 0h1m9 0h1m7 0h1m1 0h1m4 0h1m27 0h1m11 0h2m3 0h1m9 0h1m5 0h1m26 0h1m7 0h1m6 0h2m5 0h1m3 0h1m4 0h1M535 473h1m2 0h1m23 0h1m23 0h1m56 0h1m38 0h1m18 0h1m59 0h1m28 0h1m11 0h1M512 485h1m2 0h2m5 0h1M591 519h1M735 523h1M513 531h1m7 0h1"/><path stroke="#00ff8a" stroke-width="5" d="M732 14.5h1M481 39.5h1m181 0h1m106 0h1M486 64.5h2m10 0h1m165 0h1m68 0h2m34 0h1M530 214.5h1M525 389.5h1M524 464.5h1"/><path stroke="#00ff6b" stroke-width="4" d="M38 52h1m153 0h1m15 0h1m2 0h1m20 0h1m2 0h1m4 0h1m66 0h1m7 0h1m93 0h1m47 0h1m6 0h2m4 0h1m247 0h1M5 56h1m28 0h2m36 0h1m1 0h1m11 0h1m2 0h1m2 0h1m8 0h2m7 0h1m22 0h1m5 0h2m9 0h1m11 0h1m67 0h1m3 0h1m1 0h2m7 0h1m59 0h1m7 0h1m7 0h1m29 0h2m16 0h2m1 0h1M168 60h1m2 0h1m2 0h1m1 0h1m3 0h1m4 0h1m1 0h1m81 0h1m16 0h1m36 0h1m29 0h2m4 0h2m41 0h1m1 0h2m39 0h2m1 0h1m11 0h2m6 0h1m28 0h1M222 69h1m509 0h1M24 73h1m16 0h1m125 0h1m5 0h1m1 0h4m1 0h1m7 0h2m27 0h1m2 0h1m65 0h3m50 0h1m20 0h1m3 0h1m29 0h5m5 0h1m19 0h1m6 0h3m11 0h2m21 0h1m4 0h7M481 77h2M41 131h1m6 0h1m12 0h2m6 0h3m23 0h2m1 0h1m9 0h1m5 0h2m3 0h1m11 0h1m17 0h1m6 0h1m9 0h1m3 0h1m5 0h1m14 0h1m5 0h1m1 0h1m2 0h1m1 0h1m7 0h1m15 0h1m3 0h1m7 0h1m2 0h1m23 0h1m28 0h3m15 0h1m1 0h2m8 0h3m4 0h1m9 0h1m11 0h1m30 0h1m11 0h3m3 0h1m1 0h1m1 0h1m16 0h3m1 0h1m14 0h1m5 0h1m1 0h1m16 0h1m2 0h2m1 0h1M116 135h2m261 0h1m57 0h1M365 152h1M8 156h3m1 0h1m6 0h6m2 0h3m2 0h3m1 0h1m3 0h1m3 0h1m1 0h1m4 0h1m1 0h1m4 0h2m6 0h1m2 0h1m5 0h3m5 0h2m3 0h2m1 0h1m2 0h2m5 0h4m1 0h1m11 0h1m3 0h1m5 0h1m4 0h1m2 0h7m5 0h4m1 0h1m1 0h3m1 0h2m10 0h1m6 0h1m1 0h1m1 0h3m1 0h1m5 0h5m4 0h1m7 0h2m9 0h1m13 0h4m10 0h11m2 0h1m7 0h1m1 0h3m8 0h2m4 0h6m9 0h5m1 0h2m1 0h1m2 0h1m2 0h1m5 0h2m1 0h1m2 0h1m7 0h3m1 0h4m11 0h1m1 0h1m3 0h2m5 0h1m2 0h2m1 0h1m7 0h1m3 0h4m12 0h2m4 0h1m9 0h1m2 0h2m7 0h1m2 0h1m3 0h2m3 0h1m8 0h1m5 0h1m1 0h2m5 0h1m6 0h1M164 177h1m262 0h1M492 181h1M480 198h1m7 0h1m1 0h2m2 0h1m95 0h1m52 0h1m87 0h1m1 0h1M503 210h1M643 223h1M506 227h1M530 231h1M554 252h1m8 0h1m154 0h1M552 294h1M516 298h1m4 0h1M549 302h1m110 0h1M513 306h1m14 0h1m20 0h1m2 0h1m1 0h1m68 0h1M517 310h1m181 0h1M555 331h1m4 0h1m8 0h1m7 0h1m31 0h1m21 0h1m2 0h1m27 0h1m6 0h1M770 356h1m17 0h1M734 360h1M528 369h1M549 381h1m5 0h1m80 0h1m24 0h1m32 0h2m3 0h1m35 0h1M734 385h1m34 0h1m18 0h1M776 402h1M551 406h1m14 0h1m6 0h1m5 0h1m18 0h2m5 0h1m14 0h1m3 0h1m2 0h1m21 0h1m18 0h1m23 0h1m12 0h1m29 0h1m26 0h1m4 0h1m2 0h1m13 0h1m9 0h1m14 0h2m1 0h1M790 444h1m11 0h1m1 0h1M533 448h1m5 0h1m67 0h1m14 0h1m14 0h2m7 0h1m34 0h1m1 0h1m4 0h1m1 0h1m7 0h1m24 0h1m2 0h1m43 0h2m14 0h1m1 0h2m2 0h1m3 0h1m3 0h2M537 452h1m12 0h1m11 0h1m11 0h1m8 0h1m6 0h1m3 0h1m1 0h1m5 0h1m3 0h1m5 0h1m1 0h1m11 0h1m1 0h2m21 0h1m4 0h2m1 0h1m24 0h1m4 0h3m14 0h2m9 0h2m7 0h1m5 0h2m30 0h1m2 0h1m7 0h1m14 0h1m20 0h1M528 456h1m17 0h2m11 0h2m17 0h1m3 0h1m9 0h1m6 0h1m3 0h1m4 0h1m16 0h1m29 0h1m5 0h1m4 0h1m3 0h1m7 0h2m5 0h1m8 0h1m15 0h1m2 0h1m7 0h1m3 0h1m42 0h2m9 0h2m4 0h1m8 0h1m10 0h1m1 0h3M536 473h1m2 0h1m3 0h1m14 0h1m4 0h1m7 0h1m5 0h1m9 0h1m3 0h1m3 0h1m1 0h1m9 0h1m2 0h1m2 0h2m8 0h1m5 0h1m14 0h2m1 0h1m9 0h2m5 0h1m7 0h1m2 0h2m4 0h1m2 0h1m11 0h1m1 0h2m22 0h2m2 0h1m39 0h1m6 0h1m13 0h1m10 0h1m1 0h2m2 0h1M514 485h1m2 0h1m1 0h2M735 519h1m32 0h1M591 523h1M504 531h1m4 0h1m2 0h1m1 0h4m2 0h1m1 0h1M509 548h1M513 552h1m2 0h2m4 0h1"/><path stroke="#00ff6b" stroke-width="5" d="M605 14.5h1M482 39.5h1m3 0h1m177 0h1M732 64.5h1m37 0h1M479 389.5h1m308 0h1"/><path stroke="#00ff4b" stroke-width="4" d="M12 6h4m1 0h4m6 0h2m2 0h4m9 0h7m3 0h6m6 0h2m5 0h1m4 0h2m2 0h11m3 0h4m1 0h1m3 0h6m6 0h1m2 0h2m2 0h2m6 0h2m4 0h1m1 0h5m1 0h4m1 0h1m4 0h3m7 0h1m7 0h2m4 0h3m3 0h1m1 0h4m3 0h1m2 0h3m7 0h1m2 0h2m2 0h2m1 0h4m9 0h2m1 0h3m5 0h4m7 0h1m1 0h3m1 0h2m3 0h6m6 0h4m2 0h3m3 0h3m3 0h3m2 0h1m3 0h6m4 0h1m2 0h1m4 0h3m1 0h1m1 0h9m7 0h1m3 0h2m1 0h1m6 0h6m4 0h1m1 0h5m1 0h6m3 0h3m12 0h3m2 0h1m3 0h2m1 0h6m3 0h3m1 0h1m4 0h3m3 0h3m8 0h1m3 0h3m5 0h1m7 0h2m6 0h1m2 0h3m4 0h2m14 0h4m3 0h3m3 0h9m2 0h1m3 0h3m3 0h3m3 0h3m5 0h4m3 0h2m1 0h3m1 0h1m1 0h6m4 0h1m7 0h2m4 0h3m3 0h6m3 0h2m2 0h2m3 0h7m1 0h1m1 0h1m4 0h3m9 0h4m1 0h1m3 0h7m1 0h7m3 0h1m5 0h3m3 0h1m5 0h4m1 0h1m3 0h3m2 0h1m4 0h1m7 0h7m1 0h1m3 0h1m6 0h1m4 0h3m3 0h6m3 0h6m2 0h4m4 0h1m7 0h1m1 0h1m3 0h3m9 0h3m1 0h1m5 0h1m1 0h3m2 0h2m1 0h1M488 44h1m229 0h1M718 48h1M2 52h1m21 0h1m171 0h2m2 0h2m29 0h1m21 0h1m6 0h1m39 0h3m63 0h1m6 0h1m63 0h1m21 0h1m21 0h1M39 56h1m3 0h1m26 0h2m26 0h1m20 0h1m11 0h1m9 0h3m19 0h1m49 0h1m32 0h1m1 0h1m9 0h1m38 0h2m10 0h1m2 0h1m6 0h1m51 0h1m3 0h2m32 0h1m57 0h1m2 0h1m10 0h1m6 0h1M22 60h1m149 0h1m6 0h1m95 0h3m1 0h1m42 0h1m1 0h1m30 0h1m28 0h1m18 0h1m50 0h1m14 0h1m195 0h1m65 0h1M2 73h1m10 0h1m2 0h1m14 0h1m134 0h1m1 0h1m2 0h2m1 0h1m4 0h1m5 0h3m80 0h2m4 0h1m1 0h2m11 0h1m32 0h2m1 0h1m27 0h3m1 0h1m1 0h1m5 0h1m17 0h2m17 0h2m1 0h1m41 0h2m5 0h1m5 0h2m7 0h1m10 0h1M22 77h1m403 0h1m60 0h1M0 131h1m7 0h2m2 0h1m1 0h1m3 0h2m5 0h1m3 0h1m3 0h1m9 0h1m3 0h1m10 0h1m8 0h1m7 0h3m4 0h2m3 0h1m1 0h1m7 0h1m4 0h1m6 0h1m19 0h2m7 0h1m8 0h2m6 0h1m1 0h1m9 0h1m1 0h1m5 0h1m2 0h1m3 0h3m16 0h1m1 0h1m14 0h1m16 0h2m8 0h1m1 0h1m3 0h1m25 0h1m8 0h1m8 0h1m13 0h4m2 0h1m6 0h1m1 0h2m10 0h3m2 0h2m2 0h1m31 0h1m6 0h1m3 0h1m14 0h1m3 0h1m6 0h2m26 0h2m9 0h1m14 0h1M60 152h1m3 0h1m9 0h1m4 0h1m20 0h1m14 0h1m4 0h2m12 0h1m29 0h2m11 0h1m19 0h1m1 0h1m5 0h1m6 0h1m13 0h1m15 0h1m23 0h1m53 0h2m9 0h2m22 0h1m10 0h1m16 0h1m23 0h1m18 0h1m2 0h2m18 0h1m7 0h2m20 0h1M1 156h5m1 0h1m7 0h3m12 0h2m3 0h1m1 0h1m1 0h1m5 0h1m3 0h2m1 0h1m1 0h3m8 0h1m14 0h1m5 0h1m3 0h1m1 0h2m11 0h1m1 0h1m2 0h3m3 0h1m6 0h5m1 0h1m2 0h1m10 0h4m5 0h1m1 0h1m6 0h3m9 0h2m4 0h1m1 0h1m3 0h1m1 0h3m10 0h1m7 0h1m4 0h4m2 0h1m3 0h1m1 0h1m3 0h3m6 0h2m19 0h2m1 0h3m5 0h1m3 0h1m1 0h1m4 0h1m18 0h3m5 0h1m14 0h1m5 0h1m4 0h2m11 0h4m1 0h2m4 0h1m2 0h2m4 0h3m1 0h2m4 0h3m7 0h1m4 0h4m16 0h2m2 0h1m4 0h2m8 0h1m1 0h2m1 0h1m4 0h1m4 0h2m6 0h2m4 0h1m2 0h4m9 0h2M494 177h1m317 0h1M481 198h1m10 0h1m96 0h1m142 0h1M505 202h1m18 0h1M524 210h1M611 223h1M611 227h1M552 248h1m10 0h1M590 252h1m32 0h1m36 0h1m74 0h1M563 294h1M494 306h1m1 0h1m11 0h1m1 0h1m19 0h2m31 0h1m19 0h1m46 0h3M512 310h1m1 0h2m2 0h4m27 0h1m73 0h1M549 331h1m2 0h1m6 0h1m13 0h2m4 0h1m18 0h2m1 0h3m20 0h2m3 0h1m3 0h1m1 0h2m3 0h1m31 0h1m1 0h2m6 0h3m3 0h3m3 0h3m5 0h3M528 356h1M769 360h1M490 369h1m8 0h1M735 373h1M553 381h2m2 0h1m2 0h2m2 0h1m7 0h1m4 0h1m2 0h1m13 0h2m2 0h4m1 0h1m4 0h2m13 0h1m5 0h1m2 0h3m5 0h2m1 0h2m17 0h1m1 0h2m6 0h5m5 0h1m1 0h2m2 0h1m3 0h1m3 0h1m5 0h1m1 0h1M735 385h1m34 0h1M540 406h1m15 0h1m3 0h1m54 0h2m31 0h1m5 0h2m14 0h1m9 0h1m12 0h2m7 0h1m7 0h2m9 0h1m2 0h2m3 0h1m47 0h1m17 0h2M763 444h1m37 0h1M524 448h1m12 0h2m37 0h1m20 0h1m3 0h2m3 0h1m3 0h1m32 0h2m2 0h1m5 0h1m3 0h2m28 0h1m8 0h1m23 0h1m43 0h1m3 0h1m37 0h1m3 0h1m1 0h1M524 452h1m4 0h1m4 0h1m14 0h1m1 0h1m4 0h3m9 0h1m3 0h1m15 0h1m3 0h2m3 0h2m8 0h1m2 0h2m9 0h1m3 0h1m27 0h1m12 0h1m13 0h1m14 0h1m16 0h1m2 0h1m14 0h1m3 0h2m29 0h1m16 0h1m3 0h3m23 0h1M505 456h1m18 0h1m7 0h1m7 0h1m26 0h1m1 0h1m5 0h1m3 0h2m17 0h1m10 0h1m6 0h1m3 0h1m3 0h1m23 0h1m5 0h1m31 0h1m6 0h1m10 0h2m3 0h1m1 0h1m12 0h1m2 0h1m3 0h1m33 0h1m6 0h1m3 0h1m22 0h1M528 473h2m1 0h1m1 0h1m3 0h1m7 0h1m3 0h3m5 0h1m1 0h1m1 0h1m2 0h2m2 0h1m1 0h1m3 0h1m1 0h1m6 0h1m1 0h1m4 0h1m3 0h1m6 0h2m2 0h2m21 0h1m8 0h2m7 0h1m4 0h2m12 0h2m1 0h2m3 0h1m3 0h1m5 0h1m3 0h1m1 0h3m3 0h1m1 0h1m2 0h1m2 0h1m2 0h1m5 0h1m3 0h1m2 0h2m11 0h1m26 0h2m2 0h2m4 0h1m4 0h2m6 0h2m2 0h1m1 0h2m1 0h1m5 0h1m5 0h1m8 0h1M511 485h1m6 0h1M518 531h2M513 548h1M512 552h1m2 0h1m4 0h2"/><path stroke="#00ff4b" stroke-width="5" d="M22 14.5h1m475 0h1m164 0h1m67 0h1m37 0h1m1 0h1m15 0h1m1 0h1M665 39.5h1M165 64.5h1m261 0h1m53 0h1m6 0h1m7 0h1m168 0h1m121 0h2M734 389.5h1"/><path stroke="#00ff2c" stroke-width="4" d="M486 44h2M480 48h1m5 0h1M25 52h1m172 0h2m41 0h1m120 0h2m71 0h1m2 0h1m23 0h1M30 56h1m2 0h1m6 0h1m1 0h1m11 0h2m2 0h1m14 0h1m58 0h1m18 0h1m12 0h1m25 0h2m11 0h1m10 0h1m14 0h1m2 0h2m16 0h1m52 0h2m3 0h1m1 0h1m7 0h1m55 0h1m91 0h1m19 0h2M222 60h1m51 0h1m3 0h1m1 0h1m44 0h1m31 0h2m88 0h1m50 0h1m235 0h1m36 0h1m17 0h1M426 69h2M7 73h1m267 0h1m2 0h3m43 0h1m31 0h1m1 0h1m127 0h1M165 77h1m261 0h1M10 131h2m1 0h1m12 0h1m17 0h3m2 0h1m3 0h1m5 0h1m8 0h1m15 0h1m6 0h1m2 0h1m6 0h1m1 0h1m3 0h1m19 0h2m3 0h2m6 0h2m18 0h1m10 0h1m20 0h1m1 0h1m1 0h1m11 0h1m11 0h1m13 0h1m18 0h4m1 0h1m10 0h4m8 0h3m4 0h1m1 0h1m2 0h1m10 0h1m8 0h1m25 0h1m4 0h1m13 0h1m4 0h1m10 0h1m10 0h1m3 0h1m6 0h1m8 0h1m4 0h2m5 0h3m4 0h1m6 0h1m2 0h2m3 0h2m10 0h1m14 0h1M11 152h1m7 0h1m6 0h1m15 0h2m3 0h1m13 0h3m6 0h4m4 0h1m8 0h1m6 0h1m1 0h4m8 0h1m4 0h1m5 0h1m11 0h1m3 0h1m17 0h1m2 0h3m7 0h1m2 0h2m1 0h1m2 0h2m14 0h1m6 0h1m5 0h1m1 0h2m3 0h1m5 0h2m2 0h2m4 0h2m4 0h1m7 0h1m1 0h1m21 0h1m1 0h2m8 0h1m1 0h2m3 0h3m8 0h1m2 0h2m9 0h2m5 0h2m1 0h1m8 0h1m4 0h1m2 0h3m2 0h1m12 0h1m27 0h1m14 0h1m1 0h5m2 0h1m1 0h2m1 0h1m3 0h1m1 0h1m7 0h1m2 0h1m19 0h1m1 0h1m5 0h1m10 0h1m1 0h7M6 156h1m31 0h1m42 0h1m3 0h1m31 0h1m72 0h1m33 0h1m19 0h1m30 0h1m18 0h1m51 0h1m4 0h1m4 0h1m3 0h1m14 0h1m4 0h2m55 0h1m7 0h1m32 0h1M482 177h1m4 0h2m4 0h1m1 0h1m94 0h1m140 0h1m1 0h1M489 198h1M506 202h1M503 206h1m20 0h1m5 0h1M530 210h1M484 223h1m8 0h1M481 227h1m4 0h1m2 0h1M481 235h1M773 252h1M528 298h1m20 0h1m13 0h1m75 0h1m170 0h1M563 302h1M497 306h1m2 0h4m1 0h1m1 0h1m16 0h1m1 0h2m1 0h1m80 0h1m18 0h1m10 0h1m82 0h1m78 0h1m6 0h1M513 310h1m2 0h1m66 0h1m76 0h1m57 0h1m54 0h1M548 331h1m4 0h2m2 0h2m2 0h3m4 0h1m1 0h1m1 0h1m5 0h1m1 0h1m13 0h2m4 0h1m4 0h1m2 0h1m4 0h1m5 0h2m2 0h1m4 0h1m1 0h1m6 0h1m1 0h1m1 0h1m1 0h2m16 0h1m1 0h6m1 0h2m1 0h1m2 0h4m1 0h1m3 0h1m5 0h3m3 0h3m1 0h1M490 360h1m34 0h1M479 369h1m255 0h1M548 381h1m1 0h2m4 0h1m1 0h2m3 0h1m5 0h2m2 0h2m4 0h1m1 0h1m1 0h1m12 0h2m4 0h1m1 0h2m6 0h2m4 0h1m1 0h1m3 0h2m2 0h1m2 0h1m3 0h1m1 0h1m31 0h3m7 0h1m1 0h1m1 0h1m3 0h1m1 0h3m9 0h1m1 0h1m30 0h1M532 406h1m26 0h1m20 0h3m5 0h2m3 0h1m6 0h1m2 0h1m4 0h1m8 0h2m47 0h1m4 0h1m6 0h1m7 0h1m16 0h1m5 0h1m20 0h1m47 0h1m20 0h1M761 444h1M530 448h2m25 0h2m3 0h2m1 0h1m2 0h1m1 0h2m12 0h1m27 0h1m8 0h1m1 0h1m4 0h1m7 0h1m8 0h1m4 0h1m14 0h1m6 0h2m1 0h1m23 0h1m29 0h1m2 0h1m32 0h1m12 0h1m1 0h1m3 0h1m24 0h1m1 0h1M532 452h1m11 0h1m3 0h1m3 0h1m7 0h1m23 0h2m13 0h1m4 0h2m21 0h1m7 0h1m14 0h1m9 0h1m17 0h1m13 0h1m1 0h1m18 0h2m4 0h1m7 0h1m1 0h1m38 0h1m2 0h1m6 0h1m2 0h1m7 0h1m1 0h1m13 0h1m3 0h1M542 456h1m128 0h1m36 0h1M530 473h1m3 0h1m9 0h1m11 0h1m9 0h1m5 0h2m4 0h5m1 0h1m4 0h1m2 0h1m3 0h1m1 0h3m2 0h2m6 0h2m4 0h2m2 0h2m3 0h2m7 0h2m13 0h1m2 0h4m2 0h3m23 0h1m2 0h1m3 0h1m9 0h1m4 0h1m2 0h1m3 0h1m2 0h2m9 0h4m1 0h3m31 0h1m2 0h2m5 0h1m1 0h3m3 0h1m6 0h2m1 0h2m8 0h2m3 0h2M504 519h1M504 523h1M511 531h1M514 552h1m3 0h2"/><path stroke="#00ff2c" stroke-width="5" d="M664 14.5h1m105 0h1M487 39.5h1m9 0h1M222 64.5h1m440 0h1M490 389.5h1"/><path stroke="#2fff1d" stroke-width="4" d="M634 6h1m8 0h1M634 48h2M285 52h1m57 0h2m16 0h1m74 0h1m45 0h1m3 0h1M16 56h1m19 0h1m13 0h2m47 0h1m9 0h1m8 0h1m75 0h1m7 0h1m5 0h1m6 0h2m8 0h1m23 0h1m3 0h1m2 0h2m41 0h1m7 0h1m7 0h2m3 0h1m137 0h1M427 60h1m52 0h1m7 0h1m117 0h1m56 0h1m106 0h1m17 0h1M22 69h1m458 0h1m5 0h1m37 0h1m205 0h1M482 73h1M3 127h1m16 0h1m1 0h1m74 0h3m18 0h1m13 0h1m26 0h1m51 0h2m45 0h3m27 0h2m60 0h1m25 0h1m68 0h2m24 0h3M15 131h1m4 0h3m4 0h2m3 0h1m1 0h2m4 0h1m9 0h1m3 0h2m1 0h1m7 0h2m25 0h1m11 0h3m3 0h2m11 0h3m10 0h2m1 0h1m2 0h1m2 0h1m13 0h1m14 0h1m6 0h1m3 0h3m1 0h1m3 0h1m1 0h1m23 0h1m9 0h1m1 0h1m6 0h1m5 0h1m3 0h1m3 0h1m6 0h3m11 0h1m15 0h1m1 0h1m2 0h1m8 0h1m1 0h4m31 0h1m6 0h4m6 0h1m1 0h2m3 0h1m3 0h1m3 0h2m2 0h1m14 0h1m1 0h1m18 0h1m7 0h1m1 0h1m13 0h1m1 0h1m2 0h1m3 0h1m9 0h1m4 0h1M0 152h1m7 0h1m1 0h1m1 0h3m3 0h1m6 0h1m3 0h1m2 0h2m2 0h1m4 0h1m3 0h1m2 0h1m4 0h1m3 0h1m9 0h1m1 0h1m5 0h3m6 0h1m4 0h1m5 0h1m7 0h2m4 0h1m4 0h1m12 0h2m1 0h1m5 0h2m1 0h1m1 0h1m6 0h2m5 0h1m4 0h1m6 0h2m9 0h1m4 0h2m10 0h1m5 0h3m28 0h1m1 0h2m4 0h1m4 0h3m4 0h2m15 0h1m2 0h2m4 0h1m8 0h1m8 0h2m13 0h2m1 0h2m2 0h1m6 0h3m11 0h1m2 0h1m33 0h1m7 0h3m1 0h1m7 0h1m1 0h1m5 0h2m8 0h1m4 0h1m2 0h1m4 0h1m3 0h2m1 0h1m1 0h1m5 0h3m6 0h2m15 0h1M490 177h2m97 0h1m142 0h1M530 202h1M482 223h1m8 0h1M492 227h1m150 0h1M611 252h1m157 0h1M554 298h1m35 0h1m20 0h1m18 0h1m68 0h1m18 0h1m16 0h1M610 302h2m106 0h1m16 0h1m37 0h1M479 306h1m1 0h1m1 0h1m4 0h1m9 0h1m5 0h1m128 0h1m5 0h1m1 0h1m18 0h1m57 0h1m54 0h1m33 0h2m2 0h1M590 310h1m19 0h1m112 0h1M550 331h2m4 0h1m7 0h4m3 0h1m3 0h2m4 0h1m1 0h1m8 0h2m2 0h2m14 0h1m5 0h1m2 0h1m4 0h2m4 0h1m5 0h1m3 0h1m37 0h1m5 0h2m12 0h1M770 360h1m17 0h1M528 373h1m259 0h1M552 381h1m9 0h1m2 0h4m2 0h1m3 0h2m1 0h1m13 0h2m12 0h2m6 0h1m4 0h1m1 0h1m4 0h2m2 0h1m7 0h2m2 0h1m20 0h1m2 0h3m8 0h2m1 0h1m5 0h1m6 0h1m3 0h2m1 0h1M534 406h1m84 0h1m65 0h1m28 0h1m12 0h1m37 0h1m13 0h2m4 0h1m22 0h1M775 444h1m6 0h1m15 0h1m12 0h1M505 448h1m22 0h1m6 0h2m14 0h1m20 0h1m16 0h2m20 0h1m1 0h2m20 0h1m33 0h1m19 0h1m1 0h1m5 0h1m18 0h3m3 0h1m10 0h1m59 0h2m12 0h1M528 452h1m1 0h1m9 0h2m17 0h1m7 0h1m10 0h1m1 0h1m22 0h1m13 0h3m4 0h1m23 0h1m6 0h1m5 0h1m7 0h1m4 0h1m4 0h1m5 0h1m16 0h4m22 0h1m33 0h1m6 0h1m2 0h1m3 0h1m2 0h2m12 0h2m4 0h1m6 0h1m3 0h1M571 469h1m5 0h1m66 0h1m13 0h1m22 0h2m18 0h1m58 0h1m5 0h1M532 473h1m7 0h2m4 0h3m3 0h1m7 0h1m6 0h1m7 0h1m12 0h1m4 0h1m15 0h1m9 0h2m3 0h2m22 0h2m17 0h1m6 0h1m3 0h3m12 0h2m16 0h1m1 0h1m1 0h1m5 0h1m3 0h1m36 0h1m5 0h1m3 0h1m11 0h1m9 0h1m4 0h1m7 0h3M512 548h1m8 0h1M511 552h1"/><path stroke="#2fff1d" stroke-width="5" d="M606 14.5h1m127 0h1m53 0h1M497 64.5h1m291 0h1M552 289.5h1M426 364.5h1m307 0h1m35 0h1M499 389.5h1"/><path stroke="#5dff0f" stroke-width="4" d="M482 48h1m4 0h1M282 52h1m52 0h1m11 0h1m91 0h1m40 0h1M7 56h1m20 0h1m30 0h1m144 0h4m1 0h3m12 0h1m10 0h1m65 0h1m4 0h1m10 0h1m137 0h3m1 0h1m2 0h1M165 60h1m316 0h1m122 0h1m126 0h2m35 0h1m17 0h1M499 69h1m106 0h1m164 0h1m17 0h1M481 73h1m6 0h1M410 77h1m69 0h1m306 0h1M4 131h1m2 0h1m8 0h1m6 0h2m11 0h2m1 0h1m11 0h2m3 0h1m31 0h1m1 0h1m2 0h1m18 0h1m5 0h1m3 0h1m3 0h1m16 0h2m5 0h3m8 0h3m9 0h1m5 0h2m9 0h1m18 0h2m4 0h1m8 0h1m5 0h1m6 0h1m11 0h2m6 0h1m5 0h2m27 0h1m8 0h2m20 0h1m5 0h2m4 0h1m16 0h2m7 0h1m5 0h1m3 0h1m6 0h1m1 0h2m5 0h1m2 0h1m1 0h1m23 0h1m4 0h1m1 0h1m8 0h1m13 0h2m6 0h1m4 0h1m2 0h2m1 0h1m12 0h1M4 152h1m2 0h1m1 0h1m11 0h3m3 0h2m5 0h2m4 0h1m3 0h1m1 0h1m2 0h3m3 0h1m2 0h2m5 0h2m1 0h1m13 0h2m4 0h1m4 0h1m7 0h2m3 0h1m4 0h2m9 0h1m1 0h1m4 0h1m2 0h2m4 0h1m1 0h1m4 0h3m11 0h1m1 0h1m1 0h1m7 0h1m1 0h2m4 0h4m4 0h1m4 0h3m1 0h1m11 0h3m2 0h1m5 0h2m2 0h1m1 0h1m5 0h1m4 0h3m9 0h1m2 0h1m2 0h2m1 0h3m10 0h2m9 0h2m5 0h1m1 0h5m10 0h2m1 0h1m4 0h1m8 0h1m1 0h1m4 0h2m3 0h1m5 0h1m2 0h3m3 0h2m7 0h2m1 0h1m1 0h2m4 0h6m2 0h1m12 0h2m3 0h1m14 0h1m1 0h2m4 0h1m1 0h1m3 0h1m8 0h1m1 0h1m2 0h4m11 0h1m5 0h1m4 0h1m1 0h1m9 0h3M480 177h1M507 210h1M480 223h1m4 0h1m1 0h1m2 0h1m3 0h1M427 227h1M583 248h1M723 252h1M549 294h1m33 0h1M479 298h1m4 0h1m12 0h1m31 0h1m1 0h1m51 0h1m47 0h1m12 0h1m128 0h1m35 0h1M554 302h1m168 0h1M480 306h1m4 0h1m3 0h1m5 0h1m10 0h1m2 0h1m1 0h1m99 0h1m22 0h1m7 0h3m90 0h1m68 0h1m5 0h1M582 331h1m21 0h1m1 0h2m6 0h1m7 0h1M525 369h1M769 373h1M582 381h1m39 0h1M525 385h1M546 406h2m21 0h1m91 0h1m17 0h1m35 0h1m60 0h1m16 0h1m13 0h1M534 448h1m25 0h1m5 0h2m6 0h1m8 0h1m1 0h1m5 0h1m4 0h1m55 0h1m23 0h1m18 0h1m7 0h1m27 0h1m30 0h1m14 0h1m1 0h1m19 0h1M505 452h1m60 0h1m2 0h1m9 0h1m2 0h1m6 0h1m10 0h1m8 0h1m6 0h1m3 0h1m46 0h2m1 0h1m50 0h1m9 0h1m38 0h1m6 0h1m7 0h1m10 0h1m10 0h1M535 469h1m1 0h1m1 0h1m3 0h1m13 0h2m3 0h4m10 0h1m10 0h1m6 0h1m7 0h1m4 0h1m5 0h2m6 0h1m7 0h1m8 0h1m4 0h1m1 0h1m18 0h2m18 0h1m6 0h1m6 0h1m23 0h1m67 0h1m9 0h5M542 473h1m26 0h1m38 0h1m6 0h2m53 0h2m14 0h1m17 0h2m2 0h2m14 0h1m2 0h1m37 0h1m10 0h1m1 0h1M509 527h1M514 548h1m1 0h2m4 0h1"/><path stroke="#5dff0f" stroke-width="5" d="M605 64.5h1m165 0h1M611 214.5h1M499 364.5h1m269 0h1"/><path stroke="#8cff00" stroke-width="4" d="M635 6h1m82 0h1M643 44h1M217 52h4m49 0h1m1 0h1m8 0h1m2 0h1m47 0h1m9 0h1m2 0h1m31 0h1m40 0h3M41 56h1m150 0h2m1 0h1m2 0h3m11 0h1m18 0h1m9 0h1m12 0h1m45 0h1m1 0h1m70 0h1m53 0h1m37 0h1M499 60h1m25 0h1m138 0h1M496 69h1m168 0h1m67 0h1m35 0h1m18 0h1M222 77h1m440 0h1m1 0h1m67 0h1M0 127h2m5 0h1m17 0h2m32 0h3m10 0h2m14 0h2m1 0h3m39 0h1m9 0h3m11 0h2m19 0h1m2 0h3m5 0h1m85 0h2m15 0h3m8 0h2m14 0h3m48 0h1m33 0h1m1 0h2m24 0h2m16 0h1m4 0h1M1 131h1m3 0h2m10 0h1m20 0h1m41 0h2m4 0h1m59 0h1m7 0h1m33 0h1m11 0h1m12 0h2m1 0h1m6 0h1m1 0h1m13 0h1m22 0h1m11 0h2m24 0h1m33 0h1m11 0h1m4 0h1m4 0h1m5 0h1m6 0h2m4 0h1m3 0h1m14 0h1m18 0h1m19 0h1m3 0h1m23 0h1m2 0h1m11 0h2M2 152h1m2 0h2m8 0h3m2 0h1m3 0h1m6 0h1m6 0h2m12 0h1m1 0h1m1 0h1m28 0h2m3 0h3m12 0h1m1 0h1m2 0h1m5 0h3m4 0h1m1 0h2m15 0h3m5 0h3m1 0h1m7 0h1m22 0h2m1 0h3m9 0h1m13 0h3m7 0h1m4 0h2m8 0h1m9 0h2m5 0h1m3 0h5m18 0h1m5 0h1m10 0h2m1 0h2m2 0h1m15 0h1m11 0h1m10 0h3m2 0h1m4 0h2m2 0h1m1 0h1m4 0h2m6 0h1m3 0h1m1 0h1m5 0h1m1 0h1m2 0h3m21 0h1m4 0h1m1 0h1m21 0h3m6 0h2m4 0h4m1 0h1M481 177h1M507 202h1M505 206h3M506 210h1M812 219h1M488 223h1M164 227h1M484 235h1M660 248h1M547 252h1m8 0h1m53 0h1m157 0h1M623 294h1M485 298h1m25 0h1m18 0h1m111 0h1m159 0h1M482 306h1m1 0h1m1 0h1m12 0h1m22 0h1m2 0h1m233 0h1m41 0h1m1 0h1m1 0h2m5 0h1M499 360h1M734 369h1m34 0h1m18 0h1M542 406h1m161 0h1m3 0h1M781 444h1m4 0h1M541 448h1m7 0h1m28 0h1m14 0h1m57 0h1m8 0h1m6 0h2m37 0h2m4 0h1m6 0h1m8 0h1m1 0h1m3 0h1m37 0h1m32 0h1m2 0h1M542 452h1m3 0h2m27 0h1m5 0h1m26 0h1m6 0h1m33 0h1m4 0h1m16 0h1m14 0h1m24 0h1m12 0h2m82 0h1M538 469h1m10 0h1m6 0h1m4 0h1m8 0h1m3 0h1m8 0h2m1 0h1m8 0h1m1 0h1m3 0h1m4 0h1m4 0h2m9 0h2m1 0h1m1 0h1m9 0h1m8 0h2m5 0h1m18 0h2m1 0h3m5 0h1m3 0h1m2 0h1m6 0h1m1 0h2m15 0h1m3 0h1m2 0h1m2 0h1m34 0h1m2 0h1m8 0h2m7 0h2m2 0h1m4 0h1m6 0h1M511 548h1m3 0h1m2 0h3"/><path stroke="#8cff00" stroke-width="5" d="M525 364.5h1"/><path stroke="#b2fc00" stroke-width="4" d="M635 44h1M261 52h2m8 0h1m11 0h1m10 0h1m1 0h1m37 0h1m43 0h2m41 0h1m18 0h1M22 56h1m15 0h1m157 0h2m3 0h1m38 0h1m19 0h1m149 0h1m53 0h1m17 0h1M497 69h1m107 0h1m128 0h1M222 73h1M498 77h2m105 0h1m125 0h2M2 131h2m26 0h2m53 0h1m30 0h2m158 0h1m118 0h1M1 152h1m1 0h1m26 0h1m6 0h1m42 0h2m162 0h1m29 0h3m25 0h1m49 0h2m24 0h1m1 0h1m56 0h1M643 173h1m168 0h1M489 177h1M504 206h1M164 223h1m330 0h1m316 0h1M426 227h1M611 231h1M485 235h1M549 248h1m168 0h1M552 281h1M590 294h1m132 0h1M494 298h1m6 0h1m1 0h2m5 0h1m11 0h1m106 0h1m4 0h1m6 0h1m81 0h1m79 0h2m3 0h1M759 302h1M487 306h1m35 0h1m245 0h1M479 360h1m48 0h1m206 0h1M559 377h1M529 448h1m2 0h1m7 0h1m1 0h1m1 0h1m5 0h1m1 0h1m3 0h1m2 0h1m13 0h1m25 0h1m9 0h1m7 0h1m9 0h1m26 0h1m4 0h1m6 0h1m10 0h1m7 0h1m19 0h1m5 0h1m2 0h2m5 0h1m54 0h1m8 0h1M693 452h1m14 0h1m1 0h1m73 0h1M505 469h1m24 0h2m1 0h1m2 0h1m4 0h1m3 0h1m4 0h2m16 0h1m3 0h2m11 0h1m3 0h5m2 0h1m7 0h1m5 0h1m4 0h1m4 0h1m5 0h1m8 0h2m13 0h1m4 0h3m27 0h1m2 0h2m2 0h1m2 0h2m15 0h1m4 0h2m9 0h2m2 0h4m26 0h2m5 0h1m11 0h1m5 0h2m3 0h1m3 0h2m13 0h2M509 523h1"/><path stroke="#b2fc00" stroke-width="5" d="M525 64.5h1M643 214.5h1M563 289.5h1M479 364.5h1m10 0h1m244 0h1m52 0h1"/><path stroke="#d9f900" stroke-width="4" d="M222 10h1m302 0h1M13 52h1m249 0h1m9 0h1m19 0h1m1 0h1m31 0h1m5 0h1m12 0h1m44 0h1m33 0h1m18 0h1M31 56h1m431 0h1m16 0h1M496 60h1M496 77h2m108 0h1m127 0h1M643 202h1M426 223h2M812 227h1M484 231h1M623 248h1m75 0h1M718 294h1m54 0h1M488 298h1m10 0h1m2 0h1m2 0h2m1 0h2m37 0h1m17 0h1m66 0h2m6 0h1m164 0h1m1 0h1m3 0h1M556 302h1m33 0h1M556 306h2m32 0h1M611 310h1M560 327h1m111 0h1M770 369h1M560 377h2m7 0h1m4 0h1m33 0h2m24 0h1m5 0h1m21 0h1m28 0h1M771 444h1m11 0h1m11 0h1m1 0h1m2 0h1m9 0h1M547 448h2m20 0h1m11 0h2m15 0h1m6 0h1m10 0h1m9 0h1m28 0h2m14 0h1m20 0h1m11 0h1M709 452h1M528 469h2m4 0h1m5 0h1m3 0h1m1 0h1m5 0h1m6 0h2m5 0h2m7 0h1m3 0h2m7 0h1m10 0h2m2 0h1m1 0h1m10 0h2m1 0h1m8 0h1m19 0h1m2 0h2m1 0h1m4 0h3m5 0h4m22 0h1m9 0h2m1 0h2m6 0h1m4 0h1m7 0h1m2 0h2m27 0h1m7 0h2m2 0h1m3 0h1m1 0h1m1 0h2m4 0h1m3 0h1m3 0h1m1 0h1m10 0h2m1 0h1"/><path stroke="#d9f900" stroke-width="5" d="M549 289.5h1"/><path stroke="#fff600" stroke-width="4" d="M787 10h1M634 44h1M326 52h1m1 0h1m58 0h1m1 0h1m2 0h1m6 0h1m1 0h1m13 0h3m11 0h1m12 0h1m8 0h1m1 0h1m14 0h2M165 56h1m200 0h1m68 0h1m2 0h1m59 0h1m26 0h1m263 0h1M771 77h1m17 0h1M19 127h1m46 0h3m2 0h1m166 0h1m4 0h1m78 0h2m31 0h1m37 0h1m45 0h2m18 0h1m8 0h3M492 177h1M611 202h1m200 0h1M482 219h1M481 223h1m10 0h1M643 231h1M554 248h1m168 0h1M557 252h1m7 0h1M554 294h1m105 0h1M481 298h1m1 0h1m11 0h1m2 0h1m1 0h1m6 0h1m15 0h3m1 0h1m28 0h1m211 0h2m36 0h1m5 0h1M565 302h1m203 0h1M547 310h1m187 0h1m33 0h1M689 327h1M548 377h2m2 0h2m1 0h1m2 0h1m3 0h1m2 0h1m37 0h1m19 0h1m7 0h1m1 0h1m1 0h1m7 0h1m17 0h1m1 0h1m1 0h1m3 0h1m2 0h1m1 0h3m6 0h1m1 0h1m2 0h3m3 0h3m1 0h2m2 0h2M759 444h1m9 0h1m4 0h1m12 0h1m4 0h1M588 448h1m11 0h1m3 0h1m3 0h1m6 0h1m4 0h1m4 0h1m48 0h1m3 0h1m14 0h2m7 0h1m21 0h1m2 0h1m7 0h1M542 469h1m4 0h2m20 0h1m8 0h1m2 0h2m15 0h1m10 0h1m8 0h1m30 0h1m16 0h1m4 0h1m2 0h1m3 0h3m5 0h1m7 0h1m7 0h1m2 0h1m2 0h4m3 0h1m8 0h2m39 0h1m4 0h1m5 0h1m1 0h1m15 0h1m4 0h1m5 0h1m2 0h1m1 0h1"/><path stroke="#fff600" stroke-width="5" d="M812 214.5h1M718 289.5h1M528 314.5h1m100 0h1m9 0h1m169 0h1M528 364.5h1M674 439.5h1m3 0h1m4 0h1m6 0h1"/><path stroke="#ffde00" stroke-width="4" d="M525 6h1M22 10h1m142 0h1m330 0h1m237 0h1m34 0h2M266 52h1m62 0h3m53 0h1m2 0h1m1 0h1m20 0h2m15 0h1m1 0h1m10 0h1m8 0h1M2 56h1m22 0h1m193 0h2m140 0h3m62 0h1m70 0h1m166 0h1m68 0h1M22 73h1m403 0h1m72 0h1M788 77h1M484 219h1m158 0h1M489 223h1M590 248h1m19 0h1m124 0h1m37 0h1M759 252h1M563 281h1m19 0h1M552 285h1m1 0h1M480 298h1m1 0h1m3 0h1m9 0h1m29 0h1m274 0h1M547 302h1m220 0h1M547 306h1m17 0h1M759 310h1M559 327h1m10 0h1m1 0h1m4 0h1m21 0h1m9 0h1m23 0h2m1 0h1m38 0h1m23 0h1m3 0h1M551 377h1m5 0h1m6 0h1m1 0h3m1 0h2m1 0h1m2 0h2m1 0h4m12 0h1m2 0h2m1 0h2m2 0h1m6 0h3m5 0h1m3 0h1m1 0h1m1 0h2m6 0h4m1 0h2m21 0h1m5 0h2m1 0h1m5 0h1m1 0h2m9 0h2m7 0h1m2 0h1M548 394h1m4 0h1m6 0h2m17 0h2m22 0h1m4 0h1m14 0h1m9 0h3m25 0h1m8 0h1m1 0h1m18 0h2m2 0h2m2 0h1m1 0h1M767 444h2m25 0h1m17 0h1M546 448h1m28 0h1m16 0h1m10 0h1m15 0h1m28 0h2m30 0h1m5 0h1m23 0h1m2 0h1M532 469h1m75 0h1m15 0h1m88 0h1m7 0h1m50 0h1m11 0h1"/><path stroke="#ffde00" stroke-width="5" d="M583 289.5h1m76 0h1M479 314.5h1m14 0h1m5 0h1m9 0h1m122 0h1m171 0h1m4 0h1"/><path stroke="#ffc700" stroke-width="4" d="M22 6h1M410 10h1m16 0h1m69 0h1M0 52h1m169 0h1m93 0h2m1 0h1m132 0h1m5 0h1m6 0h1M24 56h1m192 0h1m63 0h1m3 0h1m56 0h1m93 0h1m2 0h1m291 0h1M165 73h1m244 0h1m114 0h1m80 0h1m58 0h1M664 77h1M480 219h1M486 235h1M530 252h1m98 0h1m180 0h1M549 281h1m110 0h1M549 285h1m33 0h1m134 0h1M487 298h1m1 0h1m153 0h1m115 0h1M529 302h1m27 0h1m71 0h1M768 306h1M556 310h1M554 327h2m1 0h1m45 0h1m19 0h1m5 0h1m1 0h1m3 0h1m25 0h2m10 0h1m2 0h1m5 0h1m1 0h1m9 0h1m1 0h1M554 377h1m1 0h1m6 0h1m8 0h1m5 0h1m13 0h1m1 0h1m1 0h1m3 0h1m5 0h2m13 0h1m3 0h1m1 0h1m2 0h1m1 0h1m11 0h1m21 0h1m1 0h1m8 0h2m1 0h1m3 0h1m1 0h1m10 0h1m2 0h1M549 394h1m2 0h1m2 0h1m3 0h1m5 0h2m3 0h1m1 0h1m4 0h1m17 0h1m2 0h2m1 0h2m24 0h1m1 0h2m12 0h2m17 0h1m2 0h1m3 0h1m7 0h1m4 0h2m10 0h1M780 444h1m8 0h1m1 0h1m1 0h1m14 0h1M579 448h2m37 0h1m5 0h1m36 0h1m17 0h1m28 0h1M524 469h1M513 527h1"/><path stroke="#ffc700" stroke-width="5" d="M554 289.5h1M496 314.5h1m6 0h1m2 0h1m2 0h1m1 0h1m18 0h2m98 0h2m9 0h1m160 0h1m4 0h2"/><path stroke="#ffaf00" stroke-width="4" d="M426 6h1M499 10h1m106 0h1m164 0h1M169 52h1m170 0h1m41 0h1m3 0h1m27 0h1m18 0h1m9 0h1m5 0h1m2 0h1M222 56h1m60 0h1m59 0h1m93 0h1m333 0h1m15 0h1M427 73h1m305 0h1M14 127h2m7 0h2m14 0h9m15 0h1m18 0h2m31 0h3m49 0h3m29 0h2m2 0h1m9 0h2m103 0h1m33 0h2m30 0h1m6 0h2m2 0h3m16 0h2m48 0h2M427 173h1M486 223h1M547 248h1m9 0h1M508 252h2m18 0h1m110 0h1m4 0h1m157 0h1m6 0h1M699 281h1M699 285h1M547 294h1m211 0h1M494 302h1m12 0h3m21 0h1m107 0h1m1 0h1M557 310h1m7 0h1m202 0h1M548 327h2m11 0h1m2 0h1m14 0h1m46 0h1m13 0h1m2 0h1m30 0h1m8 0h1m18 0h1m1 0h1M550 377h1m24 0h1m7 0h1m9 0h1m3 0h1m6 0h1m13 0h2m2 0h1m44 0h1m19 0h1M557 394h1m6 0h1m4 0h1m3 0h2m7 0h1m9 0h1m1 0h1m9 0h1m1 0h2m1 0h1m3 0h1m6 0h1m1 0h1m1 0h1m1 0h1m4 0h2m3 0h1m3 0h2m21 0h2m1 0h2m5 0h4m4 0h1m2 0h3m1 0h2m3 0h1m8 0h3M764 444h1m34 0h1m7 0h1M670 448h1m54 0h1"/><path stroke="#ffaf00" stroke-width="5" d="M610 289.5h1m12 0h1M482 314.5h1m1 0h1m3 0h2m11 0h1m3 0h1m1 0h2m14 0h1m282 0h1"/><path stroke="#ff9800" stroke-width="4" d="M427 6h1M426 10h1m362 0h1M182 52h3m106 0h2m45 0h1m2 0h1m65 0h1m26 0h1m25 0h2m9 0h1m53 0h1M218 56h1m42 0h2m21 0h1m8 0h2m40 0h1m82 0h1m2 0h1m184 0h1m58 0h1M732 73h1M769 77h2M164 173h1m317 0h1m128 0h1M812 210h1M426 219h1m58 0h1m125 0h1M812 231h1M611 248h1M479 252h1m6 0h1m16 0h1m1 0h1m5 0h1M718 281h1M563 285h1m96 0h1m112 0h1M611 294h1M483 302h3m11 0h1m4 0h1m127 0h1m13 0h1m157 0h1m9 0h1M558 327h1m4 0h1m1 0h1m7 0h1m6 0h1m27 0h1m4 0h1m13 0h1m4 0h1m8 0h2m20 0h1m1 0h1m3 0h2m14 0h1m5 0h1m3 0h1m1 0h1m3 0h1M550 394h2m2 0h1m3 0h1m3 0h2m4 0h1m7 0h1m4 0h1m14 0h1m3 0h1m11 0h1m1 0h1m6 0h1m3 0h1m2 0h1m9 0h1m3 0h1m25 0h1m2 0h1m7 0h2m6 0h1m2 0h1m6 0h2M773 444h1m14 0h1M709 448h1M512 527h1m7 0h1m1 0h1"/><path stroke="#ff9800" stroke-width="5" d="M773 289.5h1M486 314.5h1m12 0h1m24 0h3m2 0h1m102 0h1m1 0h1m5 0h1m3 0h1m158 0h1m8 0h1M635 389.5h2m33 0h1m4 0h1"/><path stroke="#ff8000" stroke-width="4" d="M165 6h1m56 0h1m510 0h1M498 10h1m106 0h1m125 0h1M287 52h1m2 0h1m45 0h2m1 0h1m19 0h1m4 0h1m16 0h1m13 0h1m27 0h2m6 0h1m41 0h1m1 0h2M270 56h1m11 0h1m12 0h2m36 0h1m10 0h1m2 0h1m29 0h2m61 0h1m27 0h1m27 0h1m2 0h1m232 0h1m37 0h1M496 73h2m233 0h1m57 0h1M525 77h1M482 169h1M487 173h1m5 0h3M485 231h1M426 235h1m61 0h1m4 0h1m1 0h1M480 252h1m4 0h1m40 0h1m104 0h1m2 0h1m5 0h1m160 0h1m5 0h1M556 294h1M480 302h1m5 0h1m9 0h1m3 0h1m4 0h1m18 0h2m1 0h1m103 0h1m2 0h1m173 0h1m1 0h2M553 327h1m15 0h1m6 0h1m16 0h3m2 0h1m3 0h1m9 0h1m7 0h1m3 0h1m5 0h1m13 0h1m19 0h1m3 0h1m2 0h1m5 0h1m8 0h1m5 0h1M556 394h1m10 0h1m3 0h1m3 0h1m2 0h1m4 0h1m9 0h1m3 0h1m7 0h1m12 0h2m17 0h1m1 0h1m38 0h1m21 0h1M505 444h1m18 0h1m280 0h1"/><path stroke="#ff8000" stroke-width="5" d="M590 289.5h1m20 0h1M480 314.5h1m2 0h1m1 0h1m1 0h1m7 0h1m1 0h2m3 0h1m1 0h1m17 0h1m120 0h1m167 0h1M549 389.5h1m5 0h1m4 0h1m8 0h1m2 0h1m22 0h1m2 0h1m3 0h1m20 0h1m5 0h1m31 0h2m2 0h1m6 0h1m3 0h1m13 0h3m1 0h2m5 0h1M676 439.5h1m4 0h1m3 0h1m2 0h1m7 0h1m2 0h1m4 0h1"/><path stroke="#ff6a00" stroke-width="4" d="M410 6h1m86 0h1M732 10h1m55 0h1M410 44h1M188 52h1m176 0h1m14 0h1m13 0h1m37 0h1m39 0h1m1 0h1M13 56h1m249 0h1m8 0h2m52 0h1m1 0h2m2 0h1m1 0h1m10 0h2m72 0h1m314 0h1m53 0h1M664 73h1m104 0h3m16 0h1M488 173h1m2 0h1m239 0h1M164 219h1M426 231h2M164 235h1m322 0h1m2 0h2m2 0h1M768 248h2M482 252h1m12 0h1m14 0h1m16 0h1m3 0h1m98 0h1m177 0h1M623 285h1m111 0h1M768 294h1M481 302h1m21 0h1m6 0h1m11 0h1m3 0h1m105 0h2m9 0h1m159 0h1M551 327h1m4 0h1m5 0h1m4 0h1m6 0h1m7 0h2m21 0h1m19 0h1m41 0h1m10 0h1m2 0h1m5 0h2m4 0h1M785 444h1M514 527h2m1 0h1m3 0h1"/><path stroke="#ff6a00" stroke-width="5" d="M527 314.5h1m273 0h1m2 0h1M550 389.5h1m2 0h2m2 0h1m1 0h1m1 0h2m1 0h1m5 0h1m2 0h2m2 0h1m1 0h2m18 0h1m1 0h1m1 0h1m4 0h2m10 0h1m3 0h1m5 0h3m1 0h1m5 0h1m1 0h2m19 0h1m2 0h1m2 0h1m3 0h1m6 0h1m1 0h1m2 0h1m2 0h2m8 0h2m3 0h1"/><path stroke="#ff5300" stroke-width="4" d="M605 6h1m58 0h2M663 10h3m67 0h1M22 48h1m142 0h1M167 52h2m6 0h1m5 0h1m7 0h1m78 0h1m17 0h1m1 0h1m64 0h2m1 0h1m39 0h1m13 0h1m11 0h1m4 0h1m17 0h1m2 0h1M267 56h1m3 0h1m55 0h1m2 0h1m48 0h1m40 0h1m4 0h1m4 0h1m11 0h1m1 0h1m16 0h1m201 0h1M498 73h1m106 0h1m181 0h1M62 127h1m16 0h3m2 0h2m21 0h2m10 0h1m85 0h2m23 0h3m19 0h2m103 0h2m2 0h1m2 0h2m7 0h3m29 0h1m19 0h3m7 0h1m24 0h3M643 169h1M426 173h1m53 0h1m9 0h1m99 0h1m141 0h2M643 210h1M427 219h1m53 0h1M164 231h1M427 235h1M556 248h1M487 252h2m5 0h1m4 0h2m24 0h1m3 0h1m102 0h1m8 0h1m164 0h1M554 281h1m68 0h1m111 0h1M508 294h1m22 0h1m33 0h1m63 0h2m1 0h1m6 0h2m128 0h1m40 0h1M479 302h1m2 0h1m18 0h1m21 0h1m4 0h1m1 0h1m109 0h1m163 0h1m4 0h1M550 327h1m1 0h1m13 0h1m11 0h1m21 0h2m17 0h1m2 0h1m5 0h1m10 0h1m39 0h1m10 0h1m7 0h1M608 373h1m25 0h1m37 0h1M762 444h1m13 0h1M509 519h1M511 527h1m4 0h1m1 0h1"/><path stroke="#ff5300" stroke-width="5" d="M565 289.5h1m157 0h1M481 314.5h1m160 0h1M548 389.5h1m3 0h1m3 0h1m1 0h1m4 0h1m1 0h3m7 0h1m2 0h1m2 0h1m12 0h1m1 0h2m2 0h1m3 0h2m21 0h2m4 0h1m5 0h1m1 0h1m2 0h1m19 0h1m6 0h1m2 0h1m2 0h1m3 0h1m1 0h2m1 0h1m9 0h2m2 0h1m1 0h1m1 0h1"/><path stroke="#ff3d00" stroke-width="4" d="M499 6h1m106 0h1m124 0h2m56 0h1M165 52h1m103 0h1m19 0h1m70 0h1m32 0h1m3 0h2m5 0h1m21 0h1m19 0h1m7 0h1m22 0h1M331 56h1m9 0h1m45 0h2m10 0h1m12 0h1m1 0h1m2 0h1m23 0h1m1 0h1m7 0h1m8 0h1m8 0h1m135 0h1m163 0h1M663 73h1m70 0h1M480 169h1m331 0h1M481 173h1m107 0h1M611 210h1M486 219h1M589 227h1m142 0h2M486 231h1m6 0h1M492 235h1m238 0h3M565 248h1m193 0h1M484 252h1m4 0h1m8 0h1m2 0h2m1 0h1m1 0h2m15 0h1m109 0h1m171 0h1M610 281h1M486 294h1m2 0h1m5 0h1m1 0h1m1 0h1m2 0h1m3 0h1m3 0h1m5 0h1m4 0h1m1 0h1m4 0h2m103 0h1m7 0h1m162 0h1m4 0h1m1 0h1M488 302h2m5 0h1m3 0h1m142 0h1m162 0h2M810 310h1M581 327h1m10 0h1m14 0h1m6 0h1m3 0h1m2 0h1m44 0h1m33 0h1M549 373h1m11 0h1m8 0h1m1 0h2m3 0h1m1 0h1m14 0h1m3 0h1m10 0h1m13 0h1m5 0h1m2 0h2m1 0h1m25 0h1m3 0h1m3 0h1m4 0h3m13 0h1m3 0h2m7 0h1M770 444h1m35 0h1M512 523h2m2 0h1m4 0h2M519 527h1"/><path stroke="#ff3d00" stroke-width="5" d="M426 214.5h1M556 289.5h1m211 0h1M551 389.5h1m16 0h1m7 0h1m5 0h1m29 0h3m3 0h2m5 0h2m10 0h2m28 0h2m9 0h2m13 0h1M524 439.5h1"/><path stroke="#ff2600" stroke-width="4" d="M496 6h1m274 0h1M427 44h1M426 48h1m98 0h1M22 52h1m148 0h2m4 0h1m2 0h1m93 0h1m1 0h2m46 0h1m30 0h1m2 0h1m24 0h1M264 56h3m24 0h1m97 0h1m1 0h2m8 0h1m9 0h1m1 0h1m14 0h2m20 0h1m2 0h1M164 169h1m261 0h2m62 0h1m2 0h1m117 0h1M489 173h1M484 202h1M484 206h2M731 227h1M482 231h1m4 0h2m1 0h2m2 0h2m93 0h2m142 0h1M489 235h1m99 0h1M483 252h1m12 0h2m26 0h1m117 0h1m161 0h1m7 0h1M773 281h1M610 285h2M479 294h1m3 0h3m8 0h1m5 0h2m1 0h1m1 0h1m3 0h1m3 0h3m1 0h1m1 0h2m6 0h1m2 0h1m113 0h1m157 0h1m2 0h1m1 0h1M487 302h1m10 0h1m7 0h1m294 0h1m5 0h1M494 310h1m3 0h2m5 0h1m24 0h1m98 0h3m7 0h1m167 0h1M571 327h1m3 0h1m20 0h2m39 0h1M548 373h1m3 0h4m1 0h1m1 0h2m3 0h3m2 0h1m13 0h1m15 0h2m1 0h2m3 0h1m4 0h2m12 0h1m3 0h1m5 0h1m3 0h1m1 0h1m19 0h2m6 0h1m2 0h1m8 0h5m2 0h1m1 0h2m3 0h1m2 0h1m2 0h1m1 0h1M777 444h1m18 0h1m12 0h1M515 523h1"/><path stroke="#ff2600" stroke-width="5" d="M571 389.5h1m11 0h1m8 0h2m12 0h2m13 0h2m64 0h1"/><path stroke="#ff1000" stroke-width="4" d="M769 6h1M427 48h1M166 52h1m9 0h1m1 0h2m5 0h2m88 0h1m2 0h1m43 0h1m2 0h1m31 0h1m26 0h1m17 0h2m43 0h1m30 0h1m252 0h1m37 0h1M170 56h1m121 0h1m97 0h1m16 0h1m7 0h2m16 0h2m14 0h1m2 0h1M49 123h1m19 0h1m41 0h1m9 0h1m10 0h1m4 0h1m38 0h1m8 0h1m50 0h1m41 0h1m10 0h1m20 0h1m27 0h1m8 0h1m14 0h1m112 0h1M4 127h3m1 0h6m19 0h5m12 0h3m1 0h2m1 0h1m6 0h2m11 0h1m22 0h1m54 0h2m6 0h1m6 0h3m18 0h3m1 0h3m24 0h5m14 0h2m1 0h3m8 0h1m17 0h2m5 0h2m14 0h1m65 0h2m7 0h1m7 0h3m3 0h3m28 0h2m23 0h4m7 0h3m19 0h3M491 169h1m2 0h1m237 0h1M492 173h1M611 206h1M590 223h1m140 0h2M590 227h1M480 231h1M590 235h1M481 252h1m161 0h1m159 0h1m7 0h1M590 281h1m20 0h1m111 0h1M590 285h1M487 294h2m9 0h1m8 0h1m3 0h1m6 0h1m7 0h1m104 0h1m2 0h1m8 0h1m157 0h1m6 0h1M511 302h1M479 310h1m2 0h2m1 0h2m2 0h1m5 0h1m1 0h1m2 0h4m4 0h4m10 0h2m2 0h1m1 0h2m103 0h2m6 0h1m159 0h2m1 0h1m1 0h1m1 0h2M568 327h1m35 0h1m1 0h1m31 0h1m41 0h1M550 373h2m6 0h1m3 0h1m8 0h1m2 0h2m2 0h1m1 0h2m13 0h1m5 0h1m2 0h1m15 0h1m1 0h1m1 0h2m2 0h1m2 0h1m7 0h1m1 0h1m1 0h2m19 0h1m2 0h1m3 0h1m5 0h1m1 0h2m6 0h1m5 0h1m3 0h2m2 0h1M514 523h1m2 0h1m2 0h1"/><path stroke="#ff1000" stroke-width="5" d="M485 214.5h1M518 289.5h1m240 0h1M580 439.5h1m2 0h1m7 0h4m3 0h2m2 0h1m1 0h1m2 0h1m65 0h1m12 0h1m5 0h1m1 0h1m3 0h1m6 0h1m60 0h1"/><path stroke="#ff0b2f" stroke-width="4" d="M498 6h1m271 0h1m17 0h1M732 44h1M222 48h1m187 0h1m195 0h1m126 0h1M173 52h2m104 0h1m43 0h1m155 0h1m17 0h1m1 0h1m232 0h1M290 56h1m49 0h1m45 0h1m13 0h1m22 0h1m8 0h1M481 169h1m5 0h2m6 0h1m94 0h1m140 0h1M812 206h1M426 210h1M589 223h1m143 0h1M481 231h1m7 0h1m2 0h1m238 0h2M522 252h1M557 285h1m7 0h1m157 0h1m35 0h1m8 0h1M481 294h2m13 0h1m15 0h1m9 0h1m1 0h2m116 0h1m160 0h1m2 0h1m5 0h1M504 302h1M480 310h2m2 0h1m2 0h2m7 0h1m9 0h2m16 0h2m1 0h1m3 0h1m100 0h1m7 0h1m1 0h3m158 0h1m1 0h1m5 0h2M556 373h1m6 0h1m3 0h2m7 0h1m5 0h1m9 0h2m2 0h2m7 0h1m8 0h1m6 0h1m5 0h1m9 0h2m29 0h1m9 0h1m9 0h1m11 0h1M765 444h1m12 0h2m4 0h1M511 523h1m6 0h2"/><path stroke="#ff0b2f" stroke-width="5" d="M164 214.5h1m319 0h1M517 289.5h1m251 0h1M505 439.5h1"/><path stroke="#ff055d" stroke-width="4" d="M663 6h1m70 0h1m52 0h1M22 44h1m469 0h1m6 0h1m165 0h1m65 0h1m38 0h1M664 48h1m105 0h1M187 52h1m34 0h1m57 0h1m124 0h1m86 0h1m5 0h1m107 0h1m57 0h1m105 0h1m16 0h3M182 56h1m153 0h1m1 0h1m42 0h2m2 0h1m36 0h1m50 0h1m18 0h1M492 60h1M492 69h1M492 73h1M589 169h1m143 0h1M485 202h1M486 206h1M507 248h2m1 0h1m118 0h2M556 281h1m212 0h1M480 294h1m23 0h1M504 310h1M606 373h1m11 0h2m46 0h1m14 0h1M772 444h1"/><path stroke="#ff055d" stroke-width="5" d="M492 64.5h1M427 214.5h1m58 0h1M515 289.5h2m2 0h3m25 0h1"/><path stroke="#ff008c" stroke-width="4" d="M426 44h1m98 0h1m79 0h1m57 0h1m123 0h1M497 48h1m107 0h1m59 0h1m103 0h1M169 56h1m116 0h1m50 0h1m21 0h2m3 0h2m14 0h1m25 0h1m17 0h1m6 0h1m39 0h1M489 169h1M426 206h1m216 0h1M487 219h1m6 0h2m94 0h1M483 248h2m9 0h1m1 0h1m2 0h2m5 0h1m18 0h1m2 0h1m1 0h1m103 0h1m173 0h3M769 285h1"/><path stroke="#ff008c" stroke-width="5" d="M512 289.5h1m1 0h1m42 0h1"/><path stroke="#ff00be" stroke-width="4" d="M165 44h1m56 0h1m273 0h1m274 0h1m17 0h1M492 48h1m238 0h2M665 52h1m68 0h1M0 56h1m286 0h1m51 0h1m17 0h1m87 0h1m26 0h1m1 0h1m1 0h1M492 169h1M426 202h1m59 0h1m103 0h1m140 0h1M590 206h1m141 0h2M164 210h1m425 0h1m141 0h2M488 219h1m1 0h2m1 0h1m95 0h1M479 248h1m2 0h1m3 0h2m7 0h1m5 0h2m6 0h1m13 0h2m1 0h2m1 0h1m1 0h1m100 0h2m5 0h2m1 0h2m159 0h1m3 0h1m4 0h1M557 281h1M547 285h1"/><path stroke="#ff00be" stroke-width="5" d="M589 214.5h2m140 0h1m1 0h1M513 289.5h1"/><path stroke="#ff00f0" stroke-width="4" d="M497 44h2m107 0h1m57 0h1m68 0h2m34 0h1m18 0h1M496 48h1m1 0h2m163 0h1m70 0h1m36 0h1m15 0h3M496 52h1m108 0h1m57 0h1m69 0h1m37 0h1M166 56h3m2 0h11m1 0h7m78 0h2m4 0h7m7 0h2m32 0h4m27 0h4m1 0h1m24 0h2m8 0h6m3 0h4m40 0h3m5 0h1m20 0h1m1 0h3M164 202h1m262 0h1m52 0h3m4 0h9m93 0h1m142 0h2M164 206h1m262 0h1m52 0h3m4 0h9m93 0h1m141 0h1M427 210h1m52 0h3m1 0h12m93 0h1m141 0h1M489 219h1m2 0h1m238 0h3M480 248h2m3 0h1m2 0h2m7 0h2m4 0h3m5 0h1m10 0h1m108 0h1m9 0h1m2 0h1m156 0h2m1 0h3m4 0h1M479 281h11m4 0h18m10 0h10m15 0h1m17 0h1m63 0h6m4 0h6m114 0h1m8 0h1m32 0h12M479 285h11m4 0h18m10 0h10m24 0h1m72 0h6m4 0h6m156 0h12M548 360h36m8 0h18m2 0h3m3 0h27m16 0h44M548 369h36m8 0h18m2 0h3m3 0h27m16 0h44M528 444h25m3 0h74m5 0h4m4 0h19m2 0h72M511 519h12"/><path stroke="#ff00f0" stroke-width="5" d="M480 214.5h3m4 0h9m236 0h1M479 289.5h11m4 0h18m10 0h10m97 0h6m4 0h6m156 0h12M548 364.5h36m8 0h18m2 0h3m3 0h27m16 0h44M528 439.5h25m3 0h24m1 0h2m1 0h7m4 0h3m2 0h2m1 0h1m1 0h2m1 0h22m5 0h4m4 0h19m2 0h9m2 0h1m1 0h1m1 0h2m1 0h1m1 0h1m2 0h1m1 0h1m1 0h1m1 0h1m1 0h1m1 0h1m2 0h4m2 0h30m23 0h1m1 0h4m2 0h2m1 0h1m2 0h40"/></svg></div>
<div class="lab" style="top:116.2px">Bathroom Small</div>
<div class="lab" style="top:195.3px">Bedroom</div>
<div class="lab" style="top:274.5px">Bathroom Main</div>
<div class="lab" style="top:353.6px">Kitchen</div>
<div class="lab" style="top:432.8px">Office</div>
<div class="lab" style="top:511.9px">Living Room</div>
<div class="lab" style="top:591.0px">Dining Room table</div>
<div class="tip">267  64B70888F6F0  m8_max @ Bathroom Main</div>
<div class="a" style="left:122px;top:702px;width:800px;height:1px;background:#dfe4ee"></div>
<div class="info">267  64B70888F6F0  m4_max @ Bathroom Main 11:45:00</div>
<div class="a" style="left:213.3px;top:671.8px;width:73px;height:38.6px;box-sizing:border-box;border:3.4px solid #e01b1f"></div>
<div class="a" style="left:-1px;top:694px;width:123px;height:88.5px;box-sizing:border-box;border:1px solid #cbcbcb;background:#fff"></div>
<div class="a" style="left:102px;top:695px;width:19px;height:86.5px;background:#fafafa"></div>
<span class="pill" style="left:6.2px;width:21.4px">All</span><span class="pill" style="left:32px;width:33.5px">None</span>
<div class="a" style="left:6px;top:727px;width:86.6px;height:1px;background:#d0d0d0"></div>
<span class="cb" style="left:6.2px;top:732.0px;width:10.8px;height:10.8px"></span>
<div class="a" style="left:21px;top:731.0px;width:10px;height:10px;background:#0000fe"></div>
<span class="lg" style="left:35.6px;top:729.8px">m0_max:266</span>
<span class="cb" style="left:6.2px;top:751.0px;width:10.8px;height:10.8px"></span>
<div class="a" style="left:21px;top:750.0px;width:10px;height:10px;background:#0000fe"></div>
<span class="lg" style="left:35.6px;top:748.8px">m1_max:266</span>
<span class="cb" style="left:6.2px;top:770.0px;width:10.8px;height:10.8px"></span>
<div class="a" style="left:21px;top:769.0px;width:10px;height:10px;background:#0000fe"></div>
<span class="lg" style="left:35.6px;top:767.8px">m2_max:266</span>
<svg class="a" style="left:102px;top:695px" width="20" height="87" viewBox="0 0 20 87"><path d="M9.7 7.3L14.9 14.8H4.5Z M9.7 80.7L14.9 73.2H4.5Z" fill="#8b8b8b" stroke="#8b8b8b" stroke-width="1.6" stroke-linejoin="round"/><rect x="4" y="22.6" width="11" height="21.4" rx="5.5" fill="#8b8b8b"/></svg>
<svg class="a" style="left:0;top:0" width="943" height="827" viewBox="0 0 943 827"><defs><filter id="sh" x="-5%" y="-20%" width="110%" height="140%"><feGaussianBlur stdDeviation="1.6"/></filter></defs><rect x="160" y="709.5" width="753" height="99.5" fill="#efefef"/><rect x="160" y="727.2" width="753" height="1" fill="#c8c8c8"/><rect x="160" y="744.7" width="753" height="1" fill="#c8c8c8"/><rect x="160" y="762.5" width="753" height="1" fill="#c8c8c8"/><rect x="160" y="780.2" width="753" height="1" fill="#c8c8c8"/><rect x="160" y="797.7" width="753" height="1" fill="#c8c8c8"/><rect x="277" y="709.5" width="1" height="99.5" fill="#c4c4c4"/><rect x="276.9" y="810" width="1.2" height="4" fill="#333"/><rect x="405.7" y="709.5" width="1" height="99.5" fill="#c4c4c4"/><rect x="405.6" y="810" width="1.2" height="4" fill="#333"/><rect x="534.4" y="709.5" width="1" height="99.5" fill="#c4c4c4"/><rect x="534.3" y="810" width="1.2" height="4" fill="#333"/><rect x="663.1" y="709.5" width="1" height="99.5" fill="#c4c4c4"/><rect x="663" y="810" width="1.2" height="4" fill="#333"/><rect x="791.8" y="709.5" width="1" height="99.5" fill="#c4c4c4"/><rect x="791.7" y="810" width="1.2" height="4" fill="#333"/><path d="M161.0 806.7 L164.0 807.9 L166.8 806.8 L169.9 806.0 L172.8 807.1 L176.1 805.7 L178.7 805.7 L182.0 807.3 L184.3 808.1 L187.9 807.2 L190.9 805.9 L193.1 806.9 L195.4 806.0 L198.0 805.6 L200.8 806.6 L204.2 806.8 L207.3 806.8 L210.4 806.7 L213.0 808.1 L216.6 807.7 L219.8 806.3 L222.3 806.3 L224.6 807.5 L227.4 807.7 L230.1 808.0 L233.5 805.5 L236.0 807.9 L238.8 808.0 L241.6 805.7 L244.7 807.5 L247.3 805.7 L249.9 808.0 L253.2 805.8 L255.7 805.8 L258.0 807.6 L260.5 807.0 L263.3 806.0 L266.5 805.8 L269.6 805.8 L272.4 806.1 L275.0 808.0 L278.3 806.3 L281.7 806.0 L284.5 807.7 L287.6 805.8 L291.2 806.1 L293.7 807.5 L296.4 806.3 L298.7 805.7 L301.7 806.1 L304.8 806.5 L307.6 808.0 L309.4 806.5 L310.7 751.5 L312.0 806.0 L313.9 806.0 L316.3 807.9 L319.6 806.1 L322.1 807.4 L325.6 806.0 L329.2 807.8 L332.2 806.6 L334.6 805.6 L338.1 806.1 L341.3 806.2 L344.6 807.1 L347.3 806.0 L350.5 805.7 L353.0 807.0 L356.4 807.1 L359.0 807.9 L361.5 805.5 L364.0 806.7 L366.3 806.0 L369.0 807.0 L371.4 806.4 L374.9 808.0 L378.0 807.3 L381.0 805.9 L383.2 805.5 L386.7 807.3 L390.3 805.6 L393.4 806.8 L396.6 806.3 L400.2 808.0 L403.1 808.0 L406.6 807.4 L409.8 807.6 L413.3 806.4 L416.4 807.8 L419.9 806.6 L423.2 807.7 L426.2 807.1 L428.9 807.0 L431.9 805.7 L435.0 808.1 L438.5 807.4 L441.2 807.4 L444.2 806.6 L447.6 805.7 L450.9 805.6 L453.9 806.8 L456.4 807.3 L459.3 807.1 L462.8 806.2 L465.0 806.3 L468.2 806.0 L470.6 807.9 L473.7 806.6 L477.2 806.4 L480.3 806.0 L483.1 807.6 L486.6 807.8 L489.3 807.0 L492.0 805.9 L494.9 807.7 L498.3 807.3 L501.8 806.2 L504.2 806.7 L506.8 806.1 L509.6 807.1 L512.5 806.3 L515.9 808.1 L518.7 805.7 L520.9 807.8 L523.2 807.3 L526.2 806.3 L529.5 805.5 L531.9 806.7 L534.1 807.7 L536.7 805.9 L538.9 807.1 L541.7 807.1 L544.9 807.6 L548.4 807.3 L550.9 806.7 L552.2 806.5 L553.5 716.5 L554.8 806.0 L556.2 807.4 L558.6 806.2 L561.3 808.0 L564.3 808.0 L567.5 808.0 L570.8 808.0 L573.1 808.0 L576.4 808.0 L579.2 808.0 L582.7 808.0 L585.7 808.0 L589.0 808.0 L591.8 808.0 L594.3 808.0 L597.7 808.0 L600.9 808.0 L602.4 806.0 L604.0 735.0 L605.2 741.0 L607.0 804.5 L607.9 806.9 L608.6 790.0 L610.4 723.0 L613.0 732.5 L614.0 734.5 L615.6 720.7 L617.6 806.0 L620.2 804.1 L623.1 804.5 L625.4 799.4 L628.0 799.1 L630.4 803.8 L633.8 807.3 L637.3 806.8 L640.9 805.7 L643.4 802.7 L646.6 804.1 L650.0 802.9 L652.7 807.7 L656.2 806.0 L659.6 808.0 L662.5 807.0 L665.0 806.9 L667.9 807.1 L670.1 808.0 L673.0 806.5 L676.4 807.0 L679.2 807.3 L681.5 806.9 L684.3 808.0 L687.8 806.2 L690.7 805.8 L693.5 807.6 L696.9 806.7 L699.6 806.0 L702.7 807.9 L703.9 806.5 L705.2 728.0 L706.5 806.0 L707.3 806.0 L709.8 807.3 L712.4 806.4 L715.5 805.8 L718.7 805.8 L721.6 806.2 L723.2 806.5 L724.5 725.7 L725.8 806.0 L726.9 806.5 L729.7 806.9 L732.1 806.0 L735.2 807.2 L738.2 807.7 L741.2 797.9 L744.4 803.2 L747.1 806.3 L750.6 806.1 L753.4 806.5 L754.7 739.0 L756.0 806.0 L756.6 806.1 L759.8 806.2 L762.1 807.7 L764.9 807.6 L767.3 806.5 L770.4 805.5 L772.9 807.3 L776.4 808.0 L778.8 806.8 L782.0 806.8 L785.2 806.0 L787.5 805.8 L789.7 806.9 L792.7 807.0 L795.1 806.0 L797.5 807.7 L801.1 807.9 L803.5 805.7 L807.0 806.7 L810.3 806.3 L813.1 806.8 L815.9 807.1 L818.1 807.3 L821.5 806.0 L824.4 807.4 L827.1 806.0 L829.6 806.8 L831.8 807.8 L833.5 806.0 L835.1 710.0 L836.3 718.0 L838.1 805.0 L838.5 807.1 L841.3 807.1 L844.2 808.1 L847.5 806.2 L851.0 807.4 L854.3 807.6 L857.0 807.8 L860.5 807.3 L863.7 807.5 L866.5 807.4 L868.8 806.4 L871.7 805.5 L874.4 807.2 L877.4 806.1 L881.0 807.2 L883.6 807.2 L886.6 806.9 L889.4 808.1 L892.5 807.3 L895.7 808.0 L898.0 807.1 L901.2 806.2 L904.0 805.6 L906.5 806.5 L908.8 806.2 L909.0 805.0 L911.1 711.0 L912.3 751.0 L913.0 800.0" fill="none" stroke="#000" stroke-opacity=".16" stroke-width="2.5" filter="url(#sh)" transform="translate(3,1)"/><path d="M161.0 806.7 L164.0 807.9 L166.8 806.8 L169.9 806.0 L172.8 807.1 L176.1 805.7 L178.7 805.7 L182.0 807.3 L184.3 808.1 L187.9 807.2 L190.9 805.9 L193.1 806.9 L195.4 806.0 L198.0 805.6 L200.8 806.6 L204.2 806.8 L207.3 806.8 L210.4 806.7 L213.0 808.1 L216.6 807.7 L219.8 806.3 L222.3 806.3 L224.6 807.5 L227.4 807.7 L230.1 808.0 L233.5 805.5 L236.0 807.9 L238.8 808.0 L241.6 805.7 L244.7 807.5 L247.3 805.7 L249.9 808.0 L253.2 805.8 L255.7 805.8 L258.0 807.6 L260.5 807.0 L263.3 806.0 L266.5 805.8 L269.6 805.8 L272.4 806.1 L275.0 808.0 L278.3 806.3 L281.7 806.0 L284.5 807.7 L287.6 805.8 L291.2 806.1 L293.7 807.5 L296.4 806.3 L298.7 805.7 L301.7 806.1 L304.8 806.5 L307.6 808.0 L309.4 806.5 L310.7 751.5 L312.0 806.0 L313.9 806.0 L316.3 807.9 L319.6 806.1 L322.1 807.4 L325.6 806.0 L329.2 807.8 L332.2 806.6 L334.6 805.6 L338.1 806.1 L341.3 806.2 L344.6 807.1 L347.3 806.0 L350.5 805.7 L353.0 807.0 L356.4 807.1 L359.0 807.9 L361.5 805.5 L364.0 806.7 L366.3 806.0 L369.0 807.0 L371.4 806.4 L374.9 808.0 L378.0 807.3 L381.0 805.9 L383.2 805.5 L386.7 807.3 L390.3 805.6 L393.4 806.8 L396.6 806.3 L400.2 808.0 L403.1 808.0 L406.6 807.4 L409.8 807.6 L413.3 806.4 L416.4 807.8 L419.9 806.6 L423.2 807.7 L426.2 807.1 L428.9 807.0 L431.9 805.7 L435.0 808.1 L438.5 807.4 L441.2 807.4 L444.2 806.6 L447.6 805.7 L450.9 805.6 L453.9 806.8 L456.4 807.3 L459.3 807.1 L462.8 806.2 L465.0 806.3 L468.2 806.0 L470.6 807.9 L473.7 806.6 L477.2 806.4 L480.3 806.0 L483.1 807.6 L486.6 807.8 L489.3 807.0 L492.0 805.9 L494.9 807.7 L498.3 807.3 L501.8 806.2 L504.2 806.7 L506.8 806.1 L509.6 807.1 L512.5 806.3 L515.9 808.1 L518.7 805.7 L520.9 807.8 L523.2 807.3 L526.2 806.3 L529.5 805.5 L531.9 806.7 L534.1 807.7 L536.7 805.9 L538.9 807.1 L541.7 807.1 L544.9 807.6 L548.4 807.3 L550.9 806.7 L552.2 806.5 L553.5 716.5 L554.8 806.0 L556.2 807.4 L558.6 806.2 L561.3 808.0 L564.3 808.0 L567.5 808.0 L570.8 808.0 L573.1 808.0 L576.4 808.0 L579.2 808.0 L582.7 808.0 L585.7 808.0 L589.0 808.0 L591.8 808.0 L594.3 808.0 L597.7 808.0 L600.9 808.0 L602.4 806.0 L604.0 735.0 L605.2 741.0 L607.0 804.5 L607.9 806.9 L608.6 790.0 L610.4 723.0 L613.0 732.5 L614.0 734.5 L615.6 720.7 L617.6 806.0 L620.2 804.1 L623.1 804.5 L625.4 799.4 L628.0 799.1 L630.4 803.8 L633.8 807.3 L637.3 806.8 L640.9 805.7 L643.4 802.7 L646.6 804.1 L650.0 802.9 L652.7 807.7 L656.2 806.0 L659.6 808.0 L662.5 807.0 L665.0 806.9 L667.9 807.1 L670.1 808.0 L673.0 806.5 L676.4 807.0 L679.2 807.3 L681.5 806.9 L684.3 808.0 L687.8 806.2 L690.7 805.8 L693.5 807.6 L696.9 806.7 L699.6 806.0 L702.7 807.9 L703.9 806.5 L705.2 728.0 L706.5 806.0 L707.3 806.0 L709.8 807.3 L712.4 806.4 L715.5 805.8 L718.7 805.8 L721.6 806.2 L723.2 806.5 L724.5 725.7 L725.8 806.0 L726.9 806.5 L729.7 806.9 L732.1 806.0 L735.2 807.2 L738.2 807.7 L741.2 797.9 L744.4 803.2 L747.1 806.3 L750.6 806.1 L753.4 806.5 L754.7 739.0 L756.0 806.0 L756.6 806.1 L759.8 806.2 L762.1 807.7 L764.9 807.6 L767.3 806.5 L770.4 805.5 L772.9 807.3 L776.4 808.0 L778.8 806.8 L782.0 806.8 L785.2 806.0 L787.5 805.8 L789.7 806.9 L792.7 807.0 L795.1 806.0 L797.5 807.7 L801.1 807.9 L803.5 805.7 L807.0 806.7 L810.3 806.3 L813.1 806.8 L815.9 807.1 L818.1 807.3 L821.5 806.0 L824.4 807.4 L827.1 806.0 L829.6 806.8 L831.8 807.8 L833.5 806.0 L835.1 710.0 L836.3 718.0 L838.1 805.0 L838.5 807.1 L841.3 807.1 L844.2 808.1 L847.5 806.2 L851.0 807.4 L854.3 807.6 L857.0 807.8 L860.5 807.3 L863.7 807.5 L866.5 807.4 L868.8 806.4 L871.7 805.5 L874.4 807.2 L877.4 806.1 L881.0 807.2 L883.6 807.2 L886.6 806.9 L889.4 808.1 L892.5 807.3 L895.7 808.0 L898.0 807.1 L901.2 806.2 L904.0 805.6 L906.5 806.5 L908.8 806.2 L909.0 805.0 L911.1 711.0 L912.3 751.0 L913.0 800.0" fill="none" stroke="#2a2af0" stroke-width="1.3" stroke-linejoin="round"/><rect x="385" y="709.5" width="1.2" height="99.5" fill="#4a4a4a"/><rect x="160" y="709" width="753" height="1" fill="#5a5a5a"/><rect x="912.5" y="709.5" width="1" height="99.5" fill="#5a5a5a"/><rect x="158" y="709" width="2" height="102" fill="#000"/><rect x="158" y="809" width="756" height="2.2" fill="#000"/><rect x="160" y="811.2" width="755" height="2.5" fill="#000" fill-opacity=".25"/><rect x="155" y="709.2" width="3.4" height="1.2" fill="#222"/><rect x="155" y="727.1" width="3.4" height="1.2" fill="#222"/><rect x="155" y="744.6" width="3.4" height="1.2" fill="#222"/><rect x="155" y="762.4" width="3.4" height="1.2" fill="#222"/><rect x="155" y="780.1" width="3.4" height="1.2" fill="#222"/><rect x="155" y="797.6" width="3.4" height="1.2" fill="#222"/></svg>
<span class="ax" style="left:129.8px;top:706.2px">60.00</span>
<span class="ax" style="left:129.8px;top:723.9px">50.00</span>
<span class="ax" style="left:129.8px;top:741.4px">40.00</span>
<span class="ax" style="left:129.8px;top:759.2px">30.00</span>
<span class="ax" style="left:129.8px;top:776.9px">20.00</span>
<span class="ax" style="left:129.8px;top:794.4px">10.00</span>
<span class="ax" style="left:232.5px;top:816.2px;width:90px;text-align:center;font-family:&quot;Liberation Sans&quot;,sans-serif;font-size:9.8px;letter-spacing:-.3px;line-height:11px;background:transparent">07-10-25 02:33:20</span>
<span class="ax" style="left:361.2px;top:816.2px;width:90px;text-align:center;font-family:&quot;Liberation Sans&quot;,sans-serif;font-size:9.8px;letter-spacing:-.3px;line-height:11px;background:transparent">07-10-25 05:20:00</span>
<span class="ax" style="left:489.9px;top:816.2px;width:90px;text-align:center;font-family:&quot;Liberation Sans&quot;,sans-serif;font-size:9.8px;letter-spacing:-.3px;line-height:11px;background:transparent">07-10-25 08:06:40</span>
<span class="ax" style="left:618.6px;top:816.2px;width:90px;text-align:center;font-family:&quot;Liberation Sans&quot;,sans-serif;font-size:9.8px;letter-spacing:-.3px;line-height:11px;background:transparent">07-10-25 10:53:20</span>
<span class="ax" style="left:747.3px;top:816.2px;width:90px;text-align:center;font-family:&quot;Liberation Sans&quot;,sans-serif;font-size:9.8px;letter-spacing:-.3px;line-height:11px;background:transparent">07-10-25 13:40:00</span>
<div class="a" style="left:-1px;top:816px;width:876px;height:20px;box-sizing:border-box;border:1px solid #6f6f6f;"></div>
<span class="t" style="left:2.5px;top:818.6px;font-size:10.95px">key_state = 1; ctrl_key_state = 1; ctrl_key_state =0</span>
<div class="a" style="left:938px;top:0;width:1px;height:827px;background:#6e6e6e"></div>
<div class="a" style="left:939px;top:0;width:1px;height:827px;background:#2d5699"></div>
<div class="a" style="left:940px;top:0;width:3px;height:827px;background:#fff"></div>
<div class="a" style="left:940px;top:0;width:3px;height:48px;background:#f5f3f1"></div>
<div class="a" style="left:942px;top:51px;width:1px;height:765px;background:#a9a9a9"></div>
<div class="a" style="left:940px;top:818px;width:3px;height:9px;background:#ededed"></div></body></html>
